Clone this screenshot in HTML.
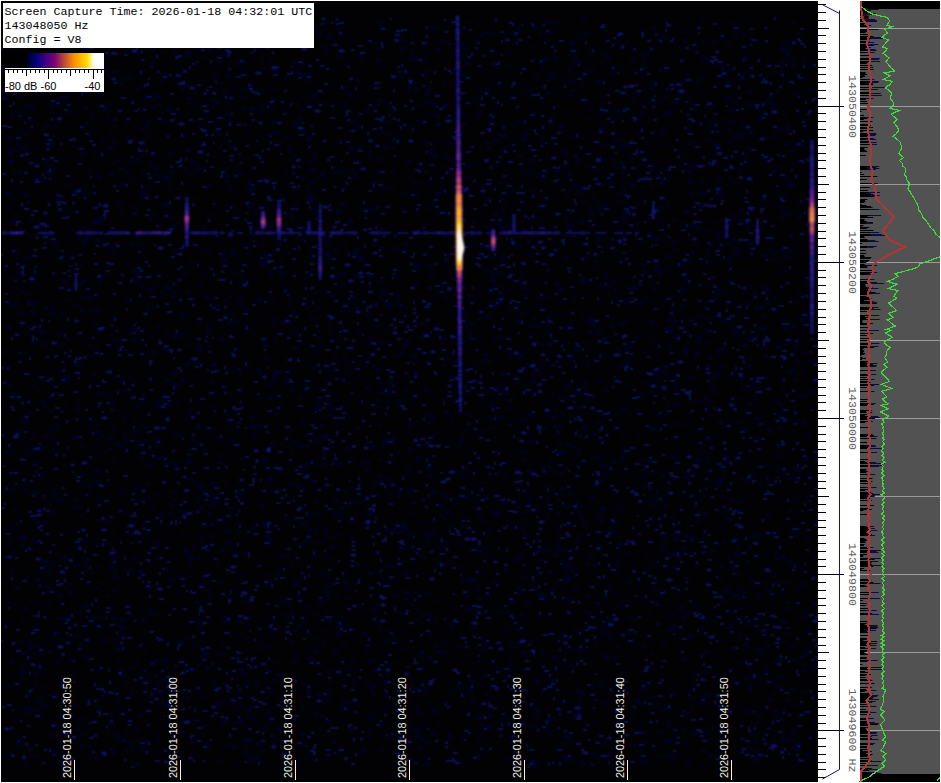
<!DOCTYPE html><html><head><meta charset="utf-8"><style>html,body{margin:0;padding:0;background:#fff;width:941px;height:783px;overflow:hidden}svg{position:absolute;left:0;top:0}</style></head><body><svg width="941" height="783" viewBox="0 0 941 783"><defs>

<filter id="bn" filterUnits="userSpaceOnUse" x="1" y="1" width="817" height="781"><feGaussianBlur stdDeviation="0.85"/></filter>
<filter id="bs" filterUnits="userSpaceOnUse" x="1" y="1" width="817" height="781"><feGaussianBlur stdDeviation="1.0"/></filter>



<linearGradient id="cbar" x1="0" x2="1" y1="0" y2="0">
<stop offset="0" stop-color="#000"/><stop offset="0.198" stop-color="#000"/>
<stop offset="0.318" stop-color="#000080"/><stop offset="0.414" stop-color="#400080"/>
<stop offset="0.505" stop-color="#800070"/><stop offset="0.582" stop-color="#b04040"/>
<stop offset="0.702" stop-color="#ff9000"/><stop offset="0.833" stop-color="#ffe000"/>
<stop offset="0.899" stop-color="#fff"/><stop offset="1" stop-color="#fff"/>
</linearGradient>
</defs><rect x="1" y="1" width="817" height="781" fill="#020204"/><g filter="url(#bn)"><path fill="#06063a" d="M582 17h4v2h-4zM273 19h3v2h-3zM514 19h3v1h-3zM750 20h4v1h-4zM19 21h3v2h-3zM547 21h5v2h-5zM544 22h3v2h-3zM731 22h2v3h-2zM208 23h4v2h-4zM478 23h3v2h-3zM207 25h4v1h-4zM145 26h3v2h-3zM84 27h5v2h-5zM273 27h3v2h-3zM314 27h2v3h-2zM338 27h2v3h-2zM430 27h4v2h-4zM535 27h2v3h-2zM697 27h3v2h-3zM740 27h4v1h-4zM234 28h2v2h-2zM406 28h2v2h-2zM519 28h2v2h-2zM697 28h3v2h-3zM34 29h3v2h-3zM57 29h2v3h-2zM455 29h5v2h-5zM9 30h5v2h-5zM32 30h4v2h-4zM90 30h3v2h-3zM121 30h2v3h-2zM139 30h2v3h-2zM275 30h2v2h-2zM492 30h3v1h-3zM638 30h4v1h-4zM37 31h4v2h-4zM433 31h2v2h-2zM454 31h3v1h-3zM548 31h4v2h-4zM682 31h3v2h-3zM37 32h2v2h-2zM97 32h3v2h-3zM318 32h4v2h-4zM319 32h3v2h-3zM484 32h4v2h-4zM511 32h2v2h-2zM584 32h4v2h-4zM90 33h2v2h-2zM140 33h2v2h-2zM146 33h2v3h-2zM260 33h3v2h-3zM339 33h2v3h-2zM491 33h3v2h-3zM664 33h3v1h-3zM798 33h3v1h-3zM294 34h3v1h-3zM329 34h4v1h-4zM500 34h4v1h-4zM742 34h3v2h-3zM327 35h4v1h-4zM577 36h3v2h-3zM750 36h3v1h-3zM48 37h3v1h-3zM295 37h5v2h-5zM328 37h3v2h-3zM721 37h3v2h-3zM658 38h3v2h-3zM56 39h3v2h-3zM351 39h2v3h-2zM395 39h3v1h-3zM474 39h3v2h-3zM183 40h5v2h-5zM253 40h2v2h-2zM394 40h3v2h-3zM403 40h2v2h-2zM546 40h3v2h-3zM615 40h4v1h-4zM626 40h4v1h-4zM264 41h5v2h-5zM301 41h3v1h-3zM371 41h2v3h-2zM572 42h2v3h-2zM726 42h5v2h-5zM785 42h3v1h-3zM2 43h5v2h-5zM617 43h2v3h-2zM694 43h3v2h-3zM742 43h2v2h-2zM815 43h4v2h-4zM12 44h3v2h-3zM422 44h4v2h-4zM460 44h5v2h-5zM130 45h5v2h-5zM206 45h4v2h-4zM216 45h4v1h-4zM224 45h3v1h-3zM324 46h2v3h-2zM531 46h2v3h-2zM788 46h5v2h-5zM403 47h4v1h-4zM684 47h5v2h-5zM783 47h2v2h-2zM87 48h2v3h-2zM400 48h3v2h-3zM436 48h4v2h-4zM463 48h5v2h-5zM67 49h3v2h-3zM83 49h2v2h-2zM148 49h2v3h-2zM656 49h3v1h-3zM126 50h3v2h-3zM153 50h3v2h-3zM173 50h4v2h-4zM410 50h3v2h-3zM185 51h4v2h-4zM196 51h4v1h-4zM553 51h3v1h-3zM785 51h5v2h-5zM29 52h2v3h-2zM185 52h5v2h-5zM235 52h3v2h-3zM327 52h2v2h-2zM400 52h3v1h-3zM422 52h2v3h-2zM508 52h3v2h-3zM601 53h5v2h-5zM787 53h2v3h-2zM225 54h2v2h-2zM359 54h3v2h-3zM646 54h3v2h-3zM222 55h3v1h-3zM260 55h3v1h-3zM453 55h3v2h-3zM461 55h3v2h-3zM337 56h4v2h-4zM608 56h2v3h-2zM68 57h3v1h-3zM201 57h3v2h-3zM409 57h3v2h-3zM566 57h4v1h-4zM744 57h4v2h-4zM791 57h2v3h-2zM80 58h3v2h-3zM218 58h3v2h-3zM410 58h2v3h-2zM414 58h5v2h-5zM544 58h5v2h-5zM574 58h3v2h-3zM803 58h3v2h-3zM244 59h2v3h-2zM269 59h3v2h-3zM376 59h5v2h-5zM540 59h5v2h-5zM633 59h3v2h-3zM783 59h3v2h-3zM344 60h3v1h-3zM361 60h3v2h-3zM576 60h4v1h-4zM643 60h2v3h-2zM708 60h2v3h-2zM239 61h3v2h-3zM424 61h2v3h-2zM631 61h2v3h-2zM151 62h4v2h-4zM228 62h3v1h-3zM260 62h3v2h-3zM466 62h5v2h-5zM586 62h4v1h-4zM780 62h3v2h-3zM115 63h4v1h-4zM220 63h3v1h-3zM235 63h3v2h-3zM299 63h5v2h-5zM489 63h2v2h-2zM572 63h3v1h-3zM1 64h2v3h-2zM167 64h3v1h-3zM210 64h3v1h-3zM237 64h2v2h-2zM769 64h4v2h-4zM26 65h5v2h-5zM343 65h2v2h-2zM507 65h3v2h-3zM790 65h5v2h-5zM717 66h2v2h-2zM263 67h2v2h-2zM297 67h2v3h-2zM620 67h3v2h-3zM721 67h5v2h-5zM542 68h3v2h-3zM570 68h3v1h-3zM243 69h2v2h-2zM333 69h3v2h-3zM380 69h3v1h-3zM664 69h2v3h-2zM697 69h2v2h-2zM12 70h4v2h-4zM274 70h5v2h-5zM416 70h2v2h-2zM615 70h3v1h-3zM728 70h3v2h-3zM781 70h2v3h-2zM54 71h5v2h-5zM71 71h3v1h-3zM114 71h3v2h-3zM586 71h3v2h-3zM723 71h2v2h-2zM746 71h4v1h-4zM22 72h2v3h-2zM93 72h4v1h-4zM295 72h5v2h-5zM402 72h3v1h-3zM427 72h3v1h-3zM609 72h3v2h-3zM291 73h2v2h-2zM305 73h2v3h-2zM460 73h3v2h-3zM554 73h2v3h-2zM686 73h3v1h-3zM42 74h3v2h-3zM86 74h3v2h-3zM162 74h4v2h-4zM179 74h3v2h-3zM300 74h4v2h-4zM549 74h3v2h-3zM725 74h4v2h-4zM760 74h2v2h-2zM226 75h5v2h-5zM394 75h2v3h-2zM401 75h2v3h-2zM423 75h3v2h-3zM568 75h2v2h-2zM583 75h4v2h-4zM741 75h3v2h-3zM457 76h3v2h-3zM464 76h3v1h-3zM518 76h2v2h-2zM640 76h3v2h-3zM744 76h3v1h-3zM241 77h2v2h-2zM489 77h4v1h-4zM505 77h4v1h-4zM549 77h4v1h-4zM699 77h4v2h-4zM763 77h4v1h-4zM801 77h5v2h-5zM398 78h3v1h-3zM561 79h3v2h-3zM161 80h2v3h-2zM200 80h4v1h-4zM305 80h4v2h-4zM569 80h5v2h-5zM681 80h3v2h-3zM113 81h5v2h-5zM414 81h2v3h-2zM596 81h5v2h-5zM652 81h3v2h-3zM689 81h4v1h-4zM727 81h4v2h-4zM790 81h4v1h-4zM185 82h4v1h-4zM443 82h3v2h-3zM524 82h2v2h-2zM63 83h4v1h-4zM119 83h4v2h-4zM252 83h3v2h-3zM334 83h2v2h-2zM696 83h3v1h-3zM716 83h4v1h-4zM582 84h2v3h-2zM600 84h4v1h-4zM769 84h4v1h-4zM370 85h2v3h-2zM457 85h3v2h-3zM344 86h4v2h-4zM407 86h4v2h-4zM91 87h3v2h-3zM231 87h4v2h-4zM248 87h5v2h-5zM408 87h3v1h-3zM475 87h3v2h-3zM486 87h5v2h-5zM538 87h2v2h-2zM553 87h2v3h-2zM650 87h4v2h-4zM798 87h3v2h-3zM135 88h4v2h-4zM181 88h4v2h-4zM273 88h3v2h-3zM428 88h3v2h-3zM34 89h4v2h-4zM35 89h3v1h-3zM66 89h5v2h-5zM643 89h3v1h-3zM807 89h4v1h-4zM812 89h4v2h-4zM67 90h4v2h-4zM98 90h3v2h-3zM407 90h3v2h-3zM570 90h5v2h-5zM776 90h2v3h-2zM65 91h4v2h-4zM748 91h3v1h-3zM205 92h3v2h-3zM351 92h3v1h-3zM546 92h4v2h-4zM636 92h2v2h-2zM678 92h5v2h-5zM748 92h3v2h-3zM24 93h2v3h-2zM36 93h3v2h-3zM425 93h5v2h-5zM495 93h3v1h-3zM794 93h4v2h-4zM45 94h2v2h-2zM101 94h2v3h-2zM312 94h4v1h-4zM504 94h2v3h-2zM529 94h3v2h-3zM145 95h2v3h-2zM156 95h4v2h-4zM310 95h2v2h-2zM603 95h3v2h-3zM770 95h2v3h-2zM17 96h4v2h-4zM38 96h3v1h-3zM62 96h5v2h-5zM242 96h5v2h-5zM311 96h4v2h-4zM2 97h2v3h-2zM145 97h2v3h-2zM242 97h2v2h-2zM726 97h5v2h-5zM58 98h2v2h-2zM351 98h4v1h-4zM633 98h3v1h-3zM271 99h5v2h-5zM52 100h3v2h-3zM130 100h5v2h-5zM378 100h5v2h-5zM426 100h5v2h-5zM474 100h4v1h-4zM580 100h5v2h-5zM648 100h2v3h-2zM202 101h2v2h-2zM215 101h2v2h-2zM731 101h5v2h-5zM765 101h4v2h-4zM215 102h5v2h-5zM266 102h4v1h-4zM387 102h3v2h-3zM672 102h5v2h-5zM107 103h3v2h-3zM167 103h3v1h-3zM326 103h2v3h-2zM344 103h3v2h-3zM423 103h2v2h-2zM601 103h2v2h-2zM639 103h3v2h-3zM660 103h3v2h-3zM690 103h3v1h-3zM747 103h5v2h-5zM772 103h4v2h-4zM108 104h3v1h-3zM226 104h3v2h-3zM296 104h4v1h-4zM308 104h3v2h-3zM342 104h2v2h-2zM431 104h5v2h-5zM542 104h3v2h-3zM707 104h2v3h-2zM711 104h4v2h-4zM26 105h3v2h-3zM57 105h4v2h-4zM258 105h3v1h-3zM259 105h3v2h-3zM30 106h4v2h-4zM151 106h5v2h-5zM442 106h5v2h-5zM771 106h2v3h-2zM243 107h2v3h-2zM251 107h3v2h-3zM103 108h4v1h-4zM103 108h5v2h-5zM270 108h3v2h-3zM120 109h4v2h-4zM167 109h5v2h-5zM249 109h4v2h-4zM735 109h3v1h-3zM21 110h2v3h-2zM78 110h4v1h-4zM194 110h4v1h-4zM365 110h4v2h-4zM479 110h3v2h-3zM614 110h3v2h-3zM730 110h2v2h-2zM814 110h3v2h-3zM264 111h3v2h-3zM389 111h4v1h-4zM668 111h4v2h-4zM160 112h2v2h-2zM205 112h4v1h-4zM532 112h3v2h-3zM575 112h3v2h-3zM90 113h3v2h-3zM187 113h2v2h-2zM224 113h5v2h-5zM460 113h2v3h-2zM639 113h4v2h-4zM11 114h3v2h-3zM229 114h2v3h-2zM291 114h3v1h-3zM476 114h4v2h-4zM665 114h4v1h-4zM184 115h2v2h-2zM51 116h3v1h-3zM616 116h2v2h-2zM755 116h2v2h-2zM92 117h3v2h-3zM300 117h2v2h-2zM551 117h3v2h-3zM610 117h3v2h-3zM162 118h2v3h-2zM299 118h3v2h-3zM671 118h3v1h-3zM29 119h5v2h-5zM488 119h2v2h-2zM615 119h3v1h-3zM636 119h3v2h-3zM57 120h3v2h-3zM193 120h3v1h-3zM217 120h4v1h-4zM352 120h4v2h-4zM518 120h3v1h-3zM759 120h3v2h-3zM803 120h4v1h-4zM125 121h4v1h-4zM229 121h4v2h-4zM272 121h5v2h-5zM499 121h4v1h-4zM519 121h4v1h-4zM730 121h5v2h-5zM86 122h3v2h-3zM295 122h4v2h-4zM384 122h4v1h-4zM387 122h3v2h-3zM422 122h4v2h-4zM523 122h2v2h-2zM599 122h4v1h-4zM699 122h3v2h-3zM145 124h3v2h-3zM228 124h3v2h-3zM359 124h2v3h-2zM511 124h3v2h-3zM708 124h3v2h-3zM741 124h3v2h-3zM45 125h4v1h-4zM49 125h4v2h-4zM134 125h4v1h-4zM409 125h2v2h-2zM501 125h2v2h-2zM43 126h4v1h-4zM81 126h3v2h-3zM559 126h4v2h-4zM713 126h3v2h-3zM601 127h5v2h-5zM688 127h3v2h-3zM745 127h3v2h-3zM787 127h3v2h-3zM141 128h4v2h-4zM779 128h3v2h-3zM801 128h3v1h-3zM352 129h4v2h-4zM18 130h2v2h-2zM208 130h3v1h-3zM303 130h3v2h-3zM487 130h2v3h-2zM639 130h5v2h-5zM147 131h3v2h-3zM214 131h2v3h-2zM561 131h4v1h-4zM715 131h4v1h-4zM85 132h3v2h-3zM247 132h3v1h-3zM273 132h5v2h-5zM367 132h4v2h-4zM458 132h5v2h-5zM598 132h2v3h-2zM661 132h4v1h-4zM22 133h3v2h-3zM110 133h3v2h-3zM262 133h2v2h-2zM267 133h2v2h-2zM386 133h4v2h-4zM497 133h3v2h-3zM504 133h2v2h-2zM524 133h3v2h-3zM738 133h5v2h-5zM218 134h5v2h-5zM377 134h4v1h-4zM743 134h2v3h-2zM180 135h5v2h-5zM190 135h4v1h-4zM499 135h5v2h-5zM148 136h3v1h-3zM244 136h4v1h-4zM505 136h3v2h-3zM734 136h3v2h-3zM262 137h2v3h-2zM307 137h5v2h-5zM574 137h3v1h-3zM810 137h2v3h-2zM7 138h5v2h-5zM102 138h3v2h-3zM520 138h5v2h-5zM541 138h3v2h-3zM568 138h2v2h-2zM739 138h4v1h-4zM238 139h2v2h-2zM373 139h3v1h-3zM522 139h4v2h-4zM800 139h4v2h-4zM493 140h5v2h-5zM527 140h4v1h-4zM653 140h4v1h-4zM694 140h4v1h-4zM728 140h3v2h-3zM43 141h2v2h-2zM112 141h3v1h-3zM114 141h2v3h-2zM223 141h3v2h-3zM335 141h4v1h-4zM426 141h2v3h-2zM438 141h4v1h-4zM621 141h3v1h-3zM645 141h3v2h-3zM50 142h4v2h-4zM485 142h5v2h-5zM539 142h3v1h-3zM689 142h3v2h-3zM713 143h2v3h-2zM784 143h5v2h-5zM16 144h4v2h-4zM231 144h2v3h-2zM602 144h4v2h-4zM625 144h5v2h-5zM660 144h2v2h-2zM685 144h3v1h-3zM715 144h4v2h-4zM383 145h2v3h-2zM796 145h3v2h-3zM801 145h3v2h-3zM47 146h5v2h-5zM288 146h2v3h-2zM385 146h2v3h-2zM508 146h3v1h-3zM620 146h5v2h-5zM715 146h4v1h-4zM810 146h3v1h-3zM22 147h5v2h-5zM81 147h4v2h-4zM108 147h5v2h-5zM233 147h3v1h-3zM349 147h5v2h-5zM359 147h3v2h-3zM369 147h3v1h-3zM542 147h2v2h-2zM613 147h4v1h-4zM746 147h4v2h-4zM504 148h3v2h-3zM527 148h5v2h-5zM14 149h4v2h-4zM29 149h3v1h-3zM636 149h2v2h-2zM678 149h4v1h-4zM777 149h3v1h-3zM172 150h2v2h-2zM790 150h5v2h-5zM102 152h2v2h-2zM430 152h2v3h-2zM562 152h4v1h-4zM565 152h2v3h-2zM717 152h2v3h-2zM80 153h5v2h-5zM314 153h2v3h-2zM433 153h3v2h-3zM9 154h3v1h-3zM94 154h3v2h-3zM162 154h2v2h-2zM683 154h3v1h-3zM214 155h2v3h-2zM294 155h3v2h-3zM368 156h4v2h-4zM444 156h4v2h-4zM736 156h4v1h-4zM72 158h2v2h-2zM137 158h2v2h-2zM240 158h2v2h-2zM551 158h4v1h-4zM609 158h2v2h-2zM118 159h3v2h-3zM313 159h3v2h-3zM456 159h2v2h-2zM529 159h5v2h-5zM602 159h3v2h-3zM10 160h4v2h-4zM191 160h3v2h-3zM309 160h2v3h-2zM378 160h2v2h-2zM406 160h5v2h-5zM681 160h4v1h-4zM129 161h3v2h-3zM138 161h2v2h-2zM613 162h3v2h-3zM620 162h5v2h-5zM749 162h2v3h-2zM148 164h3v2h-3zM420 164h4v2h-4zM467 164h5v2h-5zM529 164h4v1h-4zM575 164h3v1h-3zM178 165h3v2h-3zM180 165h4v2h-4zM196 165h3v1h-3zM688 165h3v2h-3zM728 165h5v2h-5zM443 166h3v2h-3zM587 166h3v2h-3zM591 166h4v2h-4zM641 166h2v2h-2zM779 166h3v2h-3zM196 167h4v1h-4zM331 167h4v1h-4zM616 167h4v2h-4zM661 167h3v1h-3zM52 168h2v3h-2zM88 168h3v2h-3zM119 168h2v2h-2zM197 168h5v2h-5zM312 168h3v2h-3zM665 168h5v2h-5zM154 169h3v1h-3zM184 169h3v2h-3zM226 169h3v2h-3zM310 169h4v2h-4zM338 169h3v1h-3zM521 169h3v2h-3zM650 169h4v1h-4zM126 170h2v2h-2zM527 170h3v1h-3zM633 170h4v1h-4zM171 171h3v2h-3zM236 171h3v1h-3zM331 171h3v2h-3zM336 171h5v2h-5zM392 171h3v2h-3zM548 171h3v1h-3zM555 171h5v2h-5zM12 172h3v2h-3zM45 172h5v2h-5zM343 172h3v2h-3zM599 172h2v2h-2zM622 172h4v2h-4zM154 173h2v3h-2zM190 173h3v2h-3zM239 173h4v2h-4zM567 173h4v2h-4zM772 173h3v1h-3zM109 174h5v2h-5zM529 174h2v2h-2zM658 174h2v2h-2zM2 175h3v1h-3zM156 175h3v1h-3zM165 175h4v1h-4zM506 175h3v1h-3zM532 175h3v1h-3zM541 175h2v3h-2zM70 176h3v2h-3zM99 176h2v3h-2zM302 176h2v3h-2zM522 176h4v1h-4zM667 176h3v1h-3zM749 176h2v2h-2zM33 177h4v2h-4zM39 177h2v2h-2zM264 177h4v1h-4zM317 177h4v1h-4zM355 177h2v2h-2zM567 177h2v2h-2zM746 177h4v2h-4zM784 177h4v2h-4zM135 178h2v2h-2zM164 178h2v3h-2zM166 178h4v2h-4zM717 178h5v2h-5zM729 178h3v2h-3zM129 179h4v1h-4zM377 179h2v2h-2zM591 179h2v2h-2zM688 179h2v3h-2zM701 180h2v3h-2zM20 181h3v2h-3zM311 181h5v2h-5zM732 181h3v2h-3zM112 182h3v1h-3zM343 182h4v1h-4zM499 182h3v2h-3zM610 182h5v2h-5zM658 182h5v2h-5zM660 182h4v1h-4zM787 182h3v2h-3zM788 182h3v2h-3zM121 183h2v3h-2zM270 183h4v2h-4zM334 183h3v1h-3zM421 183h3v2h-3zM471 183h3v2h-3zM543 183h4v1h-4zM603 183h3v2h-3zM630 183h2v3h-2zM67 184h3v2h-3zM208 184h2v3h-2zM247 184h4v2h-4zM441 184h3v2h-3zM483 184h3v2h-3zM662 184h4v1h-4zM344 185h2v2h-2zM574 185h4v2h-4zM632 185h3v2h-3zM742 185h3v2h-3zM787 185h5v2h-5zM169 186h3v2h-3zM254 186h3v2h-3zM412 186h2v2h-2zM12 187h3v1h-3zM146 187h4v1h-4zM228 187h3v2h-3zM296 187h3v2h-3zM178 188h4v1h-4zM275 188h2v3h-2zM342 188h4v2h-4zM371 188h3v2h-3zM458 188h3v2h-3zM461 188h5v2h-5zM580 188h5v2h-5zM248 189h5v2h-5zM491 189h4v1h-4zM570 189h3v2h-3zM578 189h4v2h-4zM622 189h3v2h-3zM687 189h3v1h-3zM4 190h4v1h-4zM512 190h2v3h-2zM72 191h4v2h-4zM142 191h4v1h-4zM717 191h4v2h-4zM20 192h2v2h-2zM83 192h2v3h-2zM89 192h4v1h-4zM308 192h4v2h-4zM578 192h3v2h-3zM618 192h2v3h-2zM436 193h4v2h-4zM521 193h3v2h-3zM689 193h5v2h-5zM698 193h5v2h-5zM704 193h2v3h-2zM4 194h2v2h-2zM4 194h4v1h-4zM24 194h5v2h-5zM43 194h4v1h-4zM141 194h4v2h-4zM228 194h4v1h-4zM533 194h4v2h-4zM784 194h2v2h-2zM147 195h2v3h-2zM336 195h2v2h-2zM414 195h4v2h-4zM460 195h3v2h-3zM566 195h2v3h-2zM624 195h3v2h-3zM640 195h3v1h-3zM79 196h4v1h-4zM326 196h3v1h-3zM529 196h3v1h-3zM592 196h3v2h-3zM780 196h4v2h-4zM283 197h2v3h-2zM307 197h4v2h-4zM11 198h3v2h-3zM57 198h3v2h-3zM148 198h3v2h-3zM254 198h2v2h-2zM311 198h4v2h-4zM485 198h2v3h-2zM501 198h2v3h-2zM547 198h4v2h-4zM281 199h2v2h-2zM486 200h2v2h-2zM598 200h2v3h-2zM807 200h4v2h-4zM308 201h5v2h-5zM311 201h3v2h-3zM583 201h3v2h-3zM617 201h3v2h-3zM117 202h5v2h-5zM618 202h4v1h-4zM797 202h3v1h-3zM295 203h4v1h-4zM502 203h4v1h-4zM603 203h3v2h-3zM633 203h4v1h-4zM666 203h3v1h-3zM162 204h5v2h-5zM346 204h2v2h-2zM524 204h2v2h-2zM606 204h3v2h-3zM700 205h5v2h-5zM9 206h2v3h-2zM132 206h3v2h-3zM170 206h3v2h-3zM247 206h4v2h-4zM264 206h4v1h-4zM166 207h3v1h-3zM277 207h3v2h-3zM375 207h2v2h-2zM427 207h4v2h-4zM503 207h2v2h-2zM551 207h2v2h-2zM589 207h5v2h-5zM597 207h4v2h-4zM135 208h4v1h-4zM314 208h3v2h-3zM62 209h4v1h-4zM541 209h3v1h-3zM741 209h2v3h-2zM783 209h3v2h-3zM279 210h4v1h-4zM335 210h4v2h-4zM501 210h4v1h-4zM597 210h4v1h-4zM439 211h2v3h-2zM519 211h2v2h-2zM685 211h5v2h-5zM121 212h2v3h-2zM164 212h2v3h-2zM254 212h4v2h-4zM279 212h3v2h-3zM315 212h2v2h-2zM337 212h5v2h-5zM622 212h3v1h-3zM151 213h4v2h-4zM600 213h2v3h-2zM787 213h4v2h-4zM212 214h3v2h-3zM290 214h3v2h-3zM446 214h2v3h-2zM493 214h5v2h-5zM729 214h3v1h-3zM136 215h2v2h-2zM555 215h2v2h-2zM586 215h4v1h-4zM784 215h2v2h-2zM798 215h5v2h-5zM237 216h4v2h-4zM292 216h2v3h-2zM503 216h3v2h-3zM622 216h5v2h-5zM799 216h4v2h-4zM67 217h3v2h-3zM374 217h3v2h-3zM456 217h2v2h-2zM534 218h2v2h-2zM565 218h3v2h-3zM659 218h3v2h-3zM30 219h2v3h-2zM95 219h3v2h-3zM156 219h4v1h-4zM182 219h3v1h-3zM257 219h2v3h-2zM524 219h3v1h-3zM537 219h4v1h-4zM11 220h5v2h-5zM519 220h2v2h-2zM681 220h2v2h-2zM93 221h4v2h-4zM579 221h5v2h-5zM602 221h3v1h-3zM624 221h3v2h-3zM813 221h4v1h-4zM93 222h5v2h-5zM348 222h3v2h-3zM744 222h3v1h-3zM264 223h3v2h-3zM312 223h2v2h-2zM426 223h2v3h-2zM727 223h3v2h-3zM174 224h3v2h-3zM186 224h2v3h-2zM263 224h3v1h-3zM268 224h3v2h-3zM281 224h3v2h-3zM297 224h4v1h-4zM497 224h5v2h-5zM567 224h2v3h-2zM609 224h3v1h-3zM620 224h3v2h-3zM132 225h2v2h-2zM507 225h4v1h-4zM80 226h2v2h-2zM306 226h3v2h-3zM695 226h4v2h-4zM86 227h2v3h-2zM252 227h3v2h-3zM376 227h4v1h-4zM486 227h3v2h-3zM746 227h5v2h-5zM39 228h2v3h-2zM259 228h2v3h-2zM380 228h3v2h-3zM499 228h5v2h-5zM500 228h5v2h-5zM698 228h4v1h-4zM83 229h4v1h-4zM522 229h5v2h-5zM212 230h2v3h-2zM569 230h3v2h-3zM16 231h3v2h-3zM212 231h3v2h-3zM250 231h2v2h-2zM410 231h5v2h-5zM506 231h5v2h-5zM538 232h3v2h-3zM86 233h4v1h-4zM158 233h3v2h-3zM201 233h5v2h-5zM724 233h3v2h-3zM28 234h3v2h-3zM49 234h3v1h-3zM187 234h2v3h-2zM193 234h3v1h-3zM271 234h4v1h-4zM328 234h3v1h-3zM471 234h3v2h-3zM473 234h4v2h-4zM562 234h5v2h-5zM650 234h2v3h-2zM663 234h3v2h-3zM715 234h5v2h-5zM808 234h4v2h-4zM89 235h4v1h-4zM135 235h2v2h-2zM136 235h4v2h-4zM85 236h2v2h-2zM380 236h2v2h-2zM443 236h4v2h-4zM491 236h4v1h-4zM519 236h3v2h-3zM395 237h3v1h-3zM499 237h3v2h-3zM596 237h5v2h-5zM84 238h4v2h-4zM283 238h4v2h-4zM297 238h4v1h-4zM311 238h3v2h-3zM653 238h5v2h-5zM771 238h2v3h-2zM94 239h5v2h-5zM303 239h3v1h-3zM634 239h3v1h-3zM657 239h3v2h-3zM664 239h4v1h-4zM717 239h3v2h-3zM731 239h5v2h-5zM746 239h5v2h-5zM52 240h3v2h-3zM220 241h2v2h-2zM283 241h3v1h-3zM328 241h3v2h-3zM643 241h4v1h-4zM672 241h5v2h-5zM82 242h5v2h-5zM517 242h2v2h-2zM534 242h4v1h-4zM537 242h3v2h-3zM597 242h2v3h-2zM137 243h4v2h-4zM244 243h2v3h-2zM262 243h3v2h-3zM373 243h3v2h-3zM405 243h2v3h-2zM709 243h3v2h-3zM736 243h2v2h-2zM750 243h2v3h-2zM56 244h2v3h-2zM103 244h3v2h-3zM188 244h2v2h-2zM278 244h4v2h-4zM407 244h3v1h-3zM445 244h4v1h-4zM492 244h3v1h-3zM537 244h3v1h-3zM694 244h4v1h-4zM10 245h4v1h-4zM344 245h3v2h-3zM472 245h3v2h-3zM481 245h3v1h-3zM665 245h3v1h-3zM722 245h2v2h-2zM28 246h3v1h-3zM99 246h3v1h-3zM111 246h3v2h-3zM306 246h3v1h-3zM379 246h5v2h-5zM392 246h2v3h-2zM485 246h3v2h-3zM495 246h2v3h-2zM517 246h4v2h-4zM601 246h3v2h-3zM143 247h3v2h-3zM638 247h2v2h-2zM794 247h2v2h-2zM397 248h2v2h-2zM56 249h2v3h-2zM385 249h3v1h-3zM394 249h3v1h-3zM461 249h5v2h-5zM674 249h3v2h-3zM736 249h3v1h-3zM770 249h3v2h-3zM781 249h2v3h-2zM6 250h3v1h-3zM15 250h3v2h-3zM203 250h3v2h-3zM208 250h2v3h-2zM230 250h5v2h-5zM320 250h3v2h-3zM495 250h4v1h-4zM776 250h3v1h-3zM174 251h3v2h-3zM232 251h3v1h-3zM354 251h5v2h-5zM525 251h2v2h-2zM735 251h4v2h-4zM814 251h5v2h-5zM110 252h5v2h-5zM286 252h3v2h-3zM327 252h2v3h-2zM452 252h3v2h-3zM529 252h3v1h-3zM691 252h4v2h-4zM122 253h2v2h-2zM223 253h3v2h-3zM247 253h2v3h-2zM426 253h2v2h-2zM477 253h4v1h-4zM550 253h5v2h-5zM593 253h5v2h-5zM49 254h3v1h-3zM231 254h5v2h-5zM325 254h5v2h-5zM705 254h4v2h-4zM761 254h5v2h-5zM264 255h5v2h-5zM308 255h4v1h-4zM528 255h4v1h-4zM665 255h5v2h-5zM765 255h2v3h-2zM24 256h5v2h-5zM72 256h2v3h-2zM359 256h5v2h-5zM494 256h2v2h-2zM501 256h4v2h-4zM730 256h2v2h-2zM780 256h4v1h-4zM563 257h5v2h-5zM585 257h3v2h-3zM786 257h4v2h-4zM269 258h3v1h-3zM621 258h2v3h-2zM740 258h4v1h-4zM263 259h2v2h-2zM338 259h3v1h-3zM383 259h3v1h-3zM728 259h4v2h-4zM279 260h3v2h-3zM501 260h2v2h-2zM710 260h3v2h-3zM99 261h3v1h-3zM166 261h2v3h-2zM326 261h2v2h-2zM360 261h3v1h-3zM594 261h5v2h-5zM619 261h2v3h-2zM662 261h2v2h-2zM125 262h2v3h-2zM173 262h3v2h-3zM259 262h4v2h-4zM703 262h2v3h-2zM545 263h4v2h-4zM261 264h5v2h-5zM346 264h4v1h-4zM416 264h4v1h-4zM420 264h3v2h-3zM444 264h4v1h-4zM500 264h4v2h-4zM642 264h3v2h-3zM686 264h3v1h-3zM415 265h4v1h-4zM474 265h4v1h-4zM679 265h4v2h-4zM22 266h3v1h-3zM504 266h4v1h-4zM429 267h2v2h-2zM567 267h5v2h-5zM783 267h3v1h-3zM593 268h3v2h-3zM654 268h4v2h-4zM668 268h3v2h-3zM690 268h3v1h-3zM230 269h3v2h-3zM312 269h3v1h-3zM417 269h2v3h-2zM132 270h5v2h-5zM271 270h4v1h-4zM449 270h2v2h-2zM485 270h5v2h-5zM510 270h3v1h-3zM658 270h5v2h-5zM202 271h4v1h-4zM343 271h2v3h-2zM491 271h3v2h-3zM783 271h3v1h-3zM797 271h2v2h-2zM136 272h3v1h-3zM184 272h3v2h-3zM234 272h2v3h-2zM280 272h3v2h-3zM308 272h3v1h-3zM497 272h5v2h-5zM19 273h3v2h-3zM337 273h5v2h-5zM660 273h2v3h-2zM31 274h3v2h-3zM99 274h5v2h-5zM356 274h3v2h-3zM430 274h4v2h-4zM521 274h4v2h-4zM135 275h5v2h-5zM205 275h3v1h-3zM334 275h3v1h-3zM355 275h3v2h-3zM367 275h3v1h-3zM202 276h2v3h-2zM202 276h2v2h-2zM239 276h4v2h-4zM269 276h4v1h-4zM395 276h4v2h-4zM492 276h3v2h-3zM547 276h4v1h-4zM605 276h4v2h-4zM13 278h2v2h-2zM32 278h3v1h-3zM254 278h3v1h-3zM280 279h4v1h-4zM490 279h3v2h-3zM518 279h2v2h-2zM685 279h3v1h-3zM63 280h4v2h-4zM83 280h3v2h-3zM380 280h2v3h-2zM493 280h3v2h-3zM582 280h4v1h-4zM612 280h3v2h-3zM729 280h4v2h-4zM33 281h3v2h-3zM55 281h2v2h-2zM536 281h3v2h-3zM581 281h5v2h-5zM238 282h2v2h-2zM555 282h2v2h-2zM584 282h3v1h-3zM415 283h3v2h-3zM516 283h3v2h-3zM556 283h3v2h-3zM651 283h3v2h-3zM815 283h3v1h-3zM138 284h4v2h-4zM140 284h4v2h-4zM155 284h3v2h-3zM441 284h3v2h-3zM607 284h3v2h-3zM199 285h3v2h-3zM245 285h3v2h-3zM369 285h3v1h-3zM598 285h5v2h-5zM705 285h2v2h-2zM748 285h3v2h-3zM631 286h2v3h-2zM677 286h3v1h-3zM698 286h3v2h-3zM743 286h2v2h-2zM15 287h3v2h-3zM447 287h4v2h-4zM501 287h4v2h-4zM811 287h3v2h-3zM86 288h4v2h-4zM148 288h5v2h-5zM168 288h3v2h-3zM381 288h2v2h-2zM561 288h3v2h-3zM602 288h2v2h-2zM627 288h5v2h-5zM717 288h2v3h-2zM745 288h2v3h-2zM134 289h3v1h-3zM284 289h4v2h-4zM558 289h3v2h-3zM681 289h5v2h-5zM765 289h5v2h-5zM187 290h2v3h-2zM238 290h3v1h-3zM382 290h3v2h-3zM491 290h2v3h-2zM527 290h4v1h-4zM614 290h3v2h-3zM22 291h3v2h-3zM173 291h2v3h-2zM437 291h5v2h-5zM725 291h3v2h-3zM347 292h3v1h-3zM679 292h3v2h-3zM753 292h3v2h-3zM385 293h3v2h-3zM503 293h2v2h-2zM715 293h5v2h-5zM798 293h3v2h-3zM733 294h2v3h-2zM172 295h2v3h-2zM330 295h5v2h-5zM395 295h5v2h-5zM468 295h3v2h-3zM497 295h4v1h-4zM525 295h2v3h-2zM229 296h3v2h-3zM240 296h3v2h-3zM573 296h2v2h-2zM670 296h3v1h-3zM87 297h5v2h-5zM258 297h3v2h-3zM288 297h4v2h-4zM353 297h3v1h-3zM445 297h4v2h-4zM460 297h4v2h-4zM548 297h3v2h-3zM208 298h2v2h-2zM474 298h3v1h-3zM644 298h3v2h-3zM66 299h2v2h-2zM70 299h3v1h-3zM239 299h4v1h-4zM270 299h4v2h-4zM364 299h2v2h-2zM618 299h2v2h-2zM28 300h3v2h-3zM335 300h2v2h-2zM662 300h4v2h-4zM84 301h3v1h-3zM238 301h2v2h-2zM397 301h3v1h-3zM490 301h2v2h-2zM500 301h3v2h-3zM572 301h4v1h-4zM640 301h4v2h-4zM707 301h5v2h-5zM34 302h3v2h-3zM508 302h3v1h-3zM558 302h2v2h-2zM624 302h5v2h-5zM766 302h3v2h-3zM75 303h2v2h-2zM147 303h3v1h-3zM289 303h2v2h-2zM347 303h4v1h-4zM605 303h2v2h-2zM810 303h5v2h-5zM1 304h4v1h-4zM386 304h5v2h-5zM388 304h5v2h-5zM494 304h3v2h-3zM533 304h2v2h-2zM739 304h4v1h-4zM10 305h5v2h-5zM32 305h3v2h-3zM73 305h4v1h-4zM214 305h4v2h-4zM240 305h5v2h-5zM375 305h2v3h-2zM493 305h2v2h-2zM288 306h3v1h-3zM307 306h3v2h-3zM706 306h2v3h-2zM146 307h3v2h-3zM317 307h3v2h-3zM355 307h4v2h-4zM703 307h4v2h-4zM431 308h2v2h-2zM96 309h5v2h-5zM246 309h4v2h-4zM773 309h4v2h-4zM91 310h4v2h-4zM347 310h5v2h-5zM459 310h3v2h-3zM20 311h2v3h-2zM30 311h5v2h-5zM80 311h3v2h-3zM292 311h2v3h-2zM524 311h4v1h-4zM215 312h3v1h-3zM231 312h3v2h-3zM463 312h4v2h-4zM521 312h2v3h-2zM738 312h3v2h-3zM17 313h3v1h-3zM50 313h5v2h-5zM449 313h4v1h-4zM717 313h2v3h-2zM180 314h5v2h-5zM367 314h4v2h-4zM557 314h3v2h-3zM672 314h2v3h-2zM746 314h3v1h-3zM186 315h2v2h-2zM547 315h4v1h-4zM697 315h3v2h-3zM714 315h2v3h-2zM718 315h5v2h-5zM763 315h3v2h-3zM486 316h3v1h-3zM55 317h4v1h-4zM112 317h5v2h-5zM309 317h3v2h-3zM486 317h3v2h-3zM613 317h4v2h-4zM709 317h3v1h-3zM798 317h4v1h-4zM271 319h5v2h-5zM316 319h2v3h-2zM374 319h4v2h-4zM668 319h2v3h-2zM782 319h3v2h-3zM808 319h2v2h-2zM516 320h5v2h-5zM624 320h3v2h-3zM644 320h3v1h-3zM673 320h5v2h-5zM801 320h2v3h-2zM235 321h4v2h-4zM282 321h4v2h-4zM284 321h3v2h-3zM291 321h3v2h-3zM570 321h3v2h-3zM587 321h4v2h-4zM722 321h4v2h-4zM135 322h2v2h-2zM233 322h3v2h-3zM162 323h4v1h-4zM329 323h2v3h-2zM419 323h5v2h-5zM435 323h3v2h-3zM469 323h5v2h-5zM547 323h2v3h-2zM650 323h3v2h-3zM730 323h4v2h-4zM94 324h3v2h-3zM470 324h3v1h-3zM528 324h4v2h-4zM592 324h4v2h-4zM672 324h2v3h-2zM0 325h3v1h-3zM27 325h2v2h-2zM125 325h2v2h-2zM157 325h2v3h-2zM221 325h2v2h-2zM374 325h2v3h-2zM464 325h2v3h-2zM566 325h3v2h-3zM610 325h4v2h-4zM688 325h3v1h-3zM60 326h2v2h-2zM295 326h2v2h-2zM387 326h3v2h-3zM698 326h3v1h-3zM37 327h4v2h-4zM261 327h3v1h-3zM670 327h2v3h-2zM760 327h5v2h-5zM131 328h4v2h-4zM244 328h4v2h-4zM287 328h4v1h-4zM567 328h3v2h-3zM785 328h3v2h-3zM115 329h3v1h-3zM473 329h2v2h-2zM670 329h3v2h-3zM763 329h3v2h-3zM811 329h5v2h-5zM207 330h3v2h-3zM235 330h3v1h-3zM363 330h3v1h-3zM705 330h3v2h-3zM732 330h5v2h-5zM42 331h3v2h-3zM137 331h2v2h-2zM292 331h3v1h-3zM329 331h3v2h-3zM386 331h2v2h-2zM668 331h2v2h-2zM26 332h3v2h-3zM295 332h3v2h-3zM469 332h2v3h-2zM511 332h4v1h-4zM545 332h5v2h-5zM596 332h4v2h-4zM685 332h5v2h-5zM736 332h3v2h-3zM173 333h2v2h-2zM179 333h4v2h-4zM253 333h3v2h-3zM423 333h5v2h-5zM532 333h3v1h-3zM570 333h3v2h-3zM58 334h5v2h-5zM480 334h2v3h-2zM614 334h3v2h-3zM150 335h3v2h-3zM183 335h3v2h-3zM398 335h3v1h-3zM678 335h2v3h-2zM751 335h2v3h-2zM756 335h2v3h-2zM110 336h4v1h-4zM173 336h4v2h-4zM635 336h3v2h-3zM88 337h4v1h-4zM442 337h4v2h-4zM674 337h5v2h-5zM740 337h2v2h-2zM788 337h3v1h-3zM67 338h3v2h-3zM76 338h3v1h-3zM219 338h5v2h-5zM338 338h2v2h-2zM420 338h2v2h-2zM474 338h4v2h-4zM746 338h4v2h-4zM133 339h5v2h-5zM494 339h3v2h-3zM648 340h4v1h-4zM696 340h5v2h-5zM262 341h3v2h-3zM333 341h2v2h-2zM459 341h5v2h-5zM588 341h2v3h-2zM655 341h3v1h-3zM380 342h3v2h-3zM536 342h3v1h-3zM186 343h2v2h-2zM301 343h4v1h-4zM320 343h2v3h-2zM368 343h2v2h-2zM784 343h3v2h-3zM61 344h3v2h-3zM189 344h4v1h-4zM366 344h3v1h-3zM403 344h5v2h-5zM540 344h4v2h-4zM795 344h4v2h-4zM57 345h4v1h-4zM222 345h2v2h-2zM263 345h5v2h-5zM456 345h2v2h-2zM630 345h2v3h-2zM668 345h3v2h-3zM742 345h2v3h-2zM779 345h3v2h-3zM795 345h3v2h-3zM813 345h4v1h-4zM115 346h2v2h-2zM625 346h4v2h-4zM777 346h2v3h-2zM94 347h3v2h-3zM293 347h5v2h-5zM197 348h5v2h-5zM237 348h2v3h-2zM523 348h4v1h-4zM683 348h5v2h-5zM721 348h5v2h-5zM124 349h5v2h-5zM317 349h2v3h-2zM574 349h4v2h-4zM586 349h3v1h-3zM617 349h4v1h-4zM626 349h3v1h-3zM684 350h2v3h-2zM718 350h3v1h-3zM152 351h5v2h-5zM163 351h3v2h-3zM643 351h3v2h-3zM717 351h3v2h-3zM33 352h4v1h-4zM148 352h4v1h-4zM309 352h2v2h-2zM515 352h4v1h-4zM804 352h3v2h-3zM509 353h2v3h-2zM601 353h3v2h-3zM334 354h3v2h-3zM695 354h3v2h-3zM90 355h2v2h-2zM227 355h2v2h-2zM411 355h5v2h-5zM423 355h3v1h-3zM659 355h2v2h-2zM606 356h3v2h-3zM290 357h4v1h-4zM343 357h3v2h-3zM486 357h2v3h-2zM519 357h3v2h-3zM742 357h4v1h-4zM750 357h3v2h-3zM243 358h3v1h-3zM264 358h4v2h-4zM448 358h2v3h-2zM527 358h2v2h-2zM234 359h2v2h-2zM299 360h4v1h-4zM454 360h5v2h-5zM481 360h2v3h-2zM536 360h3v1h-3zM812 360h3v2h-3zM595 361h3v2h-3zM625 361h5v2h-5zM678 361h5v2h-5zM780 361h4v1h-4zM187 362h2v3h-2zM195 362h3v2h-3zM201 362h3v2h-3zM345 362h4v1h-4zM585 362h4v2h-4zM532 363h4v2h-4zM687 363h3v1h-3zM724 363h2v2h-2zM78 364h3v2h-3zM475 364h3v1h-3zM524 364h3v2h-3zM611 364h2v2h-2zM620 364h2v3h-2zM70 365h4v1h-4zM76 365h3v1h-3zM113 365h3v1h-3zM542 365h3v2h-3zM707 365h2v3h-2zM719 365h4v2h-4zM735 365h3v1h-3zM746 365h4v2h-4zM374 366h3v2h-3zM555 366h4v1h-4zM630 366h4v1h-4zM667 366h2v3h-2zM677 366h2v2h-2zM310 367h5v2h-5zM348 367h3v1h-3zM574 367h3v2h-3zM257 368h4v2h-4zM492 368h3v1h-3zM1 369h3v1h-3zM247 369h4v1h-4zM290 369h3v2h-3zM376 369h5v2h-5zM537 369h3v2h-3zM793 369h3v2h-3zM61 370h4v2h-4zM275 370h2v3h-2zM282 370h3v1h-3zM346 370h2v3h-2zM715 370h3v1h-3zM789 370h3v1h-3zM703 371h4v1h-4zM788 371h3v2h-3zM663 372h5v2h-5zM799 372h3v2h-3zM171 373h2v3h-2zM173 373h4v2h-4zM501 373h5v2h-5zM531 373h5v2h-5zM539 373h2v3h-2zM150 374h3v1h-3zM240 374h2v2h-2zM273 374h4v2h-4zM63 375h3v2h-3zM197 375h2v3h-2zM449 375h3v2h-3zM655 375h3v2h-3zM668 375h3v1h-3zM673 375h3v1h-3zM21 376h4v1h-4zM65 376h3v2h-3zM662 376h3v1h-3zM689 376h2v3h-2zM691 376h4v1h-4zM712 376h5v2h-5zM39 377h2v2h-2zM357 377h3v1h-3zM514 377h3v1h-3zM731 377h4v1h-4zM763 377h4v2h-4zM75 378h4v1h-4zM115 378h2v2h-2zM121 378h3v2h-3zM275 378h3v2h-3zM340 378h5v2h-5zM740 378h3v2h-3zM43 379h4v1h-4zM64 379h3v2h-3zM165 379h4v2h-4zM181 379h4v2h-4zM92 380h2v2h-2zM133 380h3v1h-3zM475 380h4v2h-4zM533 380h3v2h-3zM754 380h2v3h-2zM815 380h2v3h-2zM59 381h3v2h-3zM151 381h3v2h-3zM210 381h4v2h-4zM598 381h2v2h-2zM223 382h2v3h-2zM283 382h2v2h-2zM286 382h2v3h-2zM349 382h3v2h-3zM643 382h3v2h-3zM656 382h4v1h-4zM133 383h2v2h-2zM172 383h4v2h-4zM501 383h3v2h-3zM268 384h3v2h-3zM567 384h3v1h-3zM673 384h4v2h-4zM49 385h2v2h-2zM465 385h2v3h-2zM565 386h5v2h-5zM753 386h5v2h-5zM302 387h3v2h-3zM497 387h4v2h-4zM582 387h3v2h-3zM709 387h4v1h-4zM749 387h2v2h-2zM174 388h4v2h-4zM366 388h4v1h-4zM452 388h4v1h-4zM576 388h4v1h-4zM675 388h4v1h-4zM802 388h3v1h-3zM290 389h3v2h-3zM292 389h2v3h-2zM384 389h5v2h-5zM424 389h4v2h-4zM485 389h4v1h-4zM604 389h4v2h-4zM760 389h4v1h-4zM782 389h3v2h-3zM123 390h3v2h-3zM314 390h2v2h-2zM405 390h3v2h-3zM692 390h4v1h-4zM102 391h4v2h-4zM132 391h3v1h-3zM214 391h3v2h-3zM239 391h3v2h-3zM493 391h2v3h-2zM761 391h3v1h-3zM808 391h5v2h-5zM230 392h3v1h-3zM379 392h4v2h-4zM384 392h4v1h-4zM503 392h4v2h-4zM504 392h5v2h-5zM523 392h4v2h-4zM576 392h2v3h-2zM588 392h2v3h-2zM641 392h3v2h-3zM657 392h3v1h-3zM11 393h4v2h-4zM97 393h4v2h-4zM163 393h3v2h-3zM393 393h2v3h-2zM576 393h5v2h-5zM386 394h4v1h-4zM531 394h3v2h-3zM107 395h3v2h-3zM367 395h3v1h-3zM403 395h4v1h-4zM299 396h2v3h-2zM800 396h3v2h-3zM566 397h3v2h-3zM592 397h4v2h-4zM755 397h2v3h-2zM48 398h2v2h-2zM259 398h3v2h-3zM326 398h3v1h-3zM336 398h2v2h-2zM498 398h4v1h-4zM584 398h5v2h-5zM740 398h3v2h-3zM129 399h2v2h-2zM144 399h2v3h-2zM459 399h4v1h-4zM773 399h3v1h-3zM176 400h2v3h-2zM434 400h4v1h-4zM693 400h3v2h-3zM41 401h4v2h-4zM112 401h3v2h-3zM154 401h4v2h-4zM317 401h2v3h-2zM386 401h3v2h-3zM397 401h4v2h-4zM543 401h3v2h-3zM711 401h3v1h-3zM29 402h2v3h-2zM323 402h2v2h-2zM709 402h4v1h-4zM778 402h2v3h-2zM676 403h4v2h-4zM706 403h2v2h-2zM748 403h5v2h-5zM64 404h3v2h-3zM160 404h2v3h-2zM170 404h2v3h-2zM279 404h3v2h-3zM403 404h2v2h-2zM488 404h5v2h-5zM780 404h2v3h-2zM135 405h4v2h-4zM169 405h3v2h-3zM212 405h3v2h-3zM341 405h4v2h-4zM366 405h4v1h-4zM372 405h5v2h-5zM492 405h2v2h-2zM673 405h4v1h-4zM44 406h3v2h-3zM579 406h3v2h-3zM794 406h3v1h-3zM158 407h3v2h-3zM329 407h3v2h-3zM577 407h2v2h-2zM613 407h2v2h-2zM705 407h4v1h-4zM816 407h2v2h-2zM313 408h4v2h-4zM332 408h5v2h-5zM505 408h4v1h-4zM635 408h3v1h-3zM717 408h4v2h-4zM621 409h5v2h-5zM0 410h3v2h-3zM21 410h4v1h-4zM279 410h4v1h-4zM119 411h4v1h-4zM188 411h4v2h-4zM275 411h3v1h-3zM546 411h4v2h-4zM598 411h4v2h-4zM638 411h2v2h-2zM30 412h3v2h-3zM462 412h4v1h-4zM665 412h2v3h-2zM225 413h2v3h-2zM275 413h2v2h-2zM330 413h2v2h-2zM426 413h3v2h-3zM454 413h3v1h-3zM528 413h5v2h-5zM561 413h4v2h-4zM602 413h3v1h-3zM607 413h2v3h-2zM213 414h2v3h-2zM235 414h3v1h-3zM329 414h3v2h-3zM709 414h3v2h-3zM520 415h4v1h-4zM657 415h3v2h-3zM188 416h3v1h-3zM499 416h2v2h-2zM249 417h5v2h-5zM430 417h3v2h-3zM489 417h4v2h-4zM551 417h5v2h-5zM20 418h3v2h-3zM123 418h3v2h-3zM433 418h3v1h-3zM528 418h2v2h-2zM755 418h5v2h-5zM183 419h3v2h-3zM521 419h5v2h-5zM787 419h2v2h-2zM796 419h2v3h-2zM302 420h2v3h-2zM347 420h2v2h-2zM497 420h3v2h-3zM801 420h4v1h-4zM27 421h2v3h-2zM741 421h4v1h-4zM564 422h3v1h-3zM596 422h3v1h-3zM599 422h2v3h-2zM599 422h2v2h-2zM97 423h3v2h-3zM196 423h3v2h-3zM583 423h3v1h-3zM722 423h3v1h-3zM90 424h2v2h-2zM110 424h2v2h-2zM671 424h2v2h-2zM677 424h3v2h-3zM804 424h2v3h-2zM139 425h4v1h-4zM258 425h3v2h-3zM334 425h3v1h-3zM407 425h5v2h-5zM559 425h3v2h-3zM57 426h3v1h-3zM230 426h3v1h-3zM250 426h5v2h-5zM490 426h2v3h-2zM583 426h4v1h-4zM612 426h5v2h-5zM23 427h3v2h-3zM55 427h3v2h-3zM112 427h3v2h-3zM202 427h4v1h-4zM254 427h4v2h-4zM582 427h3v2h-3zM649 427h4v2h-4zM49 428h2v2h-2zM227 428h2v2h-2zM276 428h2v2h-2zM584 428h2v2h-2zM651 428h5v2h-5zM652 428h5v2h-5zM691 428h4v1h-4zM742 428h2v2h-2zM768 428h2v2h-2zM1 429h3v2h-3zM88 429h3v2h-3zM233 429h3v2h-3zM456 429h4v1h-4zM16 430h4v2h-4zM519 430h3v1h-3zM793 430h2v3h-2zM48 431h2v2h-2zM95 431h5v2h-5zM134 431h5v2h-5zM434 431h4v1h-4zM522 431h2v2h-2zM32 433h3v2h-3zM174 433h3v2h-3zM715 433h3v1h-3zM805 433h2v2h-2zM253 434h3v2h-3zM527 434h4v1h-4zM776 434h2v2h-2zM304 435h2v3h-2zM321 435h2v3h-2zM431 435h4v2h-4zM460 435h3v2h-3zM75 436h5v2h-5zM101 436h3v2h-3zM125 436h4v1h-4zM178 436h3v2h-3zM199 436h4v1h-4zM323 436h5v2h-5zM622 436h3v2h-3zM52 437h2v3h-2zM109 437h5v2h-5zM191 437h2v3h-2zM242 437h4v1h-4zM315 437h3v2h-3zM600 437h4v1h-4zM757 437h2v3h-2zM808 437h4v1h-4zM157 438h3v2h-3zM392 438h4v2h-4zM708 438h3v2h-3zM20 439h2v2h-2zM152 439h3v1h-3zM230 439h5v2h-5zM145 440h3v2h-3zM293 440h2v3h-2zM317 440h4v2h-4zM383 440h5v2h-5zM520 440h4v1h-4zM601 440h4v2h-4zM51 441h4v1h-4zM138 441h2v3h-2zM295 441h3v1h-3zM428 441h2v3h-2zM459 441h5v2h-5zM270 442h3v2h-3zM527 442h3v1h-3zM558 442h4v2h-4zM216 443h4v1h-4zM280 443h3v1h-3zM354 443h4v1h-4zM695 443h2v2h-2zM300 444h3v2h-3zM80 445h4v2h-4zM101 445h4v1h-4zM120 445h3v2h-3zM133 445h3v2h-3zM299 445h4v2h-4zM307 445h3v2h-3zM373 445h3v2h-3zM417 445h5v2h-5zM155 446h4v2h-4zM371 446h2v3h-2zM570 446h5v2h-5zM777 446h3v2h-3zM24 447h3v2h-3zM39 447h5v2h-5zM141 447h3v2h-3zM191 447h3v2h-3zM457 447h4v1h-4zM622 447h3v2h-3zM735 447h3v2h-3zM347 448h2v3h-2zM498 448h2v3h-2zM643 448h2v2h-2zM53 449h3v2h-3zM202 449h3v2h-3zM408 449h3v2h-3zM519 449h2v2h-2zM13 450h2v2h-2zM264 450h4v1h-4zM383 450h2v2h-2zM5 451h5v2h-5zM31 451h4v2h-4zM95 451h2v2h-2zM278 451h3v2h-3zM522 451h5v2h-5zM562 451h5v2h-5zM702 451h3v2h-3zM398 452h2v3h-2zM558 452h4v2h-4zM562 452h2v3h-2zM738 452h2v3h-2zM333 453h4v1h-4zM600 453h4v1h-4zM772 453h3v1h-3zM150 454h4v1h-4zM220 454h2v3h-2zM458 455h2v2h-2zM510 455h4v1h-4zM590 455h4v1h-4zM670 455h3v2h-3zM696 455h4v1h-4zM723 455h5v2h-5zM597 456h2v3h-2zM622 456h2v3h-2zM778 456h3v1h-3zM15 457h4v1h-4zM158 457h2v3h-2zM158 457h4v2h-4zM239 457h4v1h-4zM599 457h4v1h-4zM672 457h4v1h-4zM686 457h3v1h-3zM816 457h2v3h-2zM621 458h2v3h-2zM696 458h2v2h-2zM705 458h4v2h-4zM806 458h2v2h-2zM262 459h5v2h-5zM415 459h3v2h-3zM523 459h3v2h-3zM533 459h3v1h-3zM549 459h2v2h-2zM814 459h3v2h-3zM113 460h3v2h-3zM189 460h3v2h-3zM313 460h4v1h-4zM332 460h3v2h-3zM507 460h2v2h-2zM583 460h3v2h-3zM648 460h4v2h-4zM696 460h3v1h-3zM698 460h4v2h-4zM262 461h2v3h-2zM726 461h5v2h-5zM86 462h2v2h-2zM165 462h5v2h-5zM290 462h4v1h-4zM550 462h4v1h-4zM578 462h2v2h-2zM174 463h2v2h-2zM338 463h5v2h-5zM361 463h4v2h-4zM219 464h4v1h-4zM275 464h2v2h-2zM303 464h5v2h-5zM431 464h3v1h-3zM501 464h4v1h-4zM602 464h5v2h-5zM174 465h5v2h-5zM317 465h2v2h-2zM600 465h3v1h-3zM764 465h3v2h-3zM64 466h3v1h-3zM149 466h3v2h-3zM426 466h4v2h-4zM430 466h3v1h-3zM547 466h5v2h-5zM718 466h3v1h-3zM542 467h3v2h-3zM674 467h4v1h-4zM781 467h5v2h-5zM213 468h2v3h-2zM426 468h2v2h-2zM794 468h5v2h-5zM303 469h3v2h-3zM406 469h4v2h-4zM643 469h4v2h-4zM94 470h5v2h-5zM682 470h3v2h-3zM773 470h4v1h-4zM124 471h3v1h-3zM175 471h2v2h-2zM458 471h2v3h-2zM498 471h3v2h-3zM527 471h2v2h-2zM545 471h3v1h-3zM554 471h3v2h-3zM655 471h2v2h-2zM706 471h4v1h-4zM42 472h3v2h-3zM529 472h2v2h-2zM688 472h4v1h-4zM81 473h3v2h-3zM561 473h3v1h-3zM597 473h3v2h-3zM601 473h3v1h-3zM632 473h2v2h-2zM748 473h5v2h-5zM604 474h4v1h-4zM694 474h3v1h-3zM34 475h2v2h-2zM146 475h3v1h-3zM406 475h3v1h-3zM427 475h4v1h-4zM428 475h4v2h-4zM576 475h5v2h-5zM661 475h4v2h-4zM39 476h2v3h-2zM41 476h2v2h-2zM76 476h4v2h-4zM185 476h2v3h-2zM463 476h3v2h-3zM604 476h2v3h-2zM684 476h5v2h-5zM793 476h3v2h-3zM807 476h3v1h-3zM640 477h3v2h-3zM787 477h4v2h-4zM267 478h5v2h-5zM271 478h2v3h-2zM387 478h2v2h-2zM740 478h4v2h-4zM91 479h4v1h-4zM190 479h3v1h-3zM96 480h4v2h-4zM711 480h2v3h-2zM719 480h3v2h-3zM380 481h5v2h-5zM519 481h2v3h-2zM767 481h2v3h-2zM359 482h3v2h-3zM716 482h4v1h-4zM107 483h4v1h-4zM146 483h3v2h-3zM209 483h5v2h-5zM225 483h3v2h-3zM289 483h3v2h-3zM295 483h3v1h-3zM718 483h5v2h-5zM83 484h2v2h-2zM87 484h5v2h-5zM593 484h4v2h-4zM759 484h3v1h-3zM135 486h2v3h-2zM265 486h4v1h-4zM296 486h5v2h-5zM298 486h4v1h-4zM665 486h3v2h-3zM198 487h5v2h-5zM349 487h4v1h-4zM372 487h3v2h-3zM633 487h4v1h-4zM642 487h3v2h-3zM522 488h2v2h-2zM23 489h4v2h-4zM52 489h4v1h-4zM277 489h3v2h-3zM319 489h2v3h-2zM406 489h3v2h-3zM3 490h2v2h-2zM11 490h3v2h-3zM89 490h3v1h-3zM122 490h3v2h-3zM237 490h4v2h-4zM271 490h2v2h-2zM408 490h4v2h-4zM552 490h3v2h-3zM115 491h3v1h-3zM168 491h2v3h-2zM432 491h5v2h-5zM32 492h5v2h-5zM202 492h3v1h-3zM398 492h2v3h-2zM398 492h2v2h-2zM202 493h5v2h-5zM212 493h2v3h-2zM239 493h3v2h-3zM444 493h2v2h-2zM569 493h4v2h-4zM763 493h5v2h-5zM776 493h2v2h-2zM156 494h3v2h-3zM376 494h3v2h-3zM389 494h3v2h-3zM119 495h3v1h-3zM245 495h2v2h-2zM397 495h2v2h-2zM408 495h2v2h-2zM443 495h4v1h-4zM458 495h3v2h-3zM467 495h2v3h-2zM528 495h2v2h-2zM559 495h4v1h-4zM590 496h2v3h-2zM594 496h2v3h-2zM721 496h3v2h-3zM97 497h2v2h-2zM148 497h2v3h-2zM454 497h2v3h-2zM462 497h4v2h-4zM547 497h3v2h-3zM798 497h2v2h-2zM42 498h2v2h-2zM55 498h3v2h-3zM75 498h2v3h-2zM136 498h2v2h-2zM197 498h5v2h-5zM367 498h2v2h-2zM444 498h3v2h-3zM700 498h3v1h-3zM745 498h2v2h-2zM794 498h2v3h-2zM59 499h5v2h-5zM473 499h2v3h-2zM473 500h4v2h-4zM483 500h3v1h-3zM642 500h2v3h-2zM649 500h3v2h-3zM656 500h3v2h-3zM659 500h3v1h-3zM212 501h3v2h-3zM353 501h4v2h-4zM361 501h3v1h-3zM596 501h3v1h-3zM737 501h4v2h-4zM270 502h3v1h-3zM341 502h3v2h-3zM775 502h3v1h-3zM455 503h3v1h-3zM490 503h4v1h-4zM526 503h5v2h-5zM615 503h3v2h-3zM211 504h4v2h-4zM260 504h2v2h-2zM529 504h3v2h-3zM259 505h4v2h-4zM654 505h4v1h-4zM664 505h4v2h-4zM73 506h5v2h-5zM80 506h3v1h-3zM151 506h3v2h-3zM439 506h5v2h-5zM516 506h5v2h-5zM602 506h2v3h-2zM809 506h3v1h-3zM55 507h3v1h-3zM695 507h2v2h-2zM196 508h4v1h-4zM229 508h3v2h-3zM537 508h3v2h-3zM622 508h3v2h-3zM38 509h5v2h-5zM600 509h5v2h-5zM617 509h3v2h-3zM722 509h3v2h-3zM12 510h4v1h-4zM379 510h3v1h-3zM499 510h4v1h-4zM525 510h5v2h-5zM737 510h5v2h-5zM15 511h3v1h-3zM123 511h4v2h-4zM136 511h4v1h-4zM262 511h2v2h-2zM333 511h4v1h-4zM446 511h5v2h-5zM490 511h4v1h-4zM182 512h4v1h-4zM317 512h3v2h-3zM368 512h5v2h-5zM410 512h3v2h-3zM495 512h5v2h-5zM519 512h3v2h-3zM556 512h4v2h-4zM697 512h2v2h-2zM51 513h3v2h-3zM159 513h5v2h-5zM169 513h2v2h-2zM184 513h3v2h-3zM310 513h2v3h-2zM334 513h3v2h-3zM703 513h3v1h-3zM51 514h3v1h-3zM459 514h3v2h-3zM495 514h3v2h-3zM615 514h3v1h-3zM703 514h5v2h-5zM768 514h2v3h-2zM80 515h3v2h-3zM339 515h3v2h-3zM369 515h3v2h-3zM447 515h3v1h-3zM478 515h3v2h-3zM546 515h3v2h-3zM580 515h2v3h-2zM135 517h3v2h-3zM444 517h2v3h-2zM739 517h2v3h-2zM284 518h4v2h-4zM308 518h2v2h-2zM601 518h3v2h-3zM726 518h5v2h-5zM291 519h4v1h-4zM523 519h3v2h-3zM815 519h5v2h-5zM106 520h4v2h-4zM146 520h3v2h-3zM350 520h4v2h-4zM696 520h3v2h-3zM481 521h3v2h-3zM685 521h3v1h-3zM45 522h4v2h-4zM236 522h2v3h-2zM301 522h4v2h-4zM422 522h2v3h-2zM429 522h4v1h-4zM262 523h4v2h-4zM401 523h5v2h-5zM555 523h2v2h-2zM131 524h5v2h-5zM395 524h5v2h-5zM451 524h3v2h-3zM569 524h2v3h-2zM203 525h3v2h-3zM512 525h4v1h-4zM688 525h4v1h-4zM755 525h3v1h-3zM367 526h3v2h-3zM402 526h5v2h-5zM610 526h3v1h-3zM13 527h3v2h-3zM252 527h3v2h-3zM520 527h3v2h-3zM6 528h4v1h-4zM279 528h2v2h-2zM309 528h3v2h-3zM315 528h2v2h-2zM378 528h2v2h-2zM394 528h2v3h-2zM404 528h2v3h-2zM488 528h2v3h-2zM625 528h3v1h-3zM385 529h5v2h-5zM471 529h3v2h-3zM612 529h2v3h-2zM131 530h2v3h-2zM225 530h2v3h-2zM269 530h2v3h-2zM323 530h4v2h-4zM556 530h3v1h-3zM558 530h2v2h-2zM792 531h3v2h-3zM70 532h3v1h-3zM430 532h3v2h-3zM433 532h2v3h-2zM463 532h3v2h-3zM524 532h2v3h-2zM132 533h3v2h-3zM337 533h3v2h-3zM384 533h4v1h-4zM458 533h3v2h-3zM612 533h2v3h-2zM754 533h2v3h-2zM212 534h2v2h-2zM578 534h3v2h-3zM661 534h3v2h-3zM672 534h3v1h-3zM265 535h5v2h-5zM326 535h3v2h-3zM483 535h2v2h-2zM685 535h5v2h-5zM734 535h3v2h-3zM758 535h4v2h-4zM795 535h2v3h-2zM20 536h5v2h-5zM426 536h3v2h-3zM690 536h4v2h-4zM744 536h2v2h-2zM751 536h3v2h-3zM201 537h2v3h-2zM212 537h2v2h-2zM421 537h2v2h-2zM20 538h5v2h-5zM268 538h5v2h-5zM330 538h3v2h-3zM703 538h2v3h-2zM8 539h3v1h-3zM22 539h4v1h-4zM472 539h5v2h-5zM673 539h4v1h-4zM806 539h4v2h-4zM32 540h5v2h-5zM305 540h5v2h-5zM446 540h2v3h-2zM576 540h3v2h-3zM318 541h4v1h-4zM427 541h3v2h-3zM630 541h3v2h-3zM9 542h3v1h-3zM109 542h2v2h-2zM157 542h2v2h-2zM226 542h5v2h-5zM457 542h3v1h-3zM662 542h3v1h-3zM229 543h2v2h-2zM313 543h4v1h-4zM557 543h3v2h-3zM618 543h4v2h-4zM460 544h4v1h-4zM7 545h3v2h-3zM75 545h2v2h-2zM78 545h2v2h-2zM157 545h2v3h-2zM193 545h2v3h-2zM303 545h2v3h-2zM471 545h3v1h-3zM661 545h2v3h-2zM736 545h3v2h-3zM332 546h2v3h-2zM425 546h2v2h-2zM443 546h2v3h-2zM485 546h4v1h-4zM598 546h3v2h-3zM748 546h4v2h-4zM777 546h3v1h-3zM331 547h3v1h-3zM409 547h2v3h-2zM419 547h3v2h-3zM482 547h3v1h-3zM600 547h2v3h-2zM618 547h4v1h-4zM682 547h5v2h-5zM779 547h4v1h-4zM184 548h5v2h-5zM547 548h3v1h-3zM555 548h3v2h-3zM574 548h3v2h-3zM617 548h3v1h-3zM31 549h2v2h-2zM39 549h2v3h-2zM229 549h3v1h-3zM350 549h3v2h-3zM447 549h3v2h-3zM539 549h3v2h-3zM559 549h4v2h-4zM477 550h4v2h-4zM500 550h3v2h-3zM659 550h3v2h-3zM736 550h2v2h-2zM245 551h2v3h-2zM480 551h3v2h-3zM617 551h2v2h-2zM628 551h2v3h-2zM775 551h2v3h-2zM12 552h3v2h-3zM114 552h4v1h-4zM56 553h3v2h-3zM188 553h2v3h-2zM234 553h5v2h-5zM375 553h4v2h-4zM280 554h2v3h-2zM314 554h2v3h-2zM417 554h4v2h-4zM554 554h5v2h-5zM734 554h5v2h-5zM782 554h2v3h-2zM3 555h2v2h-2zM324 555h3v2h-3zM486 555h2v2h-2zM519 555h4v2h-4zM567 555h2v2h-2zM577 555h4v1h-4zM588 555h2v2h-2zM655 555h4v1h-4zM675 555h5v2h-5zM190 556h3v2h-3zM287 556h3v2h-3zM5 557h3v1h-3zM82 557h3v2h-3zM109 557h3v1h-3zM112 557h5v2h-5zM133 557h4v2h-4zM210 557h3v2h-3zM776 557h4v2h-4zM783 557h3v2h-3zM318 558h3v1h-3zM775 558h2v2h-2zM189 559h4v2h-4zM434 559h3v1h-3zM477 559h3v1h-3zM515 559h4v2h-4zM540 560h3v2h-3zM562 560h2v3h-2zM44 561h4v2h-4zM52 561h2v2h-2zM380 561h4v1h-4zM401 561h3v2h-3zM49 562h3v1h-3zM84 563h2v3h-2zM112 563h4v2h-4zM649 563h4v1h-4zM654 563h3v1h-3zM77 564h3v2h-3zM259 564h4v1h-4zM355 564h5v2h-5zM390 564h3v2h-3zM563 564h5v2h-5zM594 564h3v2h-3zM615 564h5v2h-5zM794 564h5v2h-5zM74 565h3v2h-3zM97 565h3v2h-3zM188 565h4v2h-4zM393 565h3v2h-3zM566 565h3v2h-3zM631 565h4v1h-4zM46 566h3v2h-3zM188 566h3v1h-3zM386 566h4v2h-4zM695 566h2v3h-2zM801 566h4v1h-4zM109 567h4v2h-4zM311 567h4v1h-4zM459 567h4v1h-4zM648 567h3v2h-3zM673 567h4v2h-4zM735 567h4v1h-4zM124 568h2v3h-2zM281 568h3v2h-3zM732 568h3v2h-3zM567 569h4v2h-4zM11 570h3v2h-3zM129 570h5v2h-5zM138 570h5v2h-5zM504 570h4v1h-4zM574 570h4v1h-4zM768 570h3v2h-3zM85 571h4v1h-4zM344 571h3v1h-3zM536 571h3v1h-3zM548 571h5v2h-5zM635 571h4v1h-4zM47 572h4v2h-4zM319 572h4v2h-4zM377 572h3v2h-3zM751 572h2v2h-2zM140 573h3v2h-3zM525 573h4v1h-4zM586 573h2v2h-2zM737 573h4v2h-4zM243 574h2v2h-2zM403 574h5v2h-5zM567 575h2v2h-2zM617 575h4v1h-4zM650 575h2v2h-2zM667 575h3v1h-3zM773 575h4v2h-4zM27 576h2v3h-2zM113 576h5v2h-5zM178 576h2v2h-2zM327 576h4v1h-4zM601 576h3v2h-3zM168 577h3v2h-3zM566 577h5v2h-5zM390 578h2v3h-2zM471 578h5v2h-5zM36 579h5v2h-5zM171 579h3v2h-3zM238 579h3v1h-3zM567 579h4v2h-4zM268 580h3v1h-3zM294 580h3v1h-3zM298 580h2v2h-2zM471 580h3v2h-3zM565 580h2v3h-2zM750 580h3v2h-3zM205 581h2v2h-2zM764 581h3v1h-3zM108 582h2v2h-2zM220 582h3v2h-3zM264 582h5v2h-5zM295 582h2v3h-2zM343 582h5v2h-5zM469 582h4v1h-4zM706 582h3v2h-3zM191 583h3v1h-3zM240 583h2v2h-2zM322 583h3v1h-3zM529 583h4v1h-4zM801 583h4v2h-4zM44 584h3v2h-3zM68 584h3v2h-3zM119 584h3v2h-3zM198 585h3v2h-3zM294 585h3v2h-3zM327 585h3v2h-3zM610 585h2v2h-2zM264 586h2v2h-2zM649 586h4v1h-4zM796 586h2v3h-2zM14 587h5v2h-5zM95 587h2v3h-2zM145 587h5v2h-5zM517 587h5v2h-5zM575 587h2v3h-2zM727 587h3v2h-3zM737 587h3v2h-3zM65 588h3v1h-3zM348 588h2v3h-2zM476 588h4v2h-4zM534 588h4v2h-4zM638 588h2v2h-2zM653 588h3v1h-3zM399 589h3v1h-3zM765 589h4v1h-4zM232 590h3v1h-3zM324 590h3v2h-3zM768 590h2v3h-2zM561 591h2v2h-2zM654 591h3v2h-3zM743 591h4v2h-4zM405 592h2v3h-2zM414 592h3v2h-3zM425 592h5v2h-5zM772 592h3v2h-3zM780 592h4v1h-4zM177 593h4v1h-4zM614 593h3v2h-3zM725 593h2v2h-2zM57 594h3v2h-3zM208 594h2v3h-2zM209 594h2v3h-2zM396 594h2v3h-2zM463 594h4v1h-4zM486 594h5v2h-5zM538 594h5v2h-5zM673 594h3v2h-3zM733 594h5v2h-5zM756 594h5v2h-5zM244 595h3v2h-3zM297 595h4v2h-4zM326 595h4v2h-4zM408 595h4v1h-4zM542 595h3v2h-3zM643 595h3v1h-3zM734 595h3v2h-3zM60 596h2v2h-2zM466 596h3v2h-3zM543 596h3v2h-3zM552 596h4v2h-4zM228 597h3v1h-3zM278 597h4v1h-4zM346 597h3v2h-3zM478 597h4v2h-4zM600 597h4v1h-4zM183 598h2v2h-2zM287 598h2v3h-2zM566 598h4v2h-4zM741 598h3v1h-3zM327 599h3v1h-3zM479 599h3v1h-3zM605 599h3v2h-3zM76 600h3v1h-3zM435 600h3v2h-3zM509 600h5v2h-5zM621 600h2v3h-2zM31 601h4v1h-4zM195 601h5v2h-5zM243 601h4v2h-4zM282 601h2v3h-2zM320 601h5v2h-5zM648 601h3v1h-3zM7 602h2v2h-2zM48 602h3v2h-3zM72 602h2v2h-2zM525 602h5v2h-5zM813 602h2v3h-2zM13 603h3v1h-3zM290 603h2v3h-2zM376 603h2v3h-2zM813 603h3v2h-3zM317 604h3v1h-3zM558 604h4v1h-4zM83 605h5v2h-5zM358 605h3v2h-3zM616 605h3v1h-3zM446 606h2v2h-2zM680 606h4v2h-4zM692 606h4v2h-4zM616 607h4v1h-4zM697 607h2v3h-2zM807 607h3v2h-3zM370 608h2v2h-2zM373 608h2v3h-2zM416 608h2v2h-2zM466 608h5v2h-5zM779 608h3v1h-3zM71 609h3v1h-3zM149 609h3v2h-3zM326 609h2v2h-2zM679 609h2v2h-2zM217 610h2v2h-2zM584 610h2v3h-2zM476 611h4v2h-4zM499 611h4v2h-4zM506 611h3v2h-3zM731 611h3v2h-3zM76 612h4v1h-4zM356 612h3v1h-3zM376 612h2v2h-2zM399 612h4v2h-4zM687 612h3v2h-3zM159 613h2v2h-2zM271 613h2v2h-2zM315 613h3v2h-3zM402 613h3v1h-3zM420 613h3v2h-3zM537 613h4v1h-4zM648 613h3v2h-3zM129 614h3v2h-3zM153 614h3v2h-3zM284 614h3v2h-3zM423 614h3v1h-3zM222 615h3v2h-3zM428 615h5v2h-5zM802 615h4v2h-4zM93 616h3v2h-3zM101 616h2v3h-2zM223 616h3v2h-3zM249 616h3v2h-3zM335 616h2v2h-2zM590 616h2v2h-2zM739 616h2v3h-2zM67 617h5v2h-5zM112 617h5v2h-5zM286 617h3v2h-3zM539 617h4v1h-4zM629 617h4v2h-4zM682 617h5v2h-5zM64 618h5v2h-5zM341 618h3v2h-3zM416 618h2v3h-2zM756 618h4v2h-4zM1 619h3v2h-3zM121 619h4v2h-4zM263 619h2v2h-2zM322 619h3v1h-3zM328 619h3v2h-3zM21 620h3v2h-3zM196 620h5v2h-5zM224 620h5v2h-5zM305 620h3v1h-3zM339 620h3v1h-3zM382 620h4v2h-4zM612 620h2v3h-2zM705 620h3v2h-3zM780 620h2v3h-2zM254 621h3v1h-3zM375 621h2v2h-2zM713 621h4v1h-4zM743 621h3v1h-3zM5 622h2v2h-2zM328 622h4v1h-4zM421 622h2v2h-2zM472 622h4v2h-4zM586 622h2v3h-2zM613 622h2v2h-2zM782 622h5v2h-5zM179 623h3v2h-3zM213 623h2v2h-2zM248 623h2v2h-2zM506 623h4v1h-4zM554 623h2v2h-2zM748 623h4v2h-4zM607 624h4v1h-4zM730 624h4v2h-4zM337 625h3v2h-3zM394 625h3v1h-3zM672 625h4v2h-4zM97 626h5v2h-5zM198 626h4v2h-4zM379 626h3v2h-3zM471 626h5v2h-5zM700 626h3v2h-3zM120 627h5v2h-5zM602 627h2v2h-2zM680 627h3v2h-3zM727 627h5v2h-5zM808 627h2v3h-2zM520 628h3v2h-3zM670 628h5v2h-5zM295 629h2v3h-2zM334 629h4v1h-4zM505 629h3v2h-3zM516 629h5v2h-5zM574 629h3v2h-3zM666 629h5v2h-5zM323 630h3v2h-3zM385 630h4v1h-4zM56 631h3v2h-3zM79 631h4v1h-4zM272 631h3v2h-3zM600 631h4v1h-4zM679 631h4v1h-4zM761 631h4v2h-4zM170 632h4v1h-4zM201 632h4v2h-4zM228 632h4v1h-4zM336 632h5v2h-5zM402 632h4v1h-4zM450 632h4v1h-4zM577 632h3v1h-3zM615 632h2v2h-2zM26 633h3v1h-3zM53 633h3v2h-3zM125 633h2v2h-2zM238 633h4v1h-4zM306 633h3v2h-3zM606 633h4v2h-4zM428 634h5v2h-5zM459 634h3v2h-3zM620 634h3v2h-3zM738 634h3v2h-3zM119 635h4v1h-4zM688 635h5v2h-5zM392 636h3v2h-3zM680 636h2v3h-2zM265 637h3v1h-3zM335 637h4v1h-4zM610 637h2v3h-2zM61 638h2v2h-2zM185 638h3v2h-3zM316 638h3v2h-3zM460 638h3v1h-3zM101 639h4v2h-4zM114 639h3v2h-3zM178 639h2v3h-2zM56 640h4v1h-4zM202 640h2v2h-2zM383 640h5v2h-5zM498 640h2v3h-2zM531 640h3v2h-3zM723 640h4v1h-4zM746 640h4v1h-4zM812 640h4v1h-4zM21 641h2v3h-2zM67 641h5v2h-5zM291 641h2v3h-2zM521 641h4v2h-4zM781 641h3v1h-3zM444 642h3v1h-3zM483 642h3v2h-3zM509 642h5v2h-5zM594 642h3v2h-3zM663 642h2v3h-2zM222 643h2v3h-2zM222 643h3v1h-3zM441 643h3v2h-3zM31 644h3v2h-3zM79 644h4v2h-4zM193 644h3v2h-3zM767 644h2v3h-2zM34 645h4v1h-4zM342 645h4v2h-4zM453 645h2v2h-2zM746 645h3v2h-3zM790 645h4v2h-4zM264 646h4v1h-4zM458 646h3v2h-3zM515 646h3v2h-3zM687 646h2v2h-2zM40 647h3v2h-3zM307 647h4v2h-4zM459 647h3v1h-3zM568 647h5v2h-5zM732 647h2v2h-2zM27 648h5v2h-5zM249 648h2v2h-2zM260 648h3v2h-3zM269 648h4v1h-4zM316 648h4v1h-4zM750 648h4v1h-4zM807 648h3v2h-3zM18 649h2v3h-2zM445 649h4v1h-4zM482 649h3v2h-3zM578 649h5v2h-5zM333 650h5v2h-5zM382 650h2v2h-2zM431 650h3v1h-3zM757 650h4v2h-4zM758 650h5v2h-5zM313 651h5v2h-5zM442 651h3v2h-3zM565 651h3v1h-3zM705 651h4v2h-4zM22 652h4v2h-4zM34 652h2v3h-2zM202 652h5v2h-5zM522 652h5v2h-5zM540 652h5v2h-5zM597 652h2v2h-2zM805 652h3v2h-3zM216 653h3v1h-3zM222 653h4v2h-4zM626 653h4v1h-4zM205 654h3v2h-3zM295 654h4v1h-4zM9 655h3v1h-3zM420 655h2v3h-2zM526 655h4v1h-4zM604 655h5v2h-5zM28 656h3v2h-3zM85 656h3v2h-3zM199 656h5v2h-5zM428 656h5v2h-5zM551 656h5v2h-5zM613 656h5v2h-5zM626 656h3v1h-3zM297 657h2v2h-2zM307 657h5v2h-5zM450 657h3v1h-3zM607 657h2v3h-2zM164 658h4v2h-4zM510 658h2v2h-2zM681 658h5v2h-5zM58 659h3v1h-3zM165 659h4v1h-4zM272 659h3v1h-3zM118 660h2v3h-2zM154 660h4v2h-4zM312 660h2v2h-2zM369 660h2v3h-2zM778 660h3v2h-3zM10 661h4v2h-4zM136 661h2v3h-2zM163 661h3v2h-3zM293 661h2v3h-2zM351 661h3v2h-3zM478 661h4v2h-4zM341 662h2v2h-2zM510 662h2v3h-2zM740 662h3v2h-3zM773 662h3v2h-3zM22 663h4v1h-4zM199 663h2v3h-2zM472 663h2v3h-2zM632 663h3v2h-3zM813 663h3v1h-3zM813 663h4v1h-4zM319 665h3v1h-3zM556 665h3v2h-3zM570 665h5v2h-5zM816 665h5v2h-5zM35 666h4v1h-4zM483 666h4v1h-4zM764 666h3v2h-3zM130 667h2v3h-2zM165 667h4v2h-4zM811 667h3v2h-3zM41 668h2v3h-2zM98 668h4v2h-4zM206 668h3v1h-3zM347 668h4v2h-4zM184 669h3v2h-3zM240 669h3v2h-3zM421 669h4v1h-4zM519 669h3v2h-3zM119 670h4v2h-4zM373 670h2v3h-2zM119 671h3v2h-3zM266 671h5v2h-5zM327 671h4v2h-4zM692 671h2v3h-2zM703 671h4v2h-4zM749 671h3v1h-3zM20 672h5v2h-5zM35 672h2v3h-2zM620 672h2v2h-2zM136 673h4v1h-4zM241 673h5v2h-5zM385 673h4v2h-4zM763 673h4v2h-4zM55 674h3v1h-3zM122 674h2v2h-2zM563 674h2v2h-2zM66 675h4v1h-4zM123 675h4v2h-4zM146 675h3v2h-3zM483 675h2v3h-2zM501 675h3v2h-3zM237 676h2v3h-2zM777 676h4v2h-4zM783 676h2v2h-2zM69 677h3v1h-3zM176 677h2v3h-2zM230 677h3v2h-3zM508 677h4v1h-4zM731 677h3v2h-3zM19 678h3v2h-3zM342 678h3v1h-3zM443 678h3v1h-3zM723 678h4v1h-4zM744 678h5v2h-5zM758 678h4v1h-4zM60 679h2v3h-2zM162 679h5v2h-5zM480 679h3v1h-3zM214 680h2v3h-2zM254 680h3v2h-3zM259 680h3v1h-3zM421 680h3v1h-3zM470 680h4v2h-4zM513 680h2v2h-2zM537 680h2v3h-2zM550 680h5v2h-5zM649 680h4v2h-4zM700 680h4v1h-4zM1 681h2v2h-2zM156 681h3v2h-3zM471 681h3v2h-3zM536 681h2v3h-2zM760 681h4v1h-4zM35 682h2v3h-2zM125 682h2v3h-2zM246 682h3v2h-3zM352 682h3v2h-3zM384 682h4v2h-4zM460 682h2v2h-2zM598 682h4v1h-4zM602 682h3v2h-3zM223 683h4v1h-4zM303 683h3v2h-3zM672 683h2v2h-2zM751 683h3v1h-3zM257 684h2v3h-2zM549 684h5v2h-5zM590 684h4v2h-4zM712 684h2v3h-2zM1 685h2v2h-2zM157 685h3v2h-3zM313 685h2v2h-2zM373 685h3v2h-3zM490 685h4v2h-4zM776 685h2v3h-2zM6 686h5v2h-5zM42 686h2v3h-2zM372 686h3v2h-3zM478 686h3v1h-3zM750 686h2v2h-2zM36 687h3v1h-3zM456 687h4v2h-4zM461 687h3v2h-3zM601 687h2v2h-2zM641 687h3v2h-3zM781 687h4v1h-4zM807 687h3v1h-3zM370 688h3v2h-3zM415 688h5v2h-5zM516 688h3v2h-3zM791 688h4v2h-4zM294 689h4v1h-4zM326 689h3v2h-3zM342 689h2v2h-2zM423 689h3v2h-3zM468 689h5v2h-5zM578 689h2v3h-2zM168 690h3v2h-3zM270 690h3v2h-3zM307 690h2v3h-2zM450 690h3v2h-3zM541 690h3v2h-3zM116 691h2v2h-2zM160 691h4v2h-4zM237 691h5v2h-5zM401 692h3v2h-3zM579 692h5v2h-5zM643 692h3v1h-3zM726 692h2v3h-2zM216 693h2v2h-2zM252 693h4v1h-4zM317 693h3v1h-3zM372 693h3v2h-3zM485 693h2v3h-2zM670 693h5v2h-5zM49 694h5v2h-5zM150 694h2v3h-2zM150 694h4v2h-4zM159 694h2v2h-2zM372 694h3v2h-3zM566 694h4v1h-4zM583 694h3v1h-3zM671 694h2v2h-2zM41 695h2v2h-2zM102 695h5v2h-5zM321 695h4v1h-4zM463 695h3v2h-3zM471 695h2v3h-2zM706 695h4v2h-4zM28 696h3v1h-3zM55 696h2v2h-2zM203 696h3v2h-3zM385 696h3v2h-3zM691 696h2v3h-2zM116 697h3v2h-3zM285 697h3v1h-3zM493 697h3v1h-3zM64 698h4v2h-4zM136 698h3v1h-3zM186 698h4v2h-4zM265 698h3v2h-3zM280 698h2v2h-2zM427 698h3v1h-3zM700 698h3v1h-3zM37 699h4v2h-4zM98 699h3v1h-3zM635 699h5v2h-5zM768 699h5v2h-5zM787 699h3v2h-3zM404 700h3v2h-3zM59 701h3v2h-3zM220 701h3v1h-3zM238 701h2v3h-2zM327 701h4v1h-4zM570 701h3v1h-3zM217 702h4v2h-4zM322 702h3v1h-3zM347 702h4v1h-4zM407 702h2v2h-2zM561 702h2v2h-2zM601 702h3v2h-3zM637 702h5v2h-5zM700 702h4v2h-4zM703 702h3v1h-3zM160 703h3v2h-3zM228 703h3v2h-3zM308 703h3v2h-3zM359 703h3v2h-3zM41 704h5v2h-5zM74 704h4v2h-4zM94 704h3v1h-3zM116 704h4v1h-4zM604 704h3v1h-3zM164 705h5v2h-5zM217 705h3v2h-3zM371 705h2v2h-2zM793 705h3v2h-3zM248 706h4v2h-4zM341 706h5v2h-5zM577 706h3v2h-3zM653 706h2v2h-2zM689 706h4v2h-4zM732 706h2v2h-2zM27 707h4v2h-4zM196 707h3v1h-3zM234 707h2v3h-2zM349 707h2v3h-2zM416 707h3v2h-3zM666 707h5v2h-5zM24 708h3v2h-3zM34 708h2v3h-2zM97 708h5v2h-5zM383 708h3v2h-3zM463 708h4v1h-4zM663 708h2v3h-2zM301 709h3v2h-3zM534 709h5v2h-5zM608 709h3v1h-3zM617 709h4v2h-4zM740 709h4v1h-4zM16 710h2v2h-2zM729 710h3v2h-3zM373 711h2v2h-2zM397 711h4v2h-4zM462 711h4v1h-4zM579 711h2v3h-2zM745 711h4v2h-4zM773 711h4v2h-4zM26 712h5v2h-5zM267 712h3v2h-3zM417 712h5v2h-5zM436 712h3v2h-3zM577 712h3v2h-3zM615 712h3v1h-3zM111 713h2v3h-2zM314 713h4v2h-4zM632 713h2v3h-2zM781 713h4v1h-4zM250 714h2v3h-2zM289 714h3v2h-3zM314 714h4v2h-4zM367 714h3v2h-3zM574 714h2v2h-2zM686 714h3v2h-3zM2 715h3v1h-3zM92 715h2v2h-2zM139 715h4v2h-4zM262 715h3v1h-3zM320 715h3v2h-3zM489 715h4v2h-4zM534 715h5v2h-5zM573 715h2v2h-2zM721 715h3v1h-3zM776 715h4v1h-4zM58 716h3v2h-3zM269 716h3v2h-3zM475 716h3v2h-3zM479 716h2v3h-2zM580 716h2v3h-2zM81 718h3v2h-3zM370 718h4v2h-4zM779 718h4v2h-4zM250 719h4v1h-4zM422 719h2v2h-2zM518 719h3v2h-3zM546 719h5v2h-5zM553 719h4v1h-4zM211 720h4v1h-4zM223 720h5v2h-5zM327 720h5v2h-5zM814 720h2v3h-2zM145 721h3v1h-3zM179 721h3v2h-3zM235 721h5v2h-5zM241 721h2v3h-2zM269 721h2v3h-2zM593 721h4v1h-4zM496 722h2v2h-2zM616 722h2v2h-2zM667 722h4v2h-4zM52 723h4v1h-4zM110 723h3v2h-3zM342 723h3v1h-3zM507 723h2v3h-2zM639 723h3v2h-3zM751 723h4v1h-4zM52 724h5v2h-5zM77 724h3v2h-3zM159 724h3v2h-3zM380 724h3v2h-3zM438 724h3v2h-3zM221 725h3v1h-3zM486 725h2v2h-2zM490 725h3v2h-3zM505 725h4v2h-4zM534 725h3v2h-3zM204 726h3v2h-3zM265 726h4v2h-4zM530 726h4v2h-4zM667 726h3v1h-3zM712 726h2v3h-2zM113 727h3v1h-3zM180 727h2v3h-2zM260 727h3v2h-3zM421 727h3v2h-3zM486 727h5v2h-5zM136 728h3v2h-3zM277 728h5v2h-5zM348 728h5v2h-5zM58 729h3v1h-3zM89 729h4v1h-4zM319 729h3v2h-3zM407 729h4v1h-4zM414 729h5v2h-5zM792 729h2v3h-2zM525 730h2v2h-2zM545 730h4v2h-4zM658 730h2v2h-2zM662 730h2v3h-2zM134 731h3v1h-3zM548 731h2v2h-2zM84 732h3v1h-3zM107 732h2v2h-2zM125 732h3v2h-3zM180 732h4v2h-4zM706 732h3v2h-3zM792 732h3v2h-3zM300 733h5v2h-5zM690 733h5v2h-5zM755 733h4v1h-4zM812 733h2v2h-2zM55 734h2v3h-2zM80 734h4v2h-4zM157 734h4v1h-4zM720 734h2v2h-2zM49 735h3v2h-3zM322 735h2v2h-2zM382 735h2v3h-2zM414 735h5v2h-5zM675 735h3v2h-3zM73 736h5v2h-5zM388 736h2v3h-2zM564 736h5v2h-5zM784 736h4v1h-4zM17 737h4v1h-4zM115 737h5v2h-5zM418 737h4v2h-4zM509 737h5v2h-5zM709 737h2v3h-2zM719 737h3v1h-3zM61 738h2v3h-2zM140 738h3v1h-3zM157 738h3v2h-3zM246 738h2v2h-2zM273 738h4v1h-4zM421 738h3v1h-3zM480 738h2v2h-2zM569 738h3v2h-3zM604 738h2v2h-2zM781 738h4v2h-4zM143 739h2v2h-2zM243 739h5v2h-5zM247 739h2v2h-2zM461 739h4v1h-4zM754 739h3v2h-3zM788 739h5v2h-5zM16 740h3v2h-3zM258 740h5v2h-5zM422 740h4v1h-4zM665 740h5v2h-5zM670 740h3v2h-3zM773 740h3v2h-3zM136 741h2v2h-2zM146 741h3v1h-3zM333 741h5v2h-5zM427 741h2v3h-2zM129 742h4v2h-4zM144 742h5v2h-5zM193 742h3v2h-3zM476 742h4v1h-4zM675 742h4v1h-4zM684 742h2v3h-2zM17 743h5v2h-5zM226 743h3v2h-3zM256 743h5v2h-5zM300 743h4v2h-4zM796 743h5v2h-5zM205 744h5v2h-5zM404 744h5v2h-5zM631 744h4v1h-4zM633 744h3v2h-3zM81 745h2v3h-2zM80 746h2v3h-2zM141 746h2v2h-2zM232 746h5v2h-5zM363 746h4v1h-4zM631 746h2v2h-2zM200 747h4v1h-4zM324 747h3v1h-3zM419 747h4v2h-4zM749 747h4v2h-4zM28 748h5v2h-5zM109 749h5v2h-5zM138 749h3v2h-3zM147 749h4v1h-4zM155 749h3v1h-3zM660 749h3v1h-3zM796 749h4v2h-4zM143 750h3v2h-3zM260 750h4v2h-4zM291 750h2v3h-2zM362 750h5v2h-5zM453 750h2v2h-2zM554 750h4v2h-4zM639 750h3v2h-3zM702 750h3v2h-3zM756 750h2v3h-2zM53 751h3v2h-3zM338 751h4v1h-4zM58 752h3v2h-3zM245 752h4v2h-4zM592 753h4v2h-4zM806 753h4v2h-4zM4 754h3v2h-3zM102 754h2v3h-2zM419 754h3v1h-3zM198 755h2v3h-2zM474 755h5v2h-5zM523 755h2v2h-2zM37 756h2v2h-2zM88 756h3v2h-3zM94 756h2v3h-2zM305 756h2v3h-2zM479 756h4v1h-4zM669 756h4v2h-4zM256 757h4v2h-4zM505 757h3v2h-3zM506 757h2v2h-2zM596 757h3v1h-3zM755 757h4v2h-4zM564 758h2v2h-2zM566 758h4v2h-4zM805 758h3v2h-3zM250 759h5v2h-5zM447 759h4v1h-4zM27 760h4v1h-4zM64 760h4v2h-4zM327 760h4v1h-4zM457 760h4v1h-4zM463 760h3v1h-3zM531 760h3v2h-3zM165 761h2v2h-2zM219 761h3v2h-3zM611 761h3v1h-3zM633 761h4v1h-4zM640 761h5v2h-5zM754 761h3v2h-3zM137 762h2v3h-2zM531 762h4v2h-4zM237 763h2v2h-2zM296 763h2v3h-2zM425 763h5v2h-5zM582 763h3v2h-3zM24 764h3v2h-3zM286 764h3v2h-3zM623 765h2v2h-2zM613 766h3v2h-3zM793 766h3v2h-3z"/><path fill="#08084e" d="M774 17h2v3h-2zM158 19h3v2h-3zM495 19h2v3h-2zM377 21h4v1h-4zM701 21h4v1h-4zM331 22h2v2h-2zM468 22h3v1h-3zM509 22h3v1h-3zM202 23h4v2h-4zM250 23h4v1h-4zM321 23h2v2h-2zM530 23h4v1h-4zM713 23h4v2h-4zM814 23h3v1h-3zM305 24h3v1h-3zM521 24h2v2h-2zM543 24h2v2h-2zM602 24h3v2h-3zM666 24h5v2h-5zM667 24h2v3h-2zM199 25h2v3h-2zM231 25h3v2h-3zM379 25h3v1h-3zM426 26h2v3h-2zM84 27h3v2h-3zM134 27h3v1h-3zM436 27h4v1h-4zM463 27h2v2h-2zM697 27h4v2h-4zM154 28h2v2h-2zM260 28h2v3h-2zM652 28h4v1h-4zM750 28h3v2h-3zM800 28h4v2h-4zM95 29h4v2h-4zM119 29h4v1h-4zM401 29h3v1h-3zM469 29h3v2h-3zM665 29h2v3h-2zM12 30h3v1h-3zM290 30h2v3h-2zM401 30h2v2h-2zM546 30h3v2h-3zM206 31h2v3h-2zM501 31h3v2h-3zM6 32h4v2h-4zM15 32h4v1h-4zM92 32h5v2h-5zM107 32h3v2h-3zM203 32h3v2h-3zM514 32h5v2h-5zM641 32h3v2h-3zM698 32h2v2h-2zM31 33h3v2h-3zM199 33h5v2h-5zM252 33h5v2h-5zM539 33h3v1h-3zM655 33h2v3h-2zM275 34h4v1h-4zM411 34h3v1h-3zM515 34h2v2h-2zM641 34h3v2h-3zM1 35h2v2h-2zM88 35h3v1h-3zM137 35h2v3h-2zM165 35h3v1h-3zM258 35h3v2h-3zM480 35h4v1h-4zM617 35h2v2h-2zM733 35h4v1h-4zM528 36h2v2h-2zM642 36h2v2h-2zM664 37h4v1h-4zM116 38h4v2h-4zM262 38h4v1h-4zM797 38h3v2h-3zM394 39h5v2h-5zM515 39h3v1h-3zM518 39h4v2h-4zM751 39h5v2h-5zM754 39h3v2h-3zM261 40h5v2h-5zM368 40h4v2h-4zM501 40h2v3h-2zM559 40h5v2h-5zM606 40h4v2h-4zM647 40h4v2h-4zM684 40h4v1h-4zM791 40h3v1h-3zM138 41h2v2h-2zM585 41h2v3h-2zM86 42h3v2h-3zM411 42h3v2h-3zM422 42h5v2h-5zM477 42h3v2h-3zM516 42h2v2h-2zM544 42h2v2h-2zM712 42h4v1h-4zM181 43h4v1h-4zM449 43h2v2h-2zM512 43h3v1h-3zM782 43h3v1h-3zM800 43h5v2h-5zM220 44h2v2h-2zM612 44h2v3h-2zM692 44h4v2h-4zM750 44h2v2h-2zM358 45h5v2h-5zM621 45h3v2h-3zM804 45h2v3h-2zM242 46h3v2h-3zM281 46h4v1h-4zM381 46h3v2h-3zM551 46h3v2h-3zM742 46h4v2h-4zM136 47h2v3h-2zM217 47h5v2h-5zM266 47h3v2h-3zM323 47h4v1h-4zM475 47h3v2h-3zM1 48h2v2h-2zM218 48h4v1h-4zM201 49h4v2h-4zM225 49h4v2h-4zM592 49h2v3h-2zM141 50h2v3h-2zM343 50h2v2h-2zM554 50h3v2h-3zM272 51h2v3h-2zM105 52h4v2h-4zM161 52h4v1h-4zM115 53h3v2h-3zM124 54h4v2h-4zM228 54h2v2h-2zM501 54h2v2h-2zM589 54h4v1h-4zM185 55h4v1h-4zM227 55h3v2h-3zM482 55h3v2h-3zM56 56h3v2h-3zM189 56h3v1h-3zM467 56h4v2h-4zM703 56h3v1h-3zM711 56h5v2h-5zM743 56h4v1h-4zM217 57h5v2h-5zM683 58h4v1h-4zM141 59h3v2h-3zM44 60h3v1h-3zM143 60h3v1h-3zM210 60h2v3h-2zM531 60h3v2h-3zM196 61h2v2h-2zM298 61h5v2h-5zM498 61h2v3h-2zM712 61h2v3h-2zM718 61h5v2h-5zM793 61h3v1h-3zM192 63h3v2h-3zM495 63h5v2h-5zM578 63h2v3h-2zM601 63h3v1h-3zM401 64h2v3h-2zM493 64h3v1h-3zM785 64h2v2h-2zM77 65h2v2h-2zM320 65h4v2h-4zM478 65h3v2h-3zM775 65h5v2h-5zM151 66h2v2h-2zM189 66h2v3h-2zM272 66h5v2h-5zM275 66h4v2h-4zM347 66h3v2h-3zM397 66h3v2h-3zM733 67h2v3h-2zM228 68h3v2h-3zM444 68h3v2h-3zM454 68h2v2h-2zM643 68h3v1h-3zM97 69h4v2h-4zM183 70h2v3h-2zM185 70h2v3h-2zM425 70h3v1h-3zM590 70h4v1h-4zM639 70h4v1h-4zM116 71h4v1h-4zM157 71h3v2h-3zM291 71h2v3h-2zM398 71h3v2h-3zM434 71h2v3h-2zM450 72h2v2h-2zM520 72h2v2h-2zM617 72h2v2h-2zM722 72h4v1h-4zM772 72h4v1h-4zM287 73h5v2h-5zM536 73h3v1h-3zM583 73h3v2h-3zM647 73h3v2h-3zM721 73h5v2h-5zM738 73h2v3h-2zM93 74h3v1h-3zM169 74h3v2h-3zM241 74h5v2h-5zM273 74h5v2h-5zM422 74h2v2h-2zM797 74h3v2h-3zM86 75h3v1h-3zM108 75h3v1h-3zM213 75h4v1h-4zM391 75h5v2h-5zM717 75h5v2h-5zM236 76h5v2h-5zM393 76h2v2h-2zM751 76h4v1h-4zM22 77h3v2h-3zM214 77h3v1h-3zM798 77h4v2h-4zM123 78h4v1h-4zM148 78h2v2h-2zM349 78h4v2h-4zM577 78h5v2h-5zM763 78h2v2h-2zM59 79h2v2h-2zM534 79h4v1h-4zM685 79h4v2h-4zM53 80h4v2h-4zM547 80h4v1h-4zM26 81h2v2h-2zM430 81h2v2h-2zM460 81h3v2h-3zM603 81h2v3h-2zM789 81h5v2h-5zM114 82h3v2h-3zM147 82h2v2h-2zM375 82h5v2h-5zM698 82h3v1h-3zM770 82h2v3h-2zM73 83h3v2h-3zM180 83h5v2h-5zM219 83h4v1h-4zM144 84h5v2h-5zM197 84h4v2h-4zM635 84h3v2h-3zM423 85h2v2h-2zM564 85h2v3h-2zM142 86h4v1h-4zM209 86h3v2h-3zM629 86h3v2h-3zM713 86h4v2h-4zM779 86h3v2h-3zM17 87h4v2h-4zM355 87h2v3h-2zM374 87h5v2h-5zM543 87h2v2h-2zM671 88h3v2h-3zM14 89h4v1h-4zM206 89h3v2h-3zM393 89h2v3h-2zM415 89h4v1h-4zM84 90h3v2h-3zM214 90h4v1h-4zM284 90h3v2h-3zM521 90h3v1h-3zM615 90h5v2h-5zM85 91h3v2h-3zM223 91h3v1h-3zM251 91h4v2h-4zM15 92h2v2h-2zM460 92h5v2h-5zM484 92h3v1h-3zM13 93h3v2h-3zM170 93h4v2h-4zM214 93h2v2h-2zM538 93h2v2h-2zM702 93h3v1h-3zM532 94h5v2h-5zM537 94h3v2h-3zM607 94h3v2h-3zM147 96h5v2h-5zM797 96h3v2h-3zM121 97h5v2h-5zM155 97h4v1h-4zM302 97h3v1h-3zM492 97h3v2h-3zM664 97h4v1h-4zM687 97h3v1h-3zM738 97h3v2h-3zM675 98h4v2h-4zM680 98h3v1h-3zM813 98h4v2h-4zM651 99h4v2h-4zM812 99h2v3h-2zM149 100h4v1h-4zM210 100h4v1h-4zM281 101h3v2h-3zM632 101h4v1h-4zM685 101h3v2h-3zM805 101h2v3h-2zM13 102h2v3h-2zM56 102h4v2h-4zM131 102h3v2h-3zM390 102h2v2h-2zM466 102h4v2h-4zM608 102h3v2h-3zM708 102h4v2h-4zM768 102h3v1h-3zM290 103h2v3h-2zM469 103h3v1h-3zM707 103h4v2h-4zM761 103h3v1h-3zM189 104h3v1h-3zM420 104h4v1h-4zM480 104h5v2h-5zM695 104h5v2h-5zM755 104h5v2h-5zM762 104h3v2h-3zM9 105h3v2h-3zM202 105h5v2h-5zM267 105h2v3h-2zM331 105h3v2h-3zM376 105h3v1h-3zM404 105h3v2h-3zM726 105h2v2h-2zM212 106h3v1h-3zM392 106h3v2h-3zM436 106h2v2h-2zM516 106h3v2h-3zM553 106h2v3h-2zM643 106h3v2h-3zM652 106h3v2h-3zM753 106h4v1h-4zM756 107h3v2h-3zM177 108h2v2h-2zM261 108h3v1h-3zM394 108h2v3h-2zM589 108h4v1h-4zM600 108h2v3h-2zM690 108h3v2h-3zM694 108h3v1h-3zM741 108h3v2h-3zM64 109h4v2h-4zM300 109h4v1h-4zM623 109h2v3h-2zM118 110h4v2h-4zM135 110h3v2h-3zM204 110h5v2h-5zM346 110h5v2h-5zM680 110h2v2h-2zM731 110h4v1h-4zM624 111h3v1h-3zM759 111h4v1h-4zM432 112h3v1h-3zM665 112h4v1h-4zM171 113h5v2h-5zM231 113h2v2h-2zM250 113h3v2h-3zM283 113h3v2h-3zM359 113h3v2h-3zM599 113h3v1h-3zM714 113h3v2h-3zM807 113h3v2h-3zM389 114h2v2h-2zM489 114h4v2h-4zM530 114h5v2h-5zM784 114h3v1h-3zM704 115h2v2h-2zM381 116h4v2h-4zM28 117h3v2h-3zM106 117h3v1h-3zM217 117h5v2h-5zM219 117h4v2h-4zM330 117h5v2h-5zM632 117h5v2h-5zM51 118h2v3h-2zM57 118h3v2h-3zM198 118h5v2h-5zM375 118h5v2h-5zM607 118h3v2h-3zM688 118h5v2h-5zM114 119h2v2h-2zM170 119h5v2h-5zM189 119h4v2h-4zM252 119h3v2h-3zM585 119h4v1h-4zM633 119h3v2h-3zM654 119h3v2h-3zM524 120h2v3h-2zM622 120h2v2h-2zM147 121h4v1h-4zM208 121h5v2h-5zM611 121h3v2h-3zM713 121h4v1h-4zM802 121h3v2h-3zM24 122h2v2h-2zM302 122h2v2h-2zM700 123h2v3h-2zM785 123h4v1h-4zM236 124h5v2h-5zM550 124h3v1h-3zM561 124h4v1h-4zM715 124h3v2h-3zM2 125h5v2h-5zM31 125h2v3h-2zM293 125h4v1h-4zM311 125h2v2h-2zM7 126h5v2h-5zM114 126h3v1h-3zM361 126h2v3h-2zM400 126h2v3h-2zM503 126h2v3h-2zM542 126h2v3h-2zM337 127h5v2h-5zM684 127h3v2h-3zM200 128h3v2h-3zM373 128h4v2h-4zM412 128h2v3h-2zM527 128h3v1h-3zM201 129h5v2h-5zM599 129h2v3h-2zM661 129h4v1h-4zM351 130h4v2h-4zM793 130h2v3h-2zM381 131h3v1h-3zM454 131h4v2h-4zM600 131h3v2h-3zM367 132h2v3h-2zM480 132h5v2h-5zM557 132h4v2h-4zM651 132h3v2h-3zM44 133h2v2h-2zM86 133h3v2h-3zM192 133h3v2h-3zM226 133h2v3h-2zM312 133h3v2h-3zM535 133h3v2h-3zM688 133h5v2h-5zM789 133h3v2h-3zM25 134h3v1h-3zM211 134h3v2h-3zM299 134h5v2h-5zM52 135h3v1h-3zM167 135h2v3h-2zM270 135h2v2h-2zM523 135h3v1h-3zM658 135h4v1h-4zM452 136h5v2h-5zM774 136h3v1h-3zM16 137h5v2h-5zM125 137h4v1h-4zM551 137h5v2h-5zM581 137h4v1h-4zM641 137h3v2h-3zM766 137h3v1h-3zM73 138h3v2h-3zM453 138h5v2h-5zM48 139h4v2h-4zM69 139h5v2h-5zM707 139h4v1h-4zM89 140h4v2h-4zM229 140h2v2h-2zM256 140h2v2h-2zM342 140h4v1h-4zM802 140h2v2h-2zM270 141h2v3h-2zM340 141h2v3h-2zM346 141h4v2h-4zM349 141h3v1h-3zM128 142h4v2h-4zM213 142h2v2h-2zM545 142h2v2h-2zM633 142h4v2h-4zM46 143h4v2h-4zM60 143h3v2h-3zM279 143h4v1h-4zM423 143h3v1h-3zM430 143h2v2h-2zM450 143h4v1h-4zM554 143h4v2h-4zM92 144h4v2h-4zM274 144h5v2h-5zM246 145h3v2h-3zM528 145h4v2h-4zM219 146h3v1h-3zM471 146h3v2h-3zM695 146h5v2h-5zM391 147h4v1h-4zM479 147h3v1h-3zM47 148h2v3h-2zM79 148h4v2h-4zM206 148h4v1h-4zM531 149h5v2h-5zM751 149h5v2h-5zM145 150h3v2h-3zM223 150h4v2h-4zM262 150h2v2h-2zM358 150h5v2h-5zM430 150h4v1h-4zM501 150h4v1h-4zM513 150h3v2h-3zM560 150h4v1h-4zM8 151h4v1h-4zM288 151h4v1h-4zM466 151h5v2h-5zM504 151h3v2h-3zM734 151h4v2h-4zM346 152h3v2h-3zM368 152h4v1h-4zM615 152h2v2h-2zM742 152h2v3h-2zM207 153h2v3h-2zM239 153h2v2h-2zM586 153h5v2h-5zM633 153h4v2h-4zM255 154h4v2h-4zM777 154h3v2h-3zM230 155h4v2h-4zM394 155h2v2h-2zM534 155h3v2h-3zM598 155h3v1h-3zM329 156h5v2h-5zM434 156h4v1h-4zM499 156h3v2h-3zM677 156h3v2h-3zM703 156h2v3h-2zM42 158h3v2h-3zM185 158h2v3h-2zM260 158h3v1h-3zM596 158h5v2h-5zM629 158h4v1h-4zM770 158h3v2h-3zM230 159h3v2h-3zM485 159h4v1h-4zM539 159h2v2h-2zM644 159h3v2h-3zM806 159h4v2h-4zM54 160h4v2h-4zM206 160h2v2h-2zM341 160h2v2h-2zM523 160h4v1h-4zM564 160h2v3h-2zM577 160h4v1h-4zM712 160h4v2h-4zM802 160h2v3h-2zM176 161h4v2h-4zM261 161h3v2h-3zM744 161h3v2h-3zM815 161h4v1h-4zM29 162h5v2h-5zM240 162h2v2h-2zM353 162h3v2h-3zM564 162h3v2h-3zM708 162h3v2h-3zM78 163h4v2h-4zM461 163h4v2h-4zM519 163h4v2h-4zM684 163h3v2h-3zM740 163h3v2h-3zM429 164h4v1h-4zM711 164h3v2h-3zM566 165h3v1h-3zM648 165h4v2h-4zM702 165h3v2h-3zM730 165h3v2h-3zM170 166h3v2h-3zM210 166h4v2h-4zM236 166h4v1h-4zM331 166h2v3h-2zM490 166h2v3h-2zM553 166h2v3h-2zM592 166h4v2h-4zM646 166h3v1h-3zM671 166h5v2h-5zM698 166h5v2h-5zM556 167h4v2h-4zM631 167h4v2h-4zM729 167h5v2h-5zM449 168h5v2h-5zM596 168h3v1h-3zM415 169h5v2h-5zM668 169h3v2h-3zM724 169h4v2h-4zM791 169h2v2h-2zM284 170h3v1h-3zM351 170h3v1h-3zM542 170h5v2h-5zM682 170h2v3h-2zM376 171h4v1h-4zM380 171h5v2h-5zM418 171h3v2h-3zM142 172h3v1h-3zM660 172h3v2h-3zM147 173h3v2h-3zM42 174h2v2h-2zM537 174h3v1h-3zM627 174h3v2h-3zM780 174h5v2h-5zM66 175h4v2h-4zM503 175h3v2h-3zM220 176h3v2h-3zM664 176h4v1h-4zM148 177h4v2h-4zM164 177h4v1h-4zM348 177h3v2h-3zM430 177h2v3h-2zM466 177h4v1h-4zM646 177h2v2h-2zM49 178h2v2h-2zM639 178h3v2h-3zM663 178h3v2h-3zM264 179h4v2h-4zM410 179h3v1h-3zM487 179h5v2h-5zM556 179h3v2h-3zM666 179h4v1h-4zM51 180h4v1h-4zM473 180h3v2h-3zM553 180h4v2h-4zM637 180h3v2h-3zM20 181h3v2h-3zM155 181h5v2h-5zM265 181h4v2h-4zM181 182h2v3h-2zM272 182h5v2h-5zM290 182h4v2h-4zM346 182h2v3h-2zM413 182h4v1h-4zM623 182h4v1h-4zM690 182h4v1h-4zM371 183h3v1h-3zM251 184h3v2h-3zM378 184h5v2h-5zM93 185h2v2h-2zM113 185h3v2h-3zM141 185h2v3h-2zM298 185h2v2h-2zM507 185h5v2h-5zM521 185h2v3h-2zM588 185h3v2h-3zM776 185h2v2h-2zM791 185h4v1h-4zM202 186h5v2h-5zM273 186h2v3h-2zM294 186h2v2h-2zM334 186h2v2h-2zM609 186h5v2h-5zM812 186h3v2h-3zM82 187h4v1h-4zM390 187h4v1h-4zM385 188h3v1h-3zM494 188h2v3h-2zM587 188h3v2h-3zM342 189h2v3h-2zM531 189h4v1h-4zM562 189h3v2h-3zM368 190h4v2h-4zM444 190h2v3h-2zM481 190h2v2h-2zM707 190h3v2h-3zM746 190h2v3h-2zM778 190h3v1h-3zM467 191h4v1h-4zM93 192h3v2h-3zM138 192h4v1h-4zM516 192h5v2h-5zM520 192h5v2h-5zM716 192h2v2h-2zM436 193h4v1h-4zM56 194h3v2h-3zM72 194h5v2h-5zM401 194h4v1h-4zM411 194h4v2h-4zM468 194h3v1h-3zM625 194h2v2h-2zM8 195h3v1h-3zM59 195h4v2h-4zM469 195h5v2h-5zM532 195h2v3h-2zM627 195h4v2h-4zM627 196h2v3h-2zM744 197h3v2h-3zM140 198h4v1h-4zM196 198h3v1h-3zM267 198h2v3h-2zM303 198h4v1h-4zM780 198h3v2h-3zM806 198h2v2h-2zM270 199h3v2h-3zM434 199h4v2h-4zM489 199h2v3h-2zM573 199h3v2h-3zM277 200h5v2h-5zM280 200h2v2h-2zM499 200h2v2h-2zM644 200h2v3h-2zM721 200h3v2h-3zM800 200h2v3h-2zM56 201h4v1h-4zM56 201h2v2h-2zM59 201h4v2h-4zM307 201h2v3h-2zM520 201h4v2h-4zM745 201h4v2h-4zM72 202h3v2h-3zM575 202h2v3h-2zM695 202h5v2h-5zM213 203h2v2h-2zM720 203h3v2h-3zM57 204h4v2h-4zM192 204h3v2h-3zM251 204h4v1h-4zM329 204h2v3h-2zM417 204h4v2h-4zM450 204h3v1h-3zM484 204h3v2h-3zM667 204h3v1h-3zM699 204h3v1h-3zM704 204h4v2h-4zM225 205h3v1h-3zM388 205h2v3h-2zM543 205h4v1h-4zM706 205h2v2h-2zM97 206h3v1h-3zM230 206h2v3h-2zM231 206h4v1h-4zM309 206h2v3h-2zM385 206h2v2h-2zM630 206h3v2h-3zM693 206h3v2h-3zM93 207h5v2h-5zM358 207h3v1h-3zM751 207h4v2h-4zM779 207h4v1h-4zM296 208h3v2h-3zM416 208h4v1h-4zM416 208h2v3h-2zM473 208h4v2h-4zM604 208h5v2h-5zM760 208h5v2h-5zM147 209h3v2h-3zM328 209h4v2h-4zM368 209h4v1h-4zM517 209h3v2h-3zM699 209h3v2h-3zM33 210h5v2h-5zM226 210h3v2h-3zM235 210h3v1h-3zM277 210h3v2h-3zM749 210h3v1h-3zM75 211h4v2h-4zM403 211h3v2h-3zM626 211h3v2h-3zM760 211h3v2h-3zM246 212h2v2h-2zM284 212h3v2h-3zM448 212h2v3h-2zM746 212h3v2h-3zM381 213h4v2h-4zM601 213h2v2h-2zM31 214h3v2h-3zM103 214h3v2h-3zM145 214h4v2h-4zM649 214h2v2h-2zM747 214h3v1h-3zM14 215h3v1h-3zM66 215h3v1h-3zM524 215h3v2h-3zM358 216h3v1h-3zM652 216h2v3h-2zM62 217h4v2h-4zM67 217h2v2h-2zM104 217h2v2h-2zM172 217h3v1h-3zM233 217h5v2h-5zM316 217h2v2h-2zM459 218h4v1h-4zM780 218h4v1h-4zM245 219h2v2h-2zM462 219h3v2h-3zM490 219h5v2h-5zM649 219h3v1h-3zM672 219h4v1h-4zM726 219h5v2h-5zM338 220h2v3h-2zM588 220h4v2h-4zM17 221h4v2h-4zM613 221h5v2h-5zM697 221h5v2h-5zM95 222h4v1h-4zM472 222h4v1h-4zM540 223h4v1h-4zM636 223h4v1h-4zM714 223h3v1h-3zM738 223h5v2h-5zM806 223h2v3h-2zM15 224h3v2h-3zM226 224h3v2h-3zM592 224h3v2h-3zM629 224h4v2h-4zM668 224h2v3h-2zM691 224h4v1h-4zM754 224h4v1h-4zM156 225h3v2h-3zM771 225h3v2h-3zM375 226h2v3h-2zM471 226h3v2h-3zM531 226h2v3h-2zM554 226h3v2h-3zM631 226h4v1h-4zM111 227h3v2h-3zM202 227h4v1h-4zM298 227h5v2h-5zM423 227h2v2h-2zM543 227h2v3h-2zM388 228h3v1h-3zM760 228h3v1h-3zM72 229h3v1h-3zM326 229h4v1h-4zM340 229h4v2h-4zM659 229h5v2h-5zM683 229h3v2h-3zM170 230h2v3h-2zM231 230h3v2h-3zM289 230h5v2h-5zM305 230h2v3h-2zM426 230h4v1h-4zM509 230h2v2h-2zM347 231h4v2h-4zM707 231h3v1h-3zM13 232h5v2h-5zM168 232h2v2h-2zM544 232h4v1h-4zM749 232h4v2h-4zM104 233h4v2h-4zM164 233h2v2h-2zM397 233h4v1h-4zM635 233h2v3h-2zM164 234h3v2h-3zM461 234h5v2h-5zM688 234h2v2h-2zM34 235h3v1h-3zM248 235h3v1h-3zM383 235h3v2h-3zM394 235h2v2h-2zM573 235h3v2h-3zM270 236h3v1h-3zM356 236h4v1h-4zM668 236h2v2h-2zM725 236h2v2h-2zM757 236h3v2h-3zM42 237h3v1h-3zM586 237h2v3h-2zM771 237h3v2h-3zM51 238h5v2h-5zM78 238h4v1h-4zM495 238h3v2h-3zM495 238h2v2h-2zM506 238h2v2h-2zM548 238h3v2h-3zM640 238h3v2h-3zM284 239h2v2h-2zM373 239h3v2h-3zM586 239h3v1h-3zM738 239h5v2h-5zM253 240h2v2h-2zM304 240h2v2h-2zM44 242h2v2h-2zM563 242h2v3h-2zM510 243h4v1h-4zM512 243h3v2h-3zM623 243h3v2h-3zM114 244h3v1h-3zM130 244h4v1h-4zM154 244h2v2h-2zM168 244h4v2h-4zM193 244h5v2h-5zM655 244h2v2h-2zM710 244h4v1h-4zM720 244h3v2h-3zM726 244h4v1h-4zM96 245h3v2h-3zM182 245h2v3h-2zM364 245h2v3h-2zM651 245h2v2h-2zM183 246h3v1h-3zM298 246h2v3h-2zM429 246h4v2h-4zM453 246h5v2h-5zM531 246h4v2h-4zM598 246h3v2h-3zM42 247h5v2h-5zM764 247h3v1h-3zM293 248h3v2h-3zM732 248h3v1h-3zM34 249h3v2h-3zM356 249h3v1h-3zM379 249h2v3h-2zM706 249h4v1h-4zM12 250h3v2h-3zM61 250h3v2h-3zM715 250h5v2h-5zM789 250h3v1h-3zM138 251h3v2h-3zM601 251h2v2h-2zM351 252h3v1h-3zM587 252h3v2h-3zM623 252h2v2h-2zM94 253h2v2h-2zM177 253h3v2h-3zM219 253h3v2h-3zM348 253h2v3h-2zM450 253h5v2h-5zM479 253h5v2h-5zM494 253h2v3h-2zM594 253h4v2h-4zM0 254h3v2h-3zM79 254h3v2h-3zM511 254h2v2h-2zM686 254h3v2h-3zM716 254h4v2h-4zM738 254h3v1h-3zM773 254h3v1h-3zM32 255h5v2h-5zM379 255h4v2h-4zM171 256h4v2h-4zM411 256h3v2h-3zM507 256h3v2h-3zM723 256h2v3h-2zM260 257h3v2h-3zM476 257h5v2h-5zM292 258h4v2h-4zM332 258h4v2h-4zM581 258h3v2h-3zM625 258h3v2h-3zM699 258h4v2h-4zM220 259h4v1h-4zM327 259h4v1h-4zM766 259h2v2h-2zM771 259h4v1h-4zM268 260h2v2h-2zM271 260h3v2h-3zM814 260h3v2h-3zM145 261h3v2h-3zM190 261h4v1h-4zM535 261h4v2h-4zM690 261h3v1h-3zM706 261h2v2h-2zM521 262h4v2h-4zM16 263h3v2h-3zM75 263h2v3h-2zM310 263h4v2h-4zM317 263h3v2h-3zM434 263h3v2h-3zM475 263h4v2h-4zM477 263h2v2h-2zM542 263h3v2h-3zM778 263h4v1h-4zM197 264h2v3h-2zM242 264h5v2h-5zM502 264h3v2h-3zM23 265h2v2h-2zM69 265h2v2h-2zM478 265h3v2h-3zM180 266h3v2h-3zM180 266h3v2h-3zM279 266h4v2h-4zM456 266h2v3h-2zM506 266h5v2h-5zM789 266h2v3h-2zM22 267h2v3h-2zM273 267h4v2h-4zM331 267h3v2h-3zM569 267h2v2h-2zM75 268h4v2h-4zM177 268h3v2h-3zM210 268h3v2h-3zM460 268h2v3h-2zM494 268h3v2h-3zM567 268h2v2h-2zM547 269h2v2h-2zM34 270h2v3h-2zM106 270h4v2h-4zM519 270h4v1h-4zM21 271h3v2h-3zM221 271h3v2h-3zM568 271h3v2h-3zM644 271h3v1h-3zM18 272h3v1h-3zM52 272h3v2h-3zM63 272h3v2h-3zM270 272h3v1h-3zM76 273h3v2h-3zM213 273h2v3h-2zM319 273h3v1h-3zM370 273h4v2h-4zM393 273h2v2h-2zM602 273h4v1h-4zM685 273h2v2h-2zM703 273h3v2h-3zM22 274h3v2h-3zM121 274h3v2h-3zM282 274h3v1h-3zM343 274h3v1h-3zM579 274h2v2h-2zM641 274h3v2h-3zM157 275h4v2h-4zM293 275h3v2h-3zM138 276h4v2h-4zM330 276h5v2h-5zM359 276h5v2h-5zM507 276h5v2h-5zM606 276h3v1h-3zM633 276h3v2h-3zM381 277h2v2h-2zM392 277h2v2h-2zM596 277h2v2h-2zM806 277h3v2h-3zM28 278h3v1h-3zM131 278h3v1h-3zM304 278h4v1h-4zM452 278h4v1h-4zM581 278h3v1h-3zM708 278h3v2h-3zM218 279h5v2h-5zM768 279h3v1h-3zM15 280h2v2h-2zM23 280h3v2h-3zM130 280h3v2h-3zM348 280h3v2h-3zM514 280h5v2h-5zM639 280h4v2h-4zM98 281h3v1h-3zM135 281h4v1h-4zM246 281h2v3h-2zM369 282h2v2h-2zM443 282h4v2h-4zM545 282h2v2h-2zM657 282h2v2h-2zM730 282h3v2h-3zM786 282h3v2h-3zM334 283h3v2h-3zM731 283h4v2h-4zM366 284h4v1h-4zM699 284h2v2h-2zM712 284h3v1h-3zM804 284h3v1h-3zM435 285h5v2h-5zM738 285h2v3h-2zM72 286h4v1h-4zM570 286h4v2h-4zM762 286h4v1h-4zM780 286h3v2h-3zM59 287h5v2h-5zM305 287h2v3h-2zM310 287h3v2h-3zM311 287h3v2h-3zM429 287h2v2h-2zM447 287h5v2h-5zM472 287h2v2h-2zM742 287h4v2h-4zM493 288h5v2h-5zM447 289h4v2h-4zM490 289h2v2h-2zM653 289h3v1h-3zM678 290h2v2h-2zM269 291h3v2h-3zM350 291h3v2h-3zM440 291h4v2h-4zM712 291h2v2h-2zM161 292h4v1h-4zM499 292h2v2h-2zM630 292h3v2h-3zM5 293h3v2h-3zM113 293h3v2h-3zM555 293h3v2h-3zM607 293h3v1h-3zM26 294h4v1h-4zM287 294h2v2h-2zM521 294h3v1h-3zM805 295h3v2h-3zM151 296h5v2h-5zM801 296h3v2h-3zM215 297h3v2h-3zM380 297h4v1h-4zM525 297h2v2h-2zM582 297h2v2h-2zM597 297h2v3h-2zM766 297h2v3h-2zM188 298h5v2h-5zM303 298h3v2h-3zM536 298h4v1h-4zM563 298h4v2h-4zM627 298h4v1h-4zM634 298h3v2h-3zM666 298h5v2h-5zM130 299h2v2h-2zM683 299h3v2h-3zM714 299h3v1h-3zM223 300h3v1h-3zM512 300h3v2h-3zM619 300h4v2h-4zM698 300h3v2h-3zM709 300h5v2h-5zM312 301h2v3h-2zM510 301h2v3h-2zM516 301h4v2h-4zM611 301h2v3h-2zM630 301h4v2h-4zM634 301h3v1h-3zM789 301h3v2h-3zM795 301h3v1h-3zM14 302h4v1h-4zM413 302h2v2h-2zM28 303h2v2h-2zM165 303h4v2h-4zM375 303h2v2h-2zM672 303h2v2h-2zM210 304h2v3h-2zM252 304h4v2h-4zM617 304h3v2h-3zM779 305h5v2h-5zM224 306h3v2h-3zM737 306h5v2h-5zM746 306h2v3h-2zM153 307h3v1h-3zM213 307h2v2h-2zM462 307h2v3h-2zM508 307h3v1h-3zM126 308h2v3h-2zM413 308h3v2h-3zM654 308h3v2h-3zM22 309h3v1h-3zM80 309h4v1h-4zM217 309h4v1h-4zM366 309h2v3h-2zM215 310h4v1h-4zM678 310h3v1h-3zM413 312h3v2h-3zM718 312h3v2h-3zM243 313h5v2h-5zM399 313h3v1h-3zM580 314h3v1h-3zM719 314h2v3h-2zM802 314h5v2h-5zM289 315h4v2h-4zM327 315h5v2h-5zM606 315h3v2h-3zM730 315h5v2h-5zM807 315h4v1h-4zM416 316h2v3h-2zM702 317h4v1h-4zM744 317h5v2h-5zM114 318h2v3h-2zM197 318h5v2h-5zM233 318h3v1h-3zM478 318h4v1h-4zM502 318h2v2h-2zM533 318h3v1h-3zM41 319h2v3h-2zM218 319h5v2h-5zM230 319h2v2h-2zM394 319h2v2h-2zM426 319h3v2h-3zM48 320h2v2h-2zM799 320h4v1h-4zM399 321h5v2h-5zM541 321h4v2h-4zM548 321h5v2h-5zM651 321h4v1h-4zM199 322h3v1h-3zM339 322h3v2h-3zM357 322h2v3h-2zM710 322h2v2h-2zM227 323h4v1h-4zM693 323h2v2h-2zM695 323h2v3h-2zM784 323h5v2h-5zM134 324h2v2h-2zM390 324h3v2h-3zM804 324h4v2h-4zM39 325h2v2h-2zM111 325h2v2h-2zM207 325h4v1h-4zM316 325h2v2h-2zM378 325h3v1h-3zM414 325h3v2h-3zM791 325h3v1h-3zM32 326h5v2h-5zM460 326h3v2h-3zM5 327h3v1h-3zM8 327h4v1h-4zM100 327h5v2h-5zM137 327h3v2h-3zM304 327h2v3h-2zM394 327h3v2h-3zM537 327h3v1h-3zM559 327h4v2h-4zM30 328h4v2h-4zM343 328h3v1h-3zM498 328h4v2h-4zM655 328h3v1h-3zM665 328h4v1h-4zM784 328h3v1h-3zM408 329h5v2h-5zM440 329h4v2h-4zM598 329h3v1h-3zM116 330h2v2h-2zM140 330h4v2h-4zM175 330h3v1h-3zM176 330h2v3h-2zM709 330h2v2h-2zM38 331h4v1h-4zM339 331h3v2h-3zM357 331h3v1h-3zM404 331h4v2h-4zM430 331h2v2h-2zM665 331h3v2h-3zM683 331h3v2h-3zM743 331h2v3h-2zM751 331h3v2h-3zM133 332h3v2h-3zM166 332h3v1h-3zM518 332h2v2h-2zM615 333h2v2h-2zM64 334h2v3h-2zM299 334h2v3h-2zM313 334h3v2h-3zM362 334h2v2h-2zM689 335h3v2h-3zM32 336h3v2h-3zM206 336h2v2h-2zM229 336h5v2h-5zM368 336h4v1h-4zM529 336h3v2h-3zM11 337h2v3h-2zM92 337h2v2h-2zM212 337h2v2h-2zM34 338h3v1h-3zM36 338h2v3h-2zM197 338h4v2h-4zM261 338h5v2h-5zM344 338h3v2h-3zM397 338h4v2h-4zM506 338h5v2h-5zM725 338h3v1h-3zM753 338h4v2h-4zM766 338h4v2h-4zM32 339h2v3h-2zM119 339h4v1h-4zM141 339h3v2h-3zM159 340h2v3h-2zM205 340h2v2h-2zM297 340h5v2h-5zM406 340h4v1h-4zM553 340h5v2h-5zM598 340h5v2h-5zM751 340h3v2h-3zM766 340h4v2h-4zM274 341h3v1h-3zM631 341h4v2h-4zM460 342h3v2h-3zM567 342h3v1h-3zM598 342h3v1h-3zM687 342h3v1h-3zM440 343h3v1h-3zM575 343h3v2h-3zM623 343h4v2h-4zM704 343h4v1h-4zM106 344h5v2h-5zM145 344h2v2h-2zM757 344h2v2h-2zM164 345h5v2h-5zM311 345h4v2h-4zM534 345h2v2h-2zM658 345h2v3h-2zM813 345h5v2h-5zM120 346h4v2h-4zM403 346h3v1h-3zM732 347h2v2h-2zM234 348h2v3h-2zM377 348h3v2h-3zM507 348h5v2h-5zM582 348h2v3h-2zM50 349h3v1h-3zM264 349h2v2h-2zM325 349h5v2h-5zM737 349h2v2h-2zM4 350h3v1h-3zM70 350h2v2h-2zM453 350h2v2h-2zM782 350h5v2h-5zM170 351h3v2h-3zM208 351h3v2h-3zM810 351h2v2h-2zM19 352h2v2h-2zM22 352h3v1h-3zM64 352h3v2h-3zM95 352h4v2h-4zM625 352h4v2h-4zM140 353h4v2h-4zM400 353h4v1h-4zM541 353h3v1h-3zM630 353h3v2h-3zM684 353h4v1h-4zM1 354h3v1h-3zM128 354h5v2h-5zM369 354h4v1h-4zM541 354h5v2h-5zM619 354h2v2h-2zM54 355h4v2h-4zM358 355h4v2h-4zM586 355h2v2h-2zM599 355h2v3h-2zM780 355h5v2h-5zM46 356h3v2h-3zM382 356h4v2h-4zM393 356h4v1h-4zM647 356h3v2h-3zM739 356h5v2h-5zM75 357h2v3h-2zM53 358h3v1h-3zM297 358h2v2h-2zM440 358h4v2h-4zM546 358h2v3h-2zM558 358h4v1h-4zM741 359h3v1h-3zM783 359h3v1h-3zM149 360h4v2h-4zM297 360h3v2h-3zM594 360h5v2h-5zM73 361h3v1h-3zM352 361h3v2h-3zM556 361h2v2h-2zM743 361h2v3h-2zM407 362h3v2h-3zM426 362h3v1h-3zM149 363h3v2h-3zM331 363h5v2h-5zM413 363h2v2h-2zM670 363h4v2h-4zM673 364h4v1h-4zM184 365h4v1h-4zM245 365h4v1h-4zM443 365h3v1h-3zM453 365h5v2h-5zM195 366h4v2h-4zM365 366h3v1h-3zM372 366h3v1h-3zM558 366h3v2h-3zM697 366h2v3h-2zM781 366h2v2h-2zM3 367h4v1h-4zM7 367h2v3h-2zM177 367h4v2h-4zM267 367h2v2h-2zM522 367h3v2h-3zM522 367h4v1h-4zM735 367h2v3h-2zM355 368h5v2h-5zM63 369h2v3h-2zM207 369h2v2h-2zM386 369h4v2h-4zM535 369h2v2h-2zM653 369h4v2h-4zM215 370h4v2h-4zM326 370h4v1h-4zM61 371h3v1h-3zM105 371h4v2h-4zM211 371h5v2h-5zM286 371h3v2h-3zM434 371h2v3h-2zM108 372h4v2h-4zM405 372h2v2h-2zM492 372h2v3h-2zM646 372h3v2h-3zM27 373h3v2h-3zM507 373h3v2h-3zM655 373h4v1h-4zM714 373h4v1h-4zM718 373h3v1h-3zM738 373h5v2h-5zM117 375h3v2h-3zM415 375h4v1h-4zM480 375h2v3h-2zM39 376h5v2h-5zM67 376h4v1h-4zM550 376h3v2h-3zM614 376h2v2h-2zM677 376h3v1h-3zM78 377h2v2h-2zM756 377h4v2h-4zM49 378h4v2h-4zM149 378h3v2h-3zM335 378h3v2h-3zM514 378h5v2h-5zM783 378h2v3h-2zM102 379h2v3h-2zM289 379h3v2h-3zM450 379h4v2h-4zM46 380h4v2h-4zM343 380h2v2h-2zM571 380h2v3h-2zM664 380h2v2h-2zM670 380h5v2h-5zM707 380h3v2h-3zM757 380h2v3h-2zM67 381h3v1h-3zM102 381h4v2h-4zM254 381h4v2h-4zM289 381h5v2h-5zM756 381h5v2h-5zM3 382h4v1h-4zM123 382h2v3h-2zM539 382h3v1h-3zM2 383h4v1h-4zM131 384h4v2h-4zM178 384h4v1h-4zM537 384h5v2h-5zM32 385h3v1h-3zM96 385h4v2h-4zM190 385h3v2h-3zM747 385h2v2h-2zM54 386h4v2h-4zM173 386h2v3h-2zM222 386h3v2h-3zM612 386h2v2h-2zM661 386h5v2h-5zM305 387h5v2h-5zM366 387h3v1h-3zM489 387h5v2h-5zM712 387h4v1h-4zM662 388h5v2h-5zM766 388h5v2h-5zM35 389h3v1h-3zM150 389h3v2h-3zM237 389h4v2h-4zM305 389h3v1h-3zM321 389h5v2h-5zM505 389h3v2h-3zM633 389h3v2h-3zM681 389h5v2h-5zM742 389h4v1h-4zM539 390h3v2h-3zM689 390h3v2h-3zM73 391h5v2h-5zM117 391h2v3h-2zM392 391h3v2h-3zM448 391h3v2h-3zM756 391h3v2h-3zM172 392h2v3h-2zM209 392h5v2h-5zM351 392h2v2h-2zM650 392h4v1h-4zM712 392h4v1h-4zM53 393h2v2h-2zM257 393h2v2h-2zM533 393h4v1h-4zM674 393h5v2h-5zM59 394h5v2h-5zM588 394h5v2h-5zM688 394h3v2h-3zM786 394h2v3h-2zM277 395h4v2h-4zM654 395h3v2h-3zM804 395h4v1h-4zM10 396h5v2h-5zM637 396h3v2h-3zM131 397h5v2h-5zM164 397h3v1h-3zM512 397h3v1h-3zM558 397h3v1h-3zM663 397h2v2h-2zM76 398h3v1h-3zM139 398h5v2h-5zM200 398h5v2h-5zM634 398h4v1h-4zM190 399h2v3h-2zM441 399h4v1h-4zM510 399h2v2h-2zM773 399h3v1h-3zM78 400h3v1h-3zM159 400h4v1h-4zM456 400h5v2h-5zM505 400h3v1h-3zM560 400h4v2h-4zM791 400h4v2h-4zM240 401h2v2h-2zM573 401h2v2h-2zM21 402h3v2h-3zM98 402h4v2h-4zM443 402h2v3h-2zM464 402h3v2h-3zM653 402h2v2h-2zM6 403h3v1h-3zM666 403h3v1h-3zM729 403h3v2h-3zM371 404h4v2h-4zM732 404h3v2h-3zM98 405h2v2h-2zM298 405h5v2h-5zM400 405h5v2h-5zM730 405h3v2h-3zM159 406h4v1h-4zM161 406h4v2h-4zM583 406h3v2h-3zM55 407h5v2h-5zM163 407h4v1h-4zM277 407h3v2h-3zM322 407h3v2h-3zM340 407h2v3h-2zM378 407h3v1h-3zM386 407h3v2h-3zM496 407h3v2h-3zM713 407h2v2h-2zM236 408h5v2h-5zM336 408h5v2h-5zM402 408h5v2h-5zM499 408h3v1h-3zM554 408h4v1h-4zM12 409h3v2h-3zM36 409h3v2h-3zM85 409h3v2h-3zM111 409h2v2h-2zM317 409h3v1h-3zM783 409h3v2h-3zM785 409h3v2h-3zM811 409h2v2h-2zM76 410h4v1h-4zM112 410h4v1h-4zM214 410h2v2h-2zM234 410h4v1h-4zM267 410h5v2h-5zM597 410h5v2h-5zM667 410h5v2h-5zM691 410h3v2h-3zM49 411h4v1h-4zM61 411h2v2h-2zM102 411h2v2h-2zM315 411h2v2h-2zM532 411h3v2h-3zM197 412h3v2h-3zM342 412h4v2h-4zM606 412h4v2h-4zM659 412h3v2h-3zM749 412h3v2h-3zM779 412h4v1h-4zM237 413h3v2h-3zM371 413h5v2h-5zM385 413h2v2h-2zM603 413h5v2h-5zM638 413h4v2h-4zM688 413h4v1h-4zM774 413h2v2h-2zM468 415h4v1h-4zM628 415h3v1h-3zM54 416h4v2h-4zM322 416h3v1h-3zM343 416h2v3h-2zM166 417h3v2h-3zM333 417h5v2h-5zM337 417h5v2h-5zM494 417h2v3h-2zM76 418h2v3h-2zM133 418h3v1h-3zM240 418h2v2h-2zM409 418h2v3h-2zM451 418h3v1h-3zM574 418h3v2h-3zM702 418h2v2h-2zM784 418h4v1h-4zM609 419h3v2h-3zM66 420h2v3h-2zM93 420h4v1h-4zM227 420h3v1h-3zM569 420h2v2h-2zM783 420h4v2h-4zM569 421h3v2h-3zM676 422h3v1h-3zM734 422h4v1h-4zM762 422h3v1h-3zM803 422h4v1h-4zM468 423h2v2h-2zM759 423h3v2h-3zM794 423h3v2h-3zM663 424h4v2h-4zM684 424h4v1h-4zM265 425h3v2h-3zM369 425h2v2h-2zM378 425h3v1h-3zM537 425h3v1h-3zM646 425h3v2h-3zM133 426h2v3h-2zM237 426h2v2h-2zM264 426h2v2h-2zM285 426h5v2h-5zM537 426h5v2h-5zM245 427h2v2h-2zM313 427h5v2h-5zM615 427h4v2h-4zM660 428h2v3h-2zM698 428h5v2h-5zM599 429h3v2h-3zM290 430h3v1h-3zM24 431h3v2h-3zM147 431h5v2h-5zM266 431h3v2h-3zM336 431h2v3h-2zM481 431h3v1h-3zM539 431h2v3h-2zM557 431h2v2h-2zM576 431h3v1h-3zM740 431h5v2h-5zM92 432h2v3h-2zM15 433h3v2h-3zM17 433h2v3h-2zM308 433h5v2h-5zM348 433h3v2h-3zM409 433h3v1h-3zM1 434h3v2h-3zM123 434h3v1h-3zM192 434h3v2h-3zM220 435h2v3h-2zM335 435h3v1h-3zM513 435h2v3h-2zM555 435h3v1h-3zM580 435h2v2h-2zM43 436h4v1h-4zM79 436h3v2h-3zM366 436h2v3h-2zM636 436h3v1h-3zM216 437h4v1h-4zM287 437h3v1h-3zM428 437h5v2h-5zM479 437h4v2h-4zM493 437h3v1h-3zM742 437h3v2h-3zM749 437h3v2h-3zM29 438h4v1h-4zM96 438h3v1h-3zM182 438h2v2h-2zM285 438h3v2h-3zM665 438h2v2h-2zM761 438h4v2h-4zM328 439h3v2h-3zM486 439h4v2h-4zM124 440h3v1h-3zM130 440h4v2h-4zM309 440h3v2h-3zM342 440h3v2h-3zM754 440h4v2h-4zM781 440h3v2h-3zM370 441h2v2h-2zM531 441h3v1h-3zM536 441h2v3h-2zM57 442h2v3h-2zM194 442h4v1h-4zM426 442h2v2h-2zM601 442h3v2h-3zM39 443h2v2h-2zM366 443h3v1h-3zM382 443h4v1h-4zM781 443h4v2h-4zM140 444h4v2h-4zM236 444h4v1h-4zM644 444h5v2h-5zM777 444h2v2h-2zM781 444h3v2h-3zM272 445h3v1h-3zM352 445h4v2h-4zM149 446h2v3h-2zM445 446h4v2h-4zM36 447h4v2h-4zM67 447h2v2h-2zM268 447h3v1h-3zM288 447h4v1h-4zM630 447h5v2h-5zM710 447h3v2h-3zM108 448h4v1h-4zM192 448h5v2h-5zM410 448h3v1h-3zM757 448h4v2h-4zM792 448h3v2h-3zM189 449h4v1h-4zM255 449h3v2h-3zM269 449h2v3h-2zM801 449h4v2h-4zM172 450h3v2h-3zM256 450h3v2h-3zM578 450h3v1h-3zM624 450h5v2h-5zM492 451h3v2h-3zM552 451h3v2h-3zM102 452h3v1h-3zM141 452h5v2h-5zM498 452h2v3h-2zM739 452h3v2h-3zM777 452h4v1h-4zM204 453h4v2h-4zM576 453h4v1h-4zM55 454h3v2h-3zM55 454h3v1h-3zM63 454h2v3h-2zM334 454h2v2h-2zM390 454h3v2h-3zM556 454h3v2h-3zM432 455h3v2h-3zM245 456h4v2h-4zM783 456h3v1h-3zM649 457h3v2h-3zM20 458h3v2h-3zM417 458h4v1h-4zM426 458h4v1h-4zM21 459h5v2h-5zM256 459h2v3h-2zM289 459h3v2h-3zM591 459h4v1h-4zM803 459h4v1h-4zM351 460h3v1h-3zM379 460h3v1h-3zM582 460h4v2h-4zM642 460h4v1h-4zM348 461h3v2h-3zM652 461h5v2h-5zM307 462h4v1h-4zM468 462h4v2h-4zM494 462h2v3h-2zM501 462h5v2h-5zM675 462h5v2h-5zM142 463h4v1h-4zM332 463h2v2h-2zM635 463h5v2h-5zM717 463h5v2h-5zM428 464h3v2h-3zM499 464h3v2h-3zM558 464h5v2h-5zM693 464h5v2h-5zM797 464h2v3h-2zM3 465h2v2h-2zM165 465h3v2h-3zM804 465h3v2h-3zM225 466h3v2h-3zM253 466h3v2h-3zM299 466h3v2h-3zM577 466h3v2h-3zM694 466h5v2h-5zM757 466h3v1h-3zM759 466h4v2h-4zM40 467h2v2h-2zM184 467h3v2h-3zM204 467h5v2h-5zM217 467h3v2h-3zM278 467h4v1h-4zM610 467h2v3h-2zM801 467h3v2h-3zM175 468h4v2h-4zM278 468h5v2h-5zM624 468h4v2h-4zM243 469h2v2h-2zM295 469h3v2h-3zM464 469h3v1h-3zM688 469h3v2h-3zM106 470h2v3h-2zM543 470h2v3h-2zM568 470h2v2h-2zM606 470h3v1h-3zM687 470h2v3h-2zM709 470h3v2h-3zM723 470h3v1h-3zM797 470h4v1h-4zM72 471h2v2h-2zM419 471h3v2h-3zM595 471h5v2h-5zM9 472h3v2h-3zM192 472h4v2h-4zM280 472h4v1h-4zM440 472h3v2h-3zM520 472h2v3h-2zM669 472h4v2h-4zM732 472h4v2h-4zM253 473h3v2h-3zM296 473h3v1h-3zM297 473h5v2h-5zM495 473h2v2h-2zM592 473h2v3h-2zM786 473h3v2h-3zM38 474h2v2h-2zM307 474h3v2h-3zM33 475h2v2h-2zM123 475h5v2h-5zM536 475h3v2h-3zM670 475h5v2h-5zM691 475h3v2h-3zM749 475h2v3h-2zM505 476h3v1h-3zM692 476h3v1h-3zM747 476h4v2h-4zM358 477h2v3h-2zM722 477h3v1h-3zM777 477h2v2h-2zM797 477h3v2h-3zM252 478h3v2h-3zM705 478h3v2h-3zM107 479h2v2h-2zM260 479h2v2h-2zM50 480h3v1h-3zM76 480h4v2h-4zM349 480h2v2h-2zM388 480h4v1h-4zM519 480h4v2h-4zM595 480h3v2h-3zM752 480h4v2h-4zM779 480h2v3h-2zM252 481h3v2h-3zM515 481h4v2h-4zM668 481h2v3h-2zM795 481h3v2h-3zM177 482h3v2h-3zM373 482h4v1h-4zM482 482h4v1h-4zM648 482h5v2h-5zM752 482h2v2h-2zM380 483h4v2h-4zM22 484h3v1h-3zM201 484h3v1h-3zM249 484h5v2h-5zM288 484h4v1h-4zM358 484h2v3h-2zM769 484h4v2h-4zM412 485h3v1h-3zM610 485h4v2h-4zM567 486h3v2h-3zM6 487h2v3h-2zM214 487h5v2h-5zM715 488h2v2h-2zM814 488h4v2h-4zM241 489h3v2h-3zM517 489h3v2h-3zM547 489h2v3h-2zM699 489h2v3h-2zM184 490h5v2h-5zM203 490h4v1h-4zM235 490h2v3h-2zM414 490h3v2h-3zM616 490h2v3h-2zM631 490h3v2h-3zM767 490h2v2h-2zM173 491h4v1h-4zM344 491h4v1h-4zM471 491h2v3h-2zM630 491h3v2h-3zM220 492h4v2h-4zM634 492h4v2h-4zM768 492h3v1h-3zM132 493h3v2h-3zM204 493h4v2h-4zM357 493h4v2h-4zM770 493h4v2h-4zM64 494h3v2h-3zM86 494h3v1h-3zM285 494h2v2h-2zM643 494h2v2h-2zM32 495h3v2h-3zM43 495h2v2h-2zM84 495h4v1h-4zM298 495h4v2h-4zM428 495h2v2h-2zM460 495h5v2h-5zM494 495h3v2h-3zM702 495h4v1h-4zM810 495h4v2h-4zM235 496h3v2h-3zM483 496h3v1h-3zM662 496h3v1h-3zM711 496h3v2h-3zM807 496h4v1h-4zM486 497h2v2h-2zM140 498h4v1h-4zM224 498h5v2h-5zM450 498h2v3h-2zM503 498h4v1h-4zM659 498h3v2h-3zM131 499h3v2h-3zM205 499h3v2h-3zM210 499h4v1h-4zM238 499h2v3h-2zM500 499h5v2h-5zM507 499h4v2h-4zM787 499h2v3h-2zM104 500h5v2h-5zM174 500h4v1h-4zM293 500h2v2h-2zM809 500h2v2h-2zM142 501h3v2h-3zM183 501h4v2h-4zM276 502h4v2h-4zM287 502h4v2h-4zM314 502h4v1h-4zM344 502h3v2h-3zM562 502h2v3h-2zM134 503h4v2h-4zM389 503h4v2h-4zM804 503h2v3h-2zM47 504h4v1h-4zM169 504h3v1h-3zM304 504h2v2h-2zM436 504h3v2h-3zM503 504h3v1h-3zM548 504h4v2h-4zM526 505h4v2h-4zM80 506h3v1h-3zM425 506h3v2h-3zM567 506h4v1h-4zM574 506h3v2h-3zM579 506h4v1h-4zM649 506h3v1h-3zM723 506h3v2h-3zM1 507h4v2h-4zM298 507h5v2h-5zM476 507h4v1h-4zM43 508h3v2h-3zM328 508h4v2h-4zM477 508h4v2h-4zM549 508h4v2h-4zM715 509h3v2h-3zM809 509h4v2h-4zM46 510h4v2h-4zM119 510h3v2h-3zM179 510h3v1h-3zM508 510h5v2h-5zM733 510h4v2h-4zM789 510h3v1h-3zM801 510h2v2h-2zM51 511h3v1h-3zM196 511h3v2h-3zM577 511h4v1h-4zM133 512h3v2h-3zM187 512h2v3h-2zM306 512h2v3h-2zM738 512h5v2h-5zM731 513h4v2h-4zM236 514h2v2h-2zM285 514h2v2h-2zM664 514h2v3h-2zM32 515h5v2h-5zM130 515h3v2h-3zM134 515h3v2h-3zM182 515h4v2h-4zM226 515h5v2h-5zM439 515h3v1h-3zM637 515h2v2h-2zM110 516h3v2h-3zM536 516h2v2h-2zM596 516h3v1h-3zM665 516h3v1h-3zM155 517h4v2h-4zM295 517h3v2h-3zM299 517h5v2h-5zM375 517h2v2h-2zM672 517h3v1h-3zM184 518h4v1h-4zM433 518h2v3h-2zM762 519h2v3h-2zM97 520h3v1h-3zM175 520h2v2h-2zM338 520h3v2h-3zM366 520h3v2h-3zM462 520h3v2h-3zM467 520h3v2h-3zM645 520h3v2h-3zM145 521h5v2h-5zM170 521h3v2h-3zM600 521h3v1h-3zM179 522h2v2h-2zM363 522h4v1h-4zM614 522h4v1h-4zM801 522h4v2h-4zM170 523h2v2h-2zM202 523h4v2h-4zM367 523h2v2h-2zM515 523h3v1h-3zM659 523h3v1h-3zM672 523h3v2h-3zM647 524h2v3h-2zM814 524h4v2h-4zM239 525h2v3h-2zM293 525h2v3h-2zM304 525h3v1h-3zM506 525h2v2h-2zM560 525h2v3h-2zM573 525h3v2h-3zM660 525h2v3h-2zM691 525h2v2h-2zM38 526h2v3h-2zM583 526h4v1h-4zM143 527h2v3h-2zM366 527h3v2h-3zM432 527h3v1h-3zM467 527h4v2h-4zM503 527h3v2h-3zM632 527h2v2h-2zM267 528h4v1h-4zM278 528h2v2h-2zM454 528h3v2h-3zM792 528h3v2h-3zM40 529h3v2h-3zM111 530h3v1h-3zM135 530h4v2h-4zM229 530h3v1h-3zM457 530h3v2h-3zM498 530h3v2h-3zM77 531h3v2h-3zM126 531h3v2h-3zM237 531h3v1h-3zM247 531h3v2h-3zM266 531h5v2h-5zM391 531h4v1h-4zM472 531h3v2h-3zM596 531h5v2h-5zM137 532h4v2h-4zM314 532h4v1h-4zM608 532h3v2h-3zM661 532h4v2h-4zM6 533h4v2h-4zM138 533h3v2h-3zM181 533h4v1h-4zM397 533h3v1h-3zM450 533h3v2h-3zM452 533h3v2h-3zM536 533h3v2h-3zM638 533h3v2h-3zM679 533h3v1h-3zM86 534h2v3h-2zM457 534h4v2h-4zM587 534h3v2h-3zM708 534h3v2h-3zM86 535h3v1h-3zM350 535h4v1h-4zM409 535h4v1h-4zM567 535h4v2h-4zM413 536h2v2h-2zM618 536h3v1h-3zM774 536h5v2h-5zM789 536h4v2h-4zM384 537h3v2h-3zM523 537h3v2h-3zM560 537h5v2h-5zM745 537h2v3h-2zM78 538h4v2h-4zM293 538h4v2h-4zM441 538h2v2h-2zM96 539h3v1h-3zM102 539h4v2h-4zM663 539h4v1h-4zM691 539h2v2h-2zM734 539h3v2h-3zM38 540h3v2h-3zM85 540h3v1h-3zM401 540h3v2h-3zM440 540h3v2h-3zM478 540h3v2h-3zM533 540h2v3h-2zM538 540h3v2h-3zM627 540h2v2h-2zM681 540h5v2h-5zM120 541h2v3h-2zM699 541h5v2h-5zM40 542h3v2h-3zM131 542h2v2h-2zM152 542h3v1h-3zM156 542h3v1h-3zM264 542h5v2h-5zM609 542h3v2h-3zM723 542h3v1h-3zM373 543h2v3h-2zM526 543h3v2h-3zM754 543h4v2h-4zM52 544h3v2h-3zM102 544h2v3h-2zM210 544h4v2h-4zM96 545h2v2h-2zM299 545h2v3h-2zM703 545h3v2h-3zM331 546h4v1h-4zM437 546h4v1h-4zM529 546h3v2h-3zM576 546h2v3h-2zM704 546h3v2h-3zM151 547h5v2h-5zM201 547h5v2h-5zM204 547h3v2h-3zM498 547h2v2h-2zM616 547h2v2h-2zM112 548h2v2h-2zM287 548h4v2h-4zM417 548h4v2h-4zM25 549h2v3h-2zM352 549h4v2h-4zM471 549h5v2h-5zM506 549h2v3h-2zM806 549h3v2h-3zM84 550h2v3h-2zM324 550h2v2h-2zM544 550h4v1h-4zM568 550h4v2h-4zM663 550h4v1h-4zM711 550h4v1h-4zM49 551h3v2h-3zM313 551h2v3h-2zM377 551h2v3h-2zM430 551h3v2h-3zM248 552h2v3h-2zM416 552h2v2h-2zM677 552h2v3h-2zM694 552h2v3h-2zM742 552h4v2h-4zM440 553h5v2h-5zM533 553h2v3h-2zM671 553h4v1h-4zM93 554h4v2h-4zM603 554h2v2h-2zM606 554h2v3h-2zM644 554h3v1h-3zM233 555h5v2h-5zM669 555h3v1h-3zM248 556h2v2h-2zM453 556h5v2h-5zM15 557h3v2h-3zM124 557h2v3h-2zM423 557h3v1h-3zM569 557h2v3h-2zM571 557h3v2h-3zM727 557h3v1h-3zM214 558h3v2h-3zM410 558h5v2h-5zM590 558h4v1h-4zM64 559h4v1h-4zM329 559h4v1h-4zM380 559h2v3h-2zM708 559h4v2h-4zM338 560h2v2h-2zM483 560h3v2h-3zM113 561h3v2h-3zM167 561h3v2h-3zM657 561h2v2h-2zM680 561h3v2h-3zM696 561h2v3h-2zM140 562h2v3h-2zM448 562h3v1h-3zM598 562h2v3h-2zM560 563h2v2h-2zM804 563h2v2h-2zM291 564h3v1h-3zM523 564h2v2h-2zM59 565h2v2h-2zM258 565h3v2h-3zM300 565h3v1h-3zM351 565h3v2h-3zM735 565h4v2h-4zM89 566h2v3h-2zM566 566h3v1h-3zM720 566h4v1h-4zM452 567h4v2h-4zM162 568h3v2h-3zM283 568h2v3h-2zM328 569h3v2h-3zM434 569h2v3h-2zM792 569h3v2h-3zM113 570h4v1h-4zM632 570h2v2h-2zM766 570h5v2h-5zM231 571h4v2h-4zM633 571h3v2h-3zM804 571h3v2h-3zM159 572h2v3h-2zM342 572h2v3h-2zM439 572h2v3h-2zM539 572h3v2h-3zM127 573h2v3h-2zM733 573h2v2h-2zM62 574h3v1h-3zM207 574h3v2h-3zM265 574h3v1h-3zM460 574h2v2h-2zM575 574h3v2h-3zM188 575h3v1h-3zM203 575h4v2h-4zM603 575h2v3h-2zM648 575h4v2h-4zM814 575h3v1h-3zM389 576h5v2h-5zM597 576h4v2h-4zM11 577h2v3h-2zM138 577h3v2h-3zM280 577h5v2h-5zM406 577h4v2h-4zM521 577h4v1h-4zM80 578h3v2h-3zM180 578h5v2h-5zM64 579h2v3h-2zM358 579h2v3h-2zM466 579h4v1h-4zM559 579h4v2h-4zM22 580h5v2h-5zM56 580h3v2h-3zM212 580h4v2h-4zM358 580h2v3h-2zM461 580h4v1h-4zM142 581h2v2h-2zM147 581h4v2h-4zM245 581h3v2h-3zM686 581h2v2h-2zM720 581h3v1h-3zM242 582h5v2h-5zM336 582h3v2h-3zM377 582h3v2h-3zM493 582h3v1h-3zM651 582h5v2h-5zM773 582h3v1h-3zM782 582h4v1h-4zM2 583h4v1h-4zM333 583h2v2h-2zM379 583h2v3h-2zM544 583h3v2h-3zM787 583h3v1h-3zM496 584h3v2h-3zM772 584h2v3h-2zM778 584h2v3h-2zM39 585h2v2h-2zM146 585h5v2h-5zM385 585h5v2h-5zM538 585h2v3h-2zM167 586h3v2h-3zM369 587h5v2h-5zM486 587h4v2h-4zM671 587h5v2h-5zM685 588h3v2h-3zM782 588h2v3h-2zM522 589h3v2h-3zM529 589h5v2h-5zM113 590h4v1h-4zM186 590h2v2h-2zM190 590h2v3h-2zM355 590h2v2h-2zM607 590h4v1h-4zM49 591h5v2h-5zM230 591h2v2h-2zM298 591h2v3h-2zM326 591h3v1h-3zM712 591h4v2h-4zM723 591h4v1h-4zM486 592h3v2h-3zM514 592h4v2h-4zM714 592h3v2h-3zM221 593h4v2h-4zM453 593h2v2h-2zM605 593h2v3h-2zM370 594h2v3h-2zM107 595h3v1h-3zM149 595h2v3h-2zM240 595h3v2h-3zM635 595h2v2h-2zM645 595h2v3h-2zM250 596h5v2h-5zM336 596h3v1h-3zM554 596h2v3h-2zM586 596h4v1h-4zM659 596h4v1h-4zM714 596h4v2h-4zM743 596h2v2h-2zM284 598h4v1h-4zM287 598h5v2h-5zM509 598h4v2h-4zM539 598h5v2h-5zM365 599h3v1h-3zM414 599h2v2h-2zM422 599h3v1h-3zM545 599h3v1h-3zM629 600h4v1h-4zM689 600h3v2h-3zM228 601h3v2h-3zM571 601h4v2h-4zM578 601h2v3h-2zM651 601h3v2h-3zM723 601h4v1h-4zM787 602h4v1h-4zM796 602h4v2h-4zM91 603h2v3h-2zM208 603h4v2h-4zM267 603h2v2h-2zM362 603h2v2h-2zM60 604h4v1h-4zM717 604h3v2h-3zM275 605h3v2h-3zM476 605h3v2h-3zM625 605h4v2h-4zM125 606h5v2h-5zM392 606h4v1h-4zM714 606h2v2h-2zM8 607h2v2h-2zM106 607h5v2h-5zM199 607h3v2h-3zM173 608h3v2h-3zM394 608h2v3h-2zM785 608h4v1h-4zM406 610h3v2h-3zM485 610h2v3h-2zM734 610h3v2h-3zM38 611h2v3h-2zM148 611h3v1h-3zM600 611h3v2h-3zM126 612h5v2h-5zM384 612h2v2h-2zM539 612h2v3h-2zM693 612h4v2h-4zM198 613h2v2h-2zM290 613h3v1h-3zM547 613h4v1h-4zM550 613h2v2h-2zM698 613h3v2h-3zM758 613h4v2h-4zM71 614h2v3h-2zM168 614h3v2h-3zM612 614h4v2h-4zM809 614h2v3h-2zM812 614h2v2h-2zM33 615h2v2h-2zM669 615h4v1h-4zM43 616h3v2h-3zM206 616h4v2h-4zM292 616h2v3h-2zM330 616h2v2h-2zM590 616h5v2h-5zM638 616h3v2h-3zM717 616h4v2h-4zM745 616h3v2h-3zM774 616h3v2h-3zM105 617h2v2h-2zM301 617h3v2h-3zM344 617h3v1h-3zM486 617h5v2h-5zM57 618h4v1h-4zM444 618h2v2h-2zM737 618h4v2h-4zM67 619h3v2h-3zM321 619h3v2h-3zM427 619h3v2h-3zM635 619h3v1h-3zM134 620h2v2h-2zM426 620h4v1h-4zM189 621h5v2h-5zM456 621h3v2h-3zM602 621h3v2h-3zM740 621h2v3h-2zM289 622h4v2h-4zM336 622h3v1h-3zM409 622h5v2h-5zM472 622h3v2h-3zM241 623h3v1h-3zM450 623h4v1h-4zM657 623h2v2h-2zM110 624h5v2h-5zM270 624h3v2h-3zM765 624h4v2h-4zM5 625h2v3h-2zM35 625h3v1h-3zM82 625h5v2h-5zM345 625h4v1h-4zM755 625h3v2h-3zM94 626h4v1h-4zM269 626h3v2h-3zM286 626h3v2h-3zM449 626h4v1h-4zM590 626h4v2h-4zM778 626h3v2h-3zM520 627h3v2h-3zM595 627h3v1h-3zM604 627h4v1h-4zM787 627h2v2h-2zM258 628h3v2h-3zM777 628h4v1h-4zM16 629h4v2h-4zM585 629h4v2h-4zM629 629h5v2h-5zM697 629h2v3h-2zM249 630h2v2h-2zM307 630h2v3h-2zM426 630h2v2h-2zM150 631h4v2h-4zM634 631h2v2h-2zM66 632h3v2h-3zM390 632h3v2h-3zM289 633h3v2h-3zM560 633h4v1h-4zM673 633h2v2h-2zM787 633h4v1h-4zM808 633h4v2h-4zM70 634h2v2h-2zM543 634h5v2h-5zM621 634h4v2h-4zM771 634h3v2h-3zM69 635h3v1h-3zM647 635h4v2h-4zM76 636h4v1h-4zM473 636h3v2h-3zM127 637h5v2h-5zM285 637h2v3h-2zM478 637h3v2h-3zM303 638h3v2h-3zM682 638h5v2h-5zM746 638h3v2h-3zM796 638h3v2h-3zM107 639h3v1h-3zM244 639h4v1h-4zM812 639h5v2h-5zM0 640h3v2h-3zM410 640h3v2h-3zM716 640h2v2h-2zM396 641h4v1h-4zM465 641h2v2h-2zM557 641h3v1h-3zM12 642h4v2h-4zM180 642h3v1h-3zM392 642h4v2h-4zM496 642h5v2h-5zM710 642h2v2h-2zM775 642h4v2h-4zM259 643h3v1h-3zM12 644h2v2h-2zM140 644h2v2h-2zM322 644h3v1h-3zM478 644h3v2h-3zM528 644h3v2h-3zM58 645h3v1h-3zM434 645h4v1h-4zM206 646h3v2h-3zM465 646h3v2h-3zM568 646h2v2h-2zM579 646h3v2h-3zM586 646h2v2h-2zM616 646h4v1h-4zM776 646h3v2h-3zM205 647h5v2h-5zM227 647h3v2h-3zM488 647h5v2h-5zM735 647h3v2h-3zM401 648h3v1h-3zM365 650h4v1h-4zM681 651h3v2h-3zM809 651h3v2h-3zM238 652h3v2h-3zM144 653h3v1h-3zM650 654h3v1h-3zM41 655h3v1h-3zM466 655h3v1h-3zM701 655h2v3h-2zM815 656h3v2h-3zM231 657h4v2h-4zM237 657h2v3h-2zM252 657h4v2h-4zM268 657h2v3h-2zM89 658h5v2h-5zM245 658h3v2h-3zM414 658h2v3h-2zM203 659h3v2h-3zM645 659h3v2h-3zM755 659h3v2h-3zM811 659h3v2h-3zM69 660h4v1h-4zM371 660h4v1h-4zM525 660h4v2h-4zM663 660h3v2h-3zM788 660h2v3h-2zM159 661h4v1h-4zM237 661h3v2h-3zM745 661h2v3h-2zM275 662h3v1h-3zM395 662h3v1h-3zM413 662h5v2h-5zM651 662h2v3h-2zM31 663h3v2h-3zM151 663h2v2h-2zM212 663h2v2h-2zM583 663h3v2h-3zM616 663h4v2h-4zM703 663h2v3h-2zM777 663h4v2h-4zM779 663h2v3h-2zM247 664h3v2h-3zM380 664h4v2h-4zM388 664h3v1h-3zM801 664h4v1h-4zM175 665h2v2h-2zM250 666h2v3h-2zM407 666h2v2h-2zM565 666h3v1h-3zM645 666h5v2h-5zM661 666h2v2h-2zM707 666h5v2h-5zM21 667h3v1h-3zM100 667h3v2h-3zM504 668h5v2h-5zM108 669h2v3h-2zM652 669h4v1h-4zM161 670h3v2h-3zM186 670h3v2h-3zM572 670h2v3h-2zM796 670h2v3h-2zM29 672h2v3h-2zM226 672h2v3h-2zM265 672h3v2h-3zM710 672h3v1h-3zM35 673h4v1h-4zM318 673h3v2h-3zM595 673h2v2h-2zM766 673h2v2h-2zM73 674h3v1h-3zM379 674h3v2h-3zM487 674h3v2h-3zM542 674h3v1h-3zM697 674h2v2h-2zM797 674h3v2h-3zM166 676h5v2h-5zM359 676h2v3h-2zM712 676h4v2h-4zM753 676h3v2h-3zM264 677h3v1h-3zM328 677h3v2h-3zM231 678h2v2h-2zM409 678h4v1h-4zM491 678h3v2h-3zM701 678h2v3h-2zM134 679h3v2h-3zM556 679h2v3h-2zM661 679h3v2h-3zM696 679h2v2h-2zM272 680h4v1h-4zM295 680h2v3h-2zM503 680h3v2h-3zM73 681h2v2h-2zM329 681h3v1h-3zM623 681h5v2h-5zM767 681h4v2h-4zM366 682h4v1h-4zM647 682h3v2h-3zM658 682h4v2h-4zM734 682h5v2h-5zM15 683h4v2h-4zM94 683h2v3h-2zM213 683h3v1h-3zM429 683h4v2h-4zM551 683h4v2h-4zM617 683h4v1h-4zM167 684h3v2h-3zM587 684h4v2h-4zM736 684h3v1h-3zM237 685h2v2h-2zM407 685h4v1h-4zM507 685h2v3h-2zM166 686h5v2h-5zM748 686h3v1h-3zM217 687h4v2h-4zM228 687h4v2h-4zM267 687h3v2h-3zM96 688h5v2h-5zM195 688h3v1h-3zM239 688h2v2h-2zM409 688h2v3h-2zM510 688h5v2h-5zM520 688h2v3h-2zM170 689h3v1h-3zM183 689h3v2h-3zM384 689h2v2h-2zM492 689h4v1h-4zM495 689h2v2h-2zM556 689h3v2h-3zM622 689h4v2h-4zM644 689h4v1h-4zM780 689h3v2h-3zM29 690h3v1h-3zM29 690h2v3h-2zM159 690h2v2h-2zM397 690h3v2h-3zM810 690h2v3h-2zM143 691h4v2h-4zM412 691h3v2h-3zM618 691h3v2h-3zM110 692h4v2h-4zM130 692h3v1h-3zM574 692h3v1h-3zM627 692h2v3h-2zM784 692h5v2h-5zM801 692h4v1h-4zM115 693h4v2h-4zM151 693h2v2h-2zM323 693h4v2h-4zM328 694h4v1h-4zM461 694h2v3h-2zM773 694h3v1h-3zM25 695h3v2h-3zM658 695h5v2h-5zM670 695h2v2h-2zM52 696h2v2h-2zM307 696h4v2h-4zM389 696h2v3h-2zM184 697h3v1h-3zM238 697h4v2h-4zM251 697h3v2h-3zM553 697h2v3h-2zM651 697h4v1h-4zM651 697h4v1h-4zM299 698h3v1h-3zM143 699h4v1h-4zM253 699h4v2h-4zM578 699h3v1h-3zM595 699h2v2h-2zM93 700h3v1h-3zM94 700h3v2h-3zM234 700h2v2h-2zM342 700h4v1h-4zM531 700h3v1h-3zM563 700h2v3h-2zM150 701h3v2h-3zM258 701h5v2h-5zM521 701h4v2h-4zM644 701h2v3h-2zM800 701h3v2h-3zM287 702h2v3h-2zM488 702h2v2h-2zM262 703h5v2h-5zM395 703h2v3h-2zM445 703h2v3h-2zM648 703h4v2h-4zM657 703h4v1h-4zM7 704h5v2h-5zM168 705h4v2h-4zM718 705h3v2h-3zM2 706h3v2h-3zM189 706h2v2h-2zM438 706h3v1h-3zM447 706h3v2h-3zM633 706h3v2h-3zM492 707h5v2h-5zM593 707h2v2h-2zM761 707h4v1h-4zM181 708h4v2h-4zM344 708h3v2h-3zM12 709h2v2h-2zM194 709h2v3h-2zM203 710h5v2h-5zM354 711h3v2h-3zM567 711h4v2h-4zM753 711h2v2h-2zM783 711h2v3h-2zM805 711h5v2h-5zM214 712h4v2h-4zM103 713h5v2h-5zM502 713h3v2h-3zM559 713h2v3h-2zM384 714h3v2h-3zM503 714h4v1h-4zM788 714h3v2h-3zM211 715h3v2h-3zM294 715h5v2h-5zM467 715h3v1h-3zM680 715h4v2h-4zM758 715h4v1h-4zM221 716h3v2h-3zM238 716h2v3h-2zM246 716h3v1h-3zM254 717h3v1h-3zM270 718h4v2h-4zM400 718h2v3h-2zM576 718h5v2h-5zM293 719h3v2h-3zM512 719h3v1h-3zM691 719h5v2h-5zM110 720h3v2h-3zM128 720h2v2h-2zM656 720h2v3h-2zM776 720h4v2h-4zM184 721h2v3h-2zM624 721h4v2h-4zM649 721h4v2h-4zM772 721h2v3h-2zM89 722h2v2h-2zM508 722h2v3h-2zM756 722h3v1h-3zM501 723h2v3h-2zM147 724h3v2h-3zM349 724h3v2h-3zM376 724h4v2h-4zM525 724h3v1h-3zM586 724h3v2h-3zM27 725h3v2h-3zM740 725h3v2h-3zM798 725h4v2h-4zM10 727h3v2h-3zM197 727h5v2h-5zM333 727h5v2h-5zM354 727h3v2h-3zM558 727h2v2h-2zM728 727h2v3h-2zM748 727h2v2h-2zM754 727h2v3h-2zM232 728h5v2h-5zM248 728h4v2h-4zM427 728h2v2h-2zM498 728h5v2h-5zM69 729h3v2h-3zM75 729h4v1h-4zM369 729h4v1h-4zM583 729h4v2h-4zM682 729h4v1h-4zM327 730h3v2h-3zM406 730h3v1h-3zM464 730h5v2h-5zM564 730h3v2h-3zM748 730h3v2h-3zM362 731h2v2h-2zM699 731h4v2h-4zM778 731h5v2h-5zM262 732h2v3h-2zM468 732h3v2h-3zM569 732h4v2h-4zM643 732h4v1h-4zM391 733h3v2h-3zM430 733h3v1h-3zM95 734h2v3h-2zM115 734h4v1h-4zM201 734h3v1h-3zM386 734h2v2h-2zM624 734h5v2h-5zM92 735h4v1h-4zM271 735h2v2h-2zM368 735h4v1h-4zM500 735h2v2h-2zM512 735h3v2h-3zM549 735h3v1h-3zM599 735h5v2h-5zM700 735h4v2h-4zM89 737h5v2h-5zM190 737h2v2h-2zM400 737h3v2h-3zM449 737h3v1h-3zM677 737h3v2h-3zM809 737h4v1h-4zM360 738h3v2h-3zM398 738h4v2h-4zM763 738h2v3h-2zM808 738h3v1h-3zM210 739h2v2h-2zM249 739h4v1h-4zM464 739h2v2h-2zM588 739h2v2h-2zM18 740h2v2h-2zM262 740h3v2h-3zM281 740h2v2h-2zM702 740h5v2h-5zM745 740h5v2h-5zM643 741h4v1h-4zM140 742h5v2h-5zM148 742h2v2h-2zM297 742h5v2h-5zM595 742h5v2h-5zM764 743h3v2h-3zM35 744h3v2h-3zM147 744h3v1h-3zM272 744h4v1h-4zM281 744h4v1h-4zM314 744h3v2h-3zM526 744h2v3h-2zM603 744h4v1h-4zM639 744h5v2h-5zM771 744h4v2h-4zM305 745h2v2h-2zM652 745h3v2h-3zM88 746h3v1h-3zM203 746h4v2h-4zM271 746h5v2h-5zM445 746h3v2h-3zM798 746h2v2h-2zM313 747h3v2h-3zM608 747h4v1h-4zM722 747h3v2h-3zM747 747h3v1h-3zM792 747h3v1h-3zM480 748h3v2h-3zM742 748h4v2h-4zM780 748h4v1h-4zM784 748h2v3h-2zM326 749h4v2h-4zM529 749h5v2h-5zM124 750h4v1h-4zM131 750h3v1h-3zM702 750h4v1h-4zM720 750h4v1h-4zM92 751h3v2h-3zM146 751h2v3h-2zM515 751h3v2h-3zM313 752h2v3h-2zM453 752h5v2h-5zM583 752h2v2h-2zM282 753h5v2h-5zM355 753h2v3h-2zM788 753h2v2h-2zM327 754h3v2h-3zM745 754h4v2h-4zM796 754h3v2h-3zM33 755h4v1h-4zM641 755h5v2h-5zM708 755h4v1h-4zM656 756h4v1h-4zM782 756h2v3h-2zM311 757h4v1h-4zM344 757h4v2h-4zM473 757h4v2h-4zM71 758h4v2h-4zM452 758h2v3h-2zM675 758h3v1h-3zM716 758h4v2h-4zM726 758h3v2h-3zM124 759h3v2h-3zM155 760h5v2h-5zM446 760h5v2h-5zM518 760h2v3h-2zM799 760h5v2h-5zM258 761h2v3h-2zM608 761h2v3h-2zM630 761h5v2h-5zM645 761h3v1h-3zM42 762h3v2h-3zM415 762h2v2h-2zM588 762h3v1h-3zM134 763h3v1h-3zM351 763h4v2h-4zM548 763h2v3h-2zM535 764h3v1h-3zM591 764h2v2h-2zM62 765h5v2h-5zM257 765h3v1h-3zM131 766h3v2h-3zM527 766h3v2h-3zM535 767h3v1h-3zM807 767h3v1h-3z"/><path fill="#0c0c68" d="M336 18h2v3h-2zM390 18h2v2h-2zM444 19h2v2h-2zM86 20h3v1h-3zM452 21h5v2h-5zM234 22h2v2h-2zM339 22h5v2h-5zM509 22h3v2h-3zM792 22h3v1h-3zM322 23h4v1h-4zM336 23h3v2h-3zM512 23h2v3h-2zM554 23h4v1h-4zM107 24h5v2h-5zM532 24h2v3h-2zM216 25h4v2h-4zM600 26h5v2h-5zM734 27h4v2h-4zM765 27h2v2h-2zM381 28h4v2h-4zM90 29h4v1h-4zM518 29h4v1h-4zM103 30h5v2h-5zM396 30h4v2h-4zM21 31h4v2h-4zM445 31h3v2h-3zM127 32h3v2h-3zM339 32h3v2h-3zM132 33h3v1h-3zM140 33h3v2h-3zM195 33h4v1h-4zM395 34h5v2h-5zM168 35h3v2h-3zM267 35h5v2h-5zM426 35h2v3h-2zM721 35h3v2h-3zM613 37h3v2h-3zM672 38h2v2h-2zM116 39h3v2h-3zM216 40h3v2h-3zM659 40h3v2h-3zM670 40h3v2h-3zM765 40h3v2h-3zM441 41h4v1h-4zM97 42h3v2h-3zM306 42h2v3h-2zM381 42h2v3h-2zM570 42h4v1h-4zM701 42h3v1h-3zM792 42h4v2h-4zM13 43h2v3h-2zM333 44h4v2h-4zM89 47h4v2h-4zM686 47h3v2h-3zM376 48h3v1h-3zM633 48h3v2h-3zM650 48h3v2h-3zM208 49h4v1h-4zM254 49h2v2h-2zM351 49h3v2h-3zM781 49h4v1h-4zM490 50h4v2h-4zM571 50h5v2h-5zM715 51h4v2h-4zM360 52h5v2h-5zM471 53h2v3h-2zM642 53h3v1h-3zM109 55h4v1h-4zM136 55h3v1h-3zM156 55h2v3h-2zM178 55h4v2h-4zM573 55h3v1h-3zM55 57h3v1h-3zM554 58h4v1h-4zM703 58h4v1h-4zM316 59h3v2h-3zM419 59h3v2h-3zM714 59h4v2h-4zM743 59h2v2h-2zM758 59h2v3h-2zM240 60h3v2h-3zM540 60h2v3h-2zM680 60h3v2h-3zM293 61h4v1h-4zM465 64h4v1h-4zM727 64h2v2h-2zM813 64h3v2h-3zM27 65h2v3h-2zM308 65h4v2h-4zM767 65h4v2h-4zM803 65h2v3h-2zM75 67h3v2h-3zM497 67h3v1h-3zM664 67h5v2h-5zM750 67h3v2h-3zM4 68h2v3h-2zM326 68h3v2h-3zM522 68h4v2h-4zM640 68h3v2h-3zM104 69h4v1h-4zM405 70h2v3h-2zM448 70h3v2h-3zM567 70h4v1h-4zM140 71h2v3h-2zM1 72h4v1h-4zM453 72h3v1h-3zM635 72h2v2h-2zM176 74h2v3h-2zM759 74h3v2h-3zM781 74h3v2h-3zM77 75h3v2h-3zM178 75h3v2h-3zM302 75h3v1h-3zM163 76h4v2h-4zM307 76h4v2h-4zM466 77h4v2h-4zM129 78h4v1h-4zM284 78h3v1h-3zM689 79h2v2h-2zM181 81h4v2h-4zM215 81h2v2h-2zM761 81h2v3h-2zM792 81h2v3h-2zM409 82h3v2h-3zM498 82h3v2h-3zM178 83h4v2h-4zM324 83h4v2h-4zM655 83h2v3h-2zM677 83h3v2h-3zM248 84h3v2h-3zM373 84h3v1h-3zM670 84h4v2h-4zM676 84h5v2h-5zM511 85h2v2h-2zM544 85h2v2h-2zM18 86h4v2h-4zM341 86h2v3h-2zM738 86h2v3h-2zM88 88h3v2h-3zM249 88h4v2h-4zM21 89h4v1h-4zM241 89h3v1h-3zM428 89h3v1h-3zM2 90h4v2h-4zM318 90h4v2h-4zM530 90h3v1h-3zM637 90h4v2h-4zM194 91h3v1h-3zM81 92h2v3h-2zM204 92h2v3h-2zM212 92h3v2h-3zM255 92h3v2h-3zM258 93h2v2h-2zM347 93h4v1h-4zM485 93h3v2h-3zM770 93h3v2h-3zM435 95h5v2h-5zM568 95h4v1h-4zM654 95h2v2h-2zM225 96h2v3h-2zM230 97h3v2h-3zM481 97h2v3h-2zM511 97h5v2h-5zM540 97h3v2h-3zM187 98h4v1h-4zM582 99h5v2h-5zM51 100h4v2h-4zM410 100h3v2h-3zM653 100h2v2h-2zM497 101h2v3h-2zM67 104h3v2h-3zM159 104h3v1h-3zM319 104h3v2h-3zM369 104h3v2h-3zM501 104h2v2h-2zM100 105h4v2h-4zM443 105h3v1h-3zM50 106h4v1h-4zM307 106h5v2h-5zM412 107h2v3h-2zM138 108h2v2h-2zM626 108h3v2h-3zM143 109h3v2h-3zM602 109h4v2h-4zM736 109h3v2h-3zM374 110h3v2h-3zM605 110h3v2h-3zM617 110h4v1h-4zM796 110h3v2h-3zM808 110h4v2h-4zM69 112h3v1h-3zM346 113h2v3h-2zM764 113h4v2h-4zM687 114h2v2h-2zM19 115h2v2h-2zM448 115h3v2h-3zM541 115h3v2h-3zM492 116h3v2h-3zM762 117h3v2h-3zM127 118h3v2h-3zM158 118h3v2h-3zM393 118h3v2h-3zM347 119h3v2h-3zM397 119h3v2h-3zM724 119h3v1h-3zM417 120h3v1h-3zM423 121h3v2h-3zM168 122h4v1h-4zM229 123h2v3h-2zM490 123h4v2h-4zM403 124h3v2h-3zM463 124h3v1h-3zM803 125h3v2h-3zM80 126h3v2h-3zM773 126h4v2h-4zM379 127h3v2h-3zM787 127h4v1h-4zM216 128h5v2h-5zM487 128h4v2h-4zM489 129h2v3h-2zM534 129h2v3h-2zM641 129h2v3h-2zM202 130h5v2h-5zM728 130h3v1h-3zM0 131h4v1h-4zM711 131h3v2h-3zM181 134h2v3h-2zM205 134h3v2h-3zM576 134h2v3h-2zM286 137h3v1h-3zM676 139h2v2h-2zM128 140h5v2h-5zM307 140h3v1h-3zM323 140h3v2h-3zM397 140h2v3h-2zM614 140h4v1h-4zM594 141h5v2h-5zM203 142h2v3h-2zM797 143h4v2h-4zM201 144h5v2h-5zM512 144h3v2h-3zM541 145h2v2h-2zM308 146h3v2h-3zM580 146h2v3h-2zM716 147h4v2h-4zM138 148h2v3h-2zM234 148h3v2h-3zM267 148h3v2h-3zM487 148h4v1h-4zM674 149h3v2h-3zM138 150h5v2h-5zM186 150h4v1h-4zM636 150h2v3h-2zM426 151h2v2h-2zM640 151h4v2h-4zM505 152h3v1h-3zM717 152h2v3h-2zM720 152h2v3h-2zM9 153h3v1h-3zM25 153h4v2h-4zM101 153h2v3h-2zM280 153h2v2h-2zM169 154h3v1h-3zM761 154h3v2h-3zM141 155h3v1h-3zM518 155h4v1h-4zM731 155h2v3h-2zM745 155h3v1h-3zM782 155h3v2h-3zM131 156h2v2h-2zM259 156h2v3h-2zM763 156h5v2h-5zM50 157h4v2h-4zM723 157h5v2h-5zM180 158h2v3h-2zM327 159h3v2h-3zM377 159h4v1h-4zM45 160h4v1h-4zM288 160h3v1h-3zM449 160h4v1h-4zM767 160h4v2h-4zM799 160h4v2h-4zM179 161h2v2h-2zM295 161h3v1h-3zM357 161h2v3h-2zM496 161h3v2h-3zM508 161h5v2h-5zM8 162h4v1h-4zM111 162h4v1h-4zM191 163h3v1h-3zM419 163h3v2h-3zM47 165h4v1h-4zM179 165h3v2h-3zM431 165h4v1h-4zM653 165h4v1h-4zM700 165h5v2h-5zM562 166h3v1h-3zM623 166h2v3h-2zM669 166h4v2h-4zM679 166h3v1h-3zM689 166h3v1h-3zM119 168h4v1h-4zM154 168h4v1h-4zM49 169h2v3h-2zM204 169h2v3h-2zM739 169h3v1h-3zM171 171h3v1h-3zM446 171h2v3h-2zM687 171h4v1h-4zM772 171h4v1h-4zM19 172h3v1h-3zM425 172h3v1h-3zM646 172h4v2h-4zM221 174h2v2h-2zM354 174h3v1h-3zM769 174h3v2h-3zM234 175h3v2h-3zM542 175h3v2h-3zM795 175h2v3h-2zM90 176h2v2h-2zM225 176h3v1h-3zM296 176h3v2h-3zM44 177h2v2h-2zM441 177h3v2h-3zM607 177h3v2h-3zM656 177h4v2h-4zM594 178h4v2h-4zM641 178h5v2h-5zM647 178h5v2h-5zM11 179h2v3h-2zM36 179h2v3h-2zM452 179h3v1h-3zM40 180h4v1h-4zM258 180h5v2h-5zM35 181h5v2h-5zM226 181h4v1h-4zM248 182h3v1h-3zM486 183h5v2h-5zM596 183h5v2h-5zM125 184h3v2h-3zM373 184h2v3h-2zM651 185h3v1h-3zM292 186h4v2h-4zM466 187h3v2h-3zM583 187h4v2h-4zM306 188h3v1h-3zM463 188h5v2h-5zM78 189h3v2h-3zM322 189h4v2h-4zM441 189h4v1h-4zM116 190h3v2h-3zM462 190h4v2h-4zM540 190h2v2h-2zM74 191h3v1h-3zM502 192h4v2h-4zM6 193h4v1h-4zM251 193h4v2h-4zM720 194h3v1h-3zM155 196h3v2h-3zM267 196h4v2h-4zM84 197h2v2h-2zM145 197h3v2h-3zM545 197h3v2h-3zM711 198h2v2h-2zM281 199h3v2h-3zM432 200h4v1h-4zM781 200h4v2h-4zM169 201h2v3h-2zM363 201h2v3h-2zM62 202h5v2h-5zM21 203h2v3h-2zM48 203h2v3h-2zM99 203h2v3h-2zM106 204h2v3h-2zM341 204h3v1h-3zM540 205h5v2h-5zM435 206h4v2h-4zM537 206h4v1h-4zM259 207h5v2h-5zM632 207h4v2h-4zM660 207h4v1h-4zM24 208h5v2h-5zM291 208h3v2h-3zM292 208h3v2h-3zM401 208h3v1h-3zM624 208h5v2h-5zM751 208h2v3h-2zM461 209h3v2h-3zM567 209h3v2h-3zM104 210h5v2h-5zM364 210h4v2h-4zM104 212h2v3h-2zM440 212h5v2h-5zM804 212h2v2h-2zM629 213h2v2h-2zM590 214h4v1h-4zM651 214h2v2h-2zM165 215h3v2h-3zM532 215h2v3h-2zM452 216h3v1h-3zM734 216h3v1h-3zM365 217h2v2h-2zM99 218h4v1h-4zM148 219h3v1h-3zM208 219h2v3h-2zM350 220h3v1h-3zM739 220h4v1h-4zM746 220h2v3h-2zM16 221h3v2h-3zM263 221h2v3h-2zM335 221h2v3h-2zM644 221h2v2h-2zM99 222h3v1h-3zM247 222h5v2h-5zM458 222h4v1h-4zM464 222h3v1h-3zM343 224h4v2h-4zM572 224h3v1h-3zM686 224h2v3h-2zM249 226h3v2h-3zM539 227h3v2h-3zM169 228h4v2h-4zM287 228h5v2h-5zM250 229h2v2h-2zM363 229h4v2h-4zM418 230h2v2h-2zM568 230h4v2h-4zM21 231h4v2h-4zM635 232h4v2h-4zM12 233h3v1h-3zM136 233h2v2h-2zM445 233h2v2h-2zM800 233h4v2h-4zM299 234h3v2h-3zM322 234h3v2h-3zM216 235h2v2h-2zM329 235h4v2h-4zM622 235h4v1h-4zM647 235h4v2h-4zM43 236h5v2h-5zM530 236h4v1h-4zM36 237h2v2h-2zM357 237h2v2h-2zM409 237h4v2h-4zM765 237h5v2h-5zM638 238h3v2h-3zM460 239h4v1h-4zM744 239h4v2h-4zM280 241h4v1h-4zM511 241h4v2h-4zM619 241h2v3h-2zM708 242h2v2h-2zM106 243h3v2h-3zM480 243h3v2h-3zM103 244h3v2h-3zM116 245h4v2h-4zM253 245h3v2h-3zM485 245h5v2h-5zM312 246h5v2h-5zM463 246h5v2h-5zM245 247h3v2h-3zM783 247h5v2h-5zM178 248h3v1h-3zM751 248h4v2h-4zM491 249h3v2h-3zM554 249h3v2h-3zM334 250h4v1h-4zM402 251h4v2h-4zM373 252h5v2h-5zM180 253h2v3h-2zM413 253h2v2h-2zM536 253h3v2h-3zM551 253h3v1h-3zM751 253h2v2h-2zM268 254h4v2h-4zM423 254h3v2h-3zM444 254h3v2h-3zM16 255h3v1h-3zM312 255h3v2h-3zM593 255h3v1h-3zM61 256h2v3h-2zM352 256h4v2h-4zM483 256h5v2h-5zM59 257h2v2h-2zM71 257h3v2h-3zM223 259h4v1h-4zM360 259h3v1h-3zM267 261h4v2h-4zM620 261h2v2h-2zM647 261h3v2h-3zM106 262h3v2h-3zM809 262h3v2h-3zM94 263h4v2h-4zM109 263h5v2h-5zM410 263h3v2h-3zM513 263h2v3h-2zM522 263h4v2h-4zM628 263h3v2h-3zM678 263h2v3h-2zM365 264h5v2h-5zM5 265h3v2h-3zM79 265h3v1h-3zM148 265h2v2h-2zM223 265h4v2h-4zM429 265h3v1h-3zM656 265h3v1h-3zM137 267h4v2h-4zM729 268h3v2h-3zM393 269h4v2h-4zM68 270h2v2h-2zM140 270h3v2h-3zM241 270h3v2h-3zM306 271h2v2h-2zM366 272h4v2h-4zM812 272h3v1h-3zM310 274h3v2h-3zM509 274h4v2h-4zM69 275h2v2h-2zM146 276h5v2h-5zM369 277h4v1h-4zM459 277h5v2h-5zM812 277h3v1h-3zM455 278h4v1h-4zM178 279h3v2h-3zM221 279h4v2h-4zM589 279h3v2h-3zM81 280h3v1h-3zM688 280h2v3h-2zM230 281h2v3h-2zM361 281h3v2h-3zM119 282h3v2h-3zM173 283h2v2h-2zM340 283h4v1h-4zM605 283h2v2h-2zM79 284h3v1h-3zM713 286h4v2h-4zM165 287h4v1h-4zM86 288h4v2h-4zM521 288h3v1h-3zM634 288h4v1h-4zM67 289h4v2h-4zM327 291h3v2h-3zM368 291h5v2h-5zM314 292h4v1h-4zM390 293h3v2h-3zM94 294h3v2h-3zM139 294h2v3h-2zM454 294h4v1h-4zM540 294h3v2h-3zM350 295h3v2h-3zM204 296h4v1h-4zM754 296h3v2h-3zM81 297h3v1h-3zM348 298h2v2h-2zM773 298h4v1h-4zM179 299h3v2h-3zM496 299h4v1h-4zM258 300h4v1h-4zM335 300h3v2h-3zM385 300h3v2h-3zM6 301h3v2h-3zM126 301h4v1h-4zM264 301h3v2h-3zM362 301h3v2h-3zM412 301h3v1h-3zM496 302h3v2h-3zM427 303h4v2h-4zM747 303h3v1h-3zM192 304h3v2h-3zM157 305h2v2h-2zM343 305h5v2h-5zM371 305h2v2h-2zM454 305h3v2h-3zM489 305h4v2h-4zM681 305h3v1h-3zM367 306h4v2h-4zM424 306h5v2h-5zM671 306h4v1h-4zM45 307h4v1h-4zM514 307h4v2h-4zM707 308h2v2h-2zM755 308h4v1h-4zM540 309h5v2h-5zM726 309h2v3h-2zM32 311h3v1h-3zM167 311h5v2h-5zM340 311h3v1h-3zM356 311h4v1h-4zM479 311h5v2h-5zM571 312h3v2h-3zM670 312h3v2h-3zM61 314h4v1h-4zM380 314h2v2h-2zM223 315h3v1h-3zM404 315h2v2h-2zM717 315h2v2h-2zM295 316h3v2h-3zM457 317h2v3h-2zM67 318h2v3h-2zM393 318h3v2h-3zM479 318h3v1h-3zM726 318h5v2h-5zM589 319h4v1h-4zM413 320h3v2h-3zM462 320h3v2h-3zM681 320h2v3h-2zM339 321h3v1h-3zM521 321h2v3h-2zM20 322h5v2h-5zM782 323h2v2h-2zM619 324h4v1h-4zM754 324h2v3h-2zM806 324h3v2h-3zM273 325h3v1h-3zM407 325h2v3h-2zM493 325h2v3h-2zM535 325h4v1h-4zM246 326h2v3h-2zM8 327h3v1h-3zM568 327h5v2h-5zM679 327h5v2h-5zM792 327h4v1h-4zM547 329h3v1h-3zM206 330h4v1h-4zM343 330h5v2h-5zM317 331h3v1h-3zM404 331h4v1h-4zM713 331h3v2h-3zM79 332h3v2h-3zM129 333h3v1h-3zM278 333h5v2h-5zM458 333h3v1h-3zM15 334h4v2h-4zM550 334h2v3h-2zM230 335h2v2h-2zM458 335h3v1h-3zM439 336h2v3h-2zM499 336h4v1h-4zM622 336h2v3h-2zM697 336h4v1h-4zM765 336h3v2h-3zM287 337h3v2h-3zM678 337h2v3h-2zM318 338h3v1h-3zM122 339h5v2h-5zM763 339h2v3h-2zM786 339h5v2h-5zM113 340h4v1h-4zM330 340h3v2h-3zM352 340h3v2h-3zM795 340h3v2h-3zM371 342h5v2h-5zM604 342h5v2h-5zM724 342h2v3h-2zM763 343h2v3h-2zM41 344h4v1h-4zM373 344h4v1h-4zM388 344h4v2h-4zM89 345h3v1h-3zM197 345h3v1h-3zM208 345h3v1h-3zM561 345h2v2h-2zM577 345h3v2h-3zM164 346h4v1h-4zM336 346h3v2h-3zM499 346h2v3h-2zM743 346h4v1h-4zM347 347h5v2h-5zM350 347h3v2h-3zM162 348h4v1h-4zM417 348h4v2h-4zM763 348h4v1h-4zM119 349h3v2h-3zM168 349h5v2h-5zM442 349h4v2h-4zM476 349h2v2h-2zM563 349h2v2h-2zM548 351h3v1h-3zM422 352h5v2h-5zM670 352h3v2h-3zM695 352h3v1h-3zM100 353h3v2h-3zM231 353h3v2h-3zM118 354h3v2h-3zM68 355h3v2h-3zM520 355h3v1h-3zM567 355h5v2h-5zM84 356h2v3h-2zM765 356h3v1h-3zM771 356h5v2h-5zM29 357h2v3h-2zM173 357h2v2h-2zM709 357h4v1h-4zM782 357h5v2h-5zM77 358h3v2h-3zM62 361h2v2h-2zM74 361h3v2h-3zM366 361h3v2h-3zM489 361h3v1h-3zM807 361h4v1h-4zM245 362h2v3h-2zM796 362h3v1h-3zM332 363h4v2h-4zM427 363h4v2h-4zM200 364h2v3h-2zM317 364h3v2h-3zM814 364h4v2h-4zM324 365h5v2h-5zM575 365h2v3h-2zM224 366h2v3h-2zM2 367h2v2h-2zM469 368h4v2h-4zM630 368h3v2h-3zM706 368h3v2h-3zM740 368h3v2h-3zM335 369h3v2h-3zM466 369h3v2h-3zM624 369h3v2h-3zM180 370h2v2h-2zM319 370h2v3h-2zM390 371h5v2h-5zM475 371h2v2h-2zM75 372h5v2h-5zM225 372h3v2h-3zM277 372h4v1h-4zM562 372h3v2h-3zM731 372h2v3h-2zM24 373h4v2h-4zM93 373h3v1h-3zM258 373h4v1h-4zM435 373h2v2h-2zM651 373h2v2h-2zM676 374h4v2h-4zM127 376h3v1h-3zM390 376h3v2h-3zM414 376h3v2h-3zM285 377h3v1h-3zM376 377h4v2h-4zM759 377h5v2h-5zM272 378h3v1h-3zM455 378h5v2h-5zM750 378h3v2h-3zM62 379h3v2h-3zM542 379h4v2h-4zM794 379h3v1h-3zM813 379h5v2h-5zM305 380h5v2h-5zM614 380h5v2h-5zM410 381h3v2h-3zM468 381h5v2h-5zM618 381h3v2h-3zM389 382h4v1h-4zM530 382h4v1h-4zM379 383h3v1h-3zM584 383h4v1h-4zM8 384h4v1h-4zM89 385h2v3h-2zM522 385h3v1h-3zM471 387h4v2h-4zM480 387h3v2h-3zM505 387h4v2h-4zM128 389h2v2h-2zM385 389h2v3h-2zM494 389h3v2h-3zM526 389h5v2h-5zM577 389h4v2h-4zM466 390h3v2h-3zM539 390h2v3h-2zM792 390h3v2h-3zM523 391h2v3h-2zM538 391h4v2h-4zM757 391h5v2h-5zM224 392h3v2h-3zM499 393h3v2h-3zM584 393h4v2h-4zM51 394h2v3h-2zM479 394h5v2h-5zM534 394h2v2h-2zM551 394h3v1h-3zM133 395h3v1h-3zM141 395h4v1h-4zM325 395h5v2h-5zM413 395h4v2h-4zM447 395h5v2h-5zM570 395h5v2h-5zM17 396h4v2h-4zM165 396h5v2h-5zM269 397h4v1h-4zM632 397h5v2h-5zM689 397h2v3h-2zM705 397h3v1h-3zM731 398h3v2h-3zM168 400h3v2h-3zM361 400h2v3h-2zM376 400h3v1h-3zM702 400h3v1h-3zM27 401h3v2h-3zM455 401h4v2h-4zM107 402h3v2h-3zM164 403h3v2h-3zM324 403h3v2h-3zM328 403h4v1h-4zM77 406h3v1h-3zM241 407h2v2h-2zM492 408h2v3h-2zM510 408h3v1h-3zM705 408h2v3h-2zM319 409h2v2h-2zM224 410h2v2h-2zM445 412h4v1h-4zM746 412h3v2h-3zM794 412h3v2h-3zM148 413h2v3h-2zM616 414h3v1h-3zM577 416h3v2h-3zM499 417h4v1h-4zM780 417h5v2h-5zM89 418h3v2h-3zM423 418h2v2h-2zM228 419h5v2h-5zM362 420h3v2h-3zM476 420h2v3h-2zM25 421h4v1h-4zM427 422h4v1h-4zM311 424h3v2h-3zM320 426h4v1h-4zM527 426h2v3h-2zM601 426h2v3h-2zM144 427h4v1h-4zM161 427h5v2h-5zM207 427h4v2h-4zM779 427h3v1h-3zM357 428h3v1h-3zM474 428h3v2h-3zM543 428h3v1h-3zM213 429h3v1h-3zM745 429h3v1h-3zM575 432h2v3h-2zM593 434h4v1h-4zM606 434h2v3h-2zM326 435h3v1h-3zM585 436h3v2h-3zM674 436h4v2h-4zM599 437h3v2h-3zM72 438h4v1h-4zM420 438h5v2h-5zM414 439h3v1h-3zM414 440h4v2h-4zM157 441h3v2h-3zM331 441h3v2h-3zM388 441h5v2h-5zM699 442h3v2h-3zM796 442h3v2h-3zM8 444h2v3h-2zM115 444h4v1h-4zM200 444h3v2h-3zM234 444h5v2h-5zM417 444h3v2h-3zM566 444h4v1h-4zM304 446h3v1h-3zM546 446h2v2h-2zM323 447h3v2h-3zM351 447h4v1h-4zM33 448h5v2h-5zM37 448h3v2h-3zM324 448h5v2h-5zM724 448h3v2h-3zM126 449h2v3h-2zM555 449h2v2h-2zM254 450h4v2h-4zM749 450h2v2h-2zM279 451h3v2h-3zM814 451h4v2h-4zM291 452h3v1h-3zM474 452h2v3h-2zM26 453h3v1h-3zM322 453h4v1h-4zM662 454h3v2h-3zM152 455h3v2h-3zM803 455h3v2h-3zM89 456h3v2h-3zM140 457h4v1h-4zM323 457h2v2h-2zM335 457h2v3h-2zM477 457h3v2h-3zM164 458h3v2h-3zM426 460h2v2h-2zM311 461h2v3h-2zM388 461h3v2h-3zM613 461h4v1h-4zM186 462h4v1h-4zM218 462h4v1h-4zM366 462h4v1h-4zM730 462h2v3h-2zM389 463h4v1h-4zM323 464h4v1h-4zM462 466h2v3h-2zM487 466h3v2h-3zM721 466h4v2h-4zM266 467h4v2h-4zM274 467h5v2h-5zM492 467h2v2h-2zM55 468h3v2h-3zM608 468h4v1h-4zM783 468h2v3h-2zM366 470h4v1h-4zM651 470h2v2h-2zM35 471h3v1h-3zM453 471h2v2h-2zM529 471h3v1h-3zM13 472h5v2h-5zM473 472h2v3h-2zM515 472h4v2h-4zM489 473h2v2h-2zM560 474h3v1h-3zM597 474h3v2h-3zM377 475h4v1h-4zM77 476h4v2h-4zM183 476h3v2h-3zM674 476h5v2h-5zM402 477h2v3h-2zM808 477h4v2h-4zM325 478h2v2h-2zM746 479h4v1h-4zM30 480h3v2h-3zM599 480h4v1h-4zM775 480h2v3h-2zM193 482h3v1h-3zM527 482h2v3h-2zM688 482h3v2h-3zM730 482h2v3h-2zM15 483h2v2h-2zM804 483h2v2h-2zM98 484h4v1h-4zM325 484h4v2h-4zM391 484h4v2h-4zM426 484h2v3h-2zM99 485h3v2h-3zM99 485h5v2h-5zM384 485h2v3h-2zM647 485h3v1h-3zM62 487h2v2h-2zM461 487h4v2h-4zM547 487h4v1h-4zM627 487h2v2h-2zM649 487h2v2h-2zM356 488h5v2h-5zM400 488h2v3h-2zM479 488h3v1h-3zM560 488h4v1h-4zM705 488h2v2h-2zM185 489h4v1h-4zM283 489h3v2h-3zM318 489h3v2h-3zM481 489h2v2h-2zM613 489h3v2h-3zM727 489h3v2h-3zM263 490h3v2h-3zM300 490h3v2h-3zM523 490h2v2h-2zM655 491h3v1h-3zM555 493h3v2h-3zM764 493h5v2h-5zM54 494h3v1h-3zM477 494h2v2h-2zM634 494h5v2h-5zM207 495h2v2h-2zM371 495h5v2h-5zM495 495h5v2h-5zM690 495h3v2h-3zM215 497h4v2h-4zM281 497h3v2h-3zM763 498h4v2h-4zM334 500h4v1h-4zM558 500h3v1h-3zM731 500h3v1h-3zM293 501h3v1h-3zM349 502h2v2h-2zM695 502h2v3h-2zM4 503h2v2h-2zM576 503h3v1h-3zM98 504h3v2h-3zM325 505h3v2h-3zM573 505h4v2h-4zM172 506h3v1h-3zM565 506h4v1h-4zM200 507h3v1h-3zM368 508h5v2h-5zM729 508h3v2h-3zM87 509h2v3h-2zM373 509h2v3h-2zM680 509h3v2h-3zM37 510h4v2h-4zM513 511h4v2h-4zM170 512h3v1h-3zM190 512h2v3h-2zM571 512h2v2h-2zM208 513h4v1h-4zM695 514h5v2h-5zM30 515h4v2h-4zM183 517h3v1h-3zM739 517h2v2h-2zM177 518h4v1h-4zM649 518h3v2h-3zM658 518h3v2h-3zM217 519h4v2h-4zM220 519h2v2h-2zM611 519h3v2h-3zM20 520h2v2h-2zM160 520h2v3h-2zM221 520h3v1h-3zM582 520h3v1h-3zM365 521h5v2h-5zM374 521h2v2h-2zM611 521h4v1h-4zM36 522h4v1h-4zM267 522h4v2h-4zM678 522h2v2h-2zM16 523h3v1h-3zM175 523h2v2h-2zM256 524h2v2h-2zM267 524h2v3h-2zM563 524h3v2h-3zM735 524h5v2h-5zM40 525h3v2h-3zM275 525h2v2h-2zM384 525h2v3h-2zM396 525h4v2h-4zM673 525h4v1h-4zM461 526h4v1h-4zM515 526h2v3h-2zM539 528h3v2h-3zM795 528h4v2h-4zM146 529h5v2h-5zM655 529h3v2h-3zM807 529h3v2h-3zM449 530h2v2h-2zM704 530h2v3h-2zM400 531h3v1h-3zM456 531h3v2h-3zM675 531h5v2h-5zM134 532h3v2h-3zM483 532h2v3h-2zM766 532h4v2h-4zM773 532h3v2h-3zM46 533h3v2h-3zM254 533h4v2h-4zM377 533h4v2h-4zM391 533h2v2h-2zM770 533h3v1h-3zM60 534h3v2h-3zM424 534h4v1h-4zM372 536h2v2h-2zM142 537h3v1h-3zM674 538h4v1h-4zM382 540h5v2h-5zM75 541h5v2h-5zM138 541h3v2h-3zM352 541h3v2h-3zM628 541h3v1h-3zM630 541h5v2h-5zM648 541h5v2h-5zM267 542h3v2h-3zM714 542h4v2h-4zM753 542h4v2h-4zM102 543h3v1h-3zM237 543h2v3h-2zM401 543h4v2h-4zM478 543h3v2h-3zM632 543h3v2h-3zM21 545h3v1h-3zM205 545h3v2h-3zM352 545h3v2h-3zM590 545h2v2h-2zM412 546h2v2h-2zM538 546h3v2h-3zM779 546h2v3h-2zM28 548h3v2h-3zM402 548h4v1h-4zM446 548h2v3h-2zM221 550h4v1h-4zM432 550h3v1h-3zM114 551h4v1h-4zM184 551h3v1h-3zM147 552h4v2h-4zM675 553h4v1h-4zM684 553h3v2h-3zM690 555h3v2h-3zM754 555h4v2h-4zM63 556h4v1h-4zM678 556h3v1h-3zM156 557h4v1h-4zM160 557h3v2h-3zM197 557h4v1h-4zM296 557h3v2h-3zM813 557h3v1h-3zM398 558h2v2h-2zM569 558h3v2h-3zM86 559h4v1h-4zM146 559h4v2h-4zM148 560h2v2h-2zM351 560h3v2h-3zM42 561h4v1h-4zM544 561h3v2h-3zM730 561h3v2h-3zM789 562h3v1h-3zM216 564h3v1h-3zM438 564h3v1h-3zM586 564h3v1h-3zM608 564h2v3h-2zM440 565h2v2h-2zM663 565h4v2h-4zM307 566h3v2h-3zM40 567h4v2h-4zM65 567h3v2h-3zM536 567h4v2h-4zM676 568h4v2h-4zM765 568h4v2h-4zM166 569h3v1h-3zM505 569h3v1h-3zM611 569h5v2h-5zM380 570h2v2h-2zM40 571h3v1h-3zM81 572h3v2h-3zM91 572h3v1h-3zM301 572h2v2h-2zM643 572h3v2h-3zM496 573h3v2h-3zM142 574h3v2h-3zM276 574h3v1h-3zM205 575h3v2h-3zM308 575h2v2h-2zM416 575h2v2h-2zM304 576h2v3h-2zM532 576h2v3h-2zM716 576h2v2h-2zM275 578h2v2h-2zM336 578h3v2h-3zM638 578h2v3h-2zM684 578h4v1h-4zM532 580h4v1h-4zM87 581h3v2h-3zM264 581h4v2h-4zM628 581h3v1h-3zM156 582h2v3h-2zM357 582h3v2h-3zM555 582h3v1h-3zM755 582h5v2h-5zM60 583h3v2h-3zM100 583h3v1h-3zM271 584h2v3h-2zM182 585h3v2h-3zM256 585h3v2h-3zM383 585h5v2h-5zM199 586h5v2h-5zM591 586h3v2h-3zM47 587h4v1h-4zM551 589h4v1h-4zM677 589h3v2h-3zM206 590h4v1h-4zM604 590h4v2h-4zM463 591h4v2h-4zM664 591h3v1h-3zM42 592h3v2h-3zM69 592h4v1h-4zM192 592h4v2h-4zM405 592h4v1h-4zM551 592h2v3h-2zM660 592h5v2h-5zM771 593h2v2h-2zM379 595h4v2h-4zM418 595h3v2h-3zM719 596h4v2h-4zM319 597h3v2h-3zM562 597h3v2h-3zM159 598h5v2h-5zM738 598h3v1h-3zM95 599h2v3h-2zM228 599h3v2h-3zM405 599h3v1h-3zM298 600h4v2h-4zM61 603h3v2h-3zM411 604h3v1h-3zM461 605h2v2h-2zM472 605h4v2h-4zM504 605h3v2h-3zM200 606h3v1h-3zM477 606h5v2h-5zM306 607h3v1h-3zM24 608h4v1h-4zM183 608h4v2h-4zM347 608h4v2h-4zM739 608h3v1h-3zM199 610h5v2h-5zM726 610h3v2h-3zM106 611h3v2h-3zM477 612h4v2h-4zM405 613h3v2h-3zM588 613h4v1h-4zM763 613h2v3h-2zM548 614h4v1h-4zM238 615h5v2h-5zM510 615h3v2h-3zM520 615h4v1h-4zM694 615h5v2h-5zM702 615h2v2h-2zM770 615h5v2h-5zM273 616h2v3h-2zM325 616h4v2h-4zM476 616h2v3h-2zM715 616h3v1h-3zM815 616h3v2h-3zM512 617h2v2h-2zM700 617h5v2h-5zM60 618h4v1h-4zM227 618h3v2h-3zM373 618h3v2h-3zM754 618h4v2h-4zM89 620h4v2h-4zM748 620h2v2h-2zM434 621h3v1h-3zM65 622h3v2h-3zM237 622h4v1h-4zM339 622h2v3h-2zM514 622h3v2h-3zM585 622h2v2h-2zM74 624h3v2h-3zM97 625h4v2h-4zM118 625h4v1h-4zM298 625h4v1h-4zM588 626h2v3h-2zM679 626h3v2h-3zM773 626h5v2h-5zM68 627h3v2h-3zM592 627h4v2h-4zM273 628h4v2h-4zM340 628h3v2h-3zM34 629h5v2h-5zM349 629h3v2h-3zM344 630h3v2h-3zM427 630h3v2h-3zM730 631h3v2h-3zM31 632h4v2h-4zM116 632h2v2h-2zM224 632h5v2h-5zM579 632h2v3h-2zM627 632h3v1h-3zM704 632h3v2h-3zM362 633h4v1h-4zM549 633h5v2h-5zM420 634h3v2h-3zM713 635h3v1h-3zM192 636h3v2h-3zM569 636h3v2h-3zM594 636h2v3h-2zM122 637h3v2h-3zM156 637h3v2h-3zM461 637h5v2h-5zM368 638h2v3h-2zM85 639h4v2h-4zM158 639h5v2h-5zM254 639h2v2h-2zM486 640h3v2h-3zM558 640h4v1h-4zM628 640h5v2h-5zM519 641h5v2h-5zM27 642h4v1h-4zM66 642h3v2h-3zM120 642h3v2h-3zM167 643h2v3h-2zM178 644h3v2h-3zM479 644h2v2h-2zM744 644h3v1h-3zM642 645h4v1h-4zM815 645h4v2h-4zM138 646h3v1h-3zM122 647h2v3h-2zM177 647h2v3h-2zM78 648h3v2h-3zM201 648h3v2h-3zM39 649h4v2h-4zM559 649h2v2h-2zM16 650h5v2h-5zM48 651h3v1h-3zM236 651h3v2h-3zM437 652h4v1h-4zM533 652h2v3h-2zM388 654h4v2h-4zM478 655h2v2h-2zM780 655h2v3h-2zM27 656h2v3h-2zM785 656h2v3h-2zM251 658h2v3h-2zM563 659h3v2h-3zM73 660h2v2h-2zM492 660h2v3h-2zM580 660h3v2h-3zM793 660h3v1h-3zM179 661h5v2h-5zM240 661h3v2h-3zM341 661h3v2h-3zM310 662h4v2h-4zM316 662h4v2h-4zM55 663h4v1h-4zM152 663h4v1h-4zM261 663h5v2h-5zM576 663h2v2h-2zM747 663h5v2h-5zM31 664h4v2h-4zM185 664h3v2h-3zM39 665h2v3h-2zM254 666h3v2h-3zM542 666h3v2h-3zM206 667h4v1h-4zM496 667h3v1h-3zM555 667h2v3h-2zM190 668h3v2h-3zM218 668h3v2h-3zM377 668h4v2h-4zM417 668h5v2h-5zM525 668h5v2h-5zM645 668h3v2h-3zM240 669h4v1h-4zM360 669h2v2h-2zM377 669h3v2h-3zM192 670h4v1h-4zM232 670h4v2h-4zM268 670h4v1h-4zM544 670h5v2h-5zM644 670h4v2h-4zM729 670h3v2h-3zM802 670h4v1h-4zM336 671h5v2h-5zM496 671h3v2h-3zM456 672h4v2h-4zM405 673h4v2h-4zM276 674h4v1h-4zM347 674h3v2h-3zM549 674h2v3h-2zM753 674h2v3h-2zM467 675h3v2h-3zM508 675h3v2h-3zM139 677h4v2h-4zM704 679h2v2h-2zM429 680h5v2h-5zM109 681h2v3h-2zM387 681h4v2h-4zM143 682h5v2h-5zM458 682h2v2h-2zM421 684h3v2h-3zM697 684h3v2h-3zM60 685h4v2h-4zM343 685h3v2h-3zM471 685h2v3h-2zM491 685h5v2h-5zM642 685h3v2h-3zM728 685h3v1h-3zM246 686h2v2h-2zM547 686h5v2h-5zM197 687h3v2h-3zM495 687h4v2h-4zM102 688h2v3h-2zM153 688h4v2h-4zM543 688h4v2h-4zM610 688h2v3h-2zM693 688h2v3h-2zM31 689h2v2h-2zM173 689h4v2h-4zM351 689h3v2h-3zM524 689h3v2h-3zM188 690h3v2h-3zM227 690h2v2h-2zM418 690h3v2h-3zM749 690h3v1h-3zM104 691h2v2h-2zM108 691h3v2h-3zM386 691h2v2h-2zM307 693h3v1h-3zM590 694h5v2h-5zM688 694h2v2h-2zM814 694h3v1h-3zM318 695h3v1h-3zM53 696h3v2h-3zM401 696h2v3h-2zM126 697h4v2h-4zM811 697h3v2h-3zM231 699h3v2h-3zM702 699h3v2h-3zM88 700h2v2h-2zM166 700h3v1h-3zM714 701h2v3h-2zM471 702h4v1h-4zM484 702h3v1h-3zM87 703h3v2h-3zM481 703h5v2h-5zM530 703h3v2h-3zM277 704h3v2h-3zM530 704h3v2h-3zM668 705h2v3h-2zM241 706h3v1h-3zM255 706h4v2h-4zM721 706h4v1h-4zM766 706h2v3h-2zM128 709h3v2h-3zM432 709h4v1h-4zM146 710h5v2h-5zM247 710h4v1h-4zM727 711h5v2h-5zM651 712h3v2h-3zM804 712h3v1h-3zM121 713h4v2h-4zM467 713h3v2h-3zM99 714h2v2h-2zM548 714h2v3h-2zM35 715h5v2h-5zM577 715h4v2h-4zM483 716h3v1h-3zM484 717h3v2h-3zM504 717h4v1h-4zM326 718h2v2h-2zM619 718h5v2h-5zM699 718h4v2h-4zM167 719h4v1h-4zM20 720h2v2h-2zM128 720h4v2h-4zM380 720h2v2h-2zM92 721h5v2h-5zM546 721h2v3h-2zM520 723h5v2h-5zM128 724h3v2h-3zM51 725h4v2h-4zM348 725h2v2h-2zM481 725h3v1h-3zM106 726h2v2h-2zM542 726h4v2h-4zM330 727h2v2h-2zM484 728h3v2h-3zM720 728h3v2h-3zM537 729h2v2h-2zM674 729h3v2h-3zM696 729h5v2h-5zM256 731h3v2h-3zM311 732h3v2h-3zM635 732h4v2h-4zM433 733h4v1h-4zM229 734h2v3h-2zM751 734h3v1h-3zM765 734h3v2h-3zM173 735h3v2h-3zM191 735h3v2h-3zM448 735h4v1h-4zM23 736h3v2h-3zM404 736h3v1h-3zM353 738h2v3h-2zM741 738h2v2h-2zM404 739h2v2h-2zM197 740h4v2h-4zM435 740h3v2h-3zM408 741h4v2h-4zM445 742h3v2h-3zM25 743h3v2h-3zM562 743h4v1h-4zM576 743h5v2h-5zM797 745h3v2h-3zM245 747h3v1h-3zM769 747h5v2h-5zM272 748h3v1h-3zM489 748h3v2h-3zM44 749h3v2h-3zM49 749h2v3h-2zM339 749h5v2h-5zM558 749h4v2h-4zM581 749h3v2h-3zM619 749h2v3h-2zM164 750h2v2h-2zM165 750h2v2h-2zM310 750h4v2h-4zM380 750h3v1h-3zM673 750h3v2h-3zM772 750h4v1h-4zM314 751h2v3h-2zM334 752h2v2h-2zM395 752h5v2h-5zM741 752h4v1h-4zM104 753h2v3h-2zM111 753h3v1h-3zM53 754h2v2h-2zM758 754h5v2h-5zM758 754h5v2h-5zM23 755h2v2h-2zM568 755h3v2h-3zM601 755h5v2h-5zM751 755h3v2h-3zM765 755h3v2h-3zM178 756h3v2h-3zM562 756h4v1h-4zM664 756h3v1h-3zM22 757h4v2h-4zM70 758h5v2h-5zM428 758h2v2h-2zM315 759h3v2h-3zM406 759h5v2h-5zM798 759h3v2h-3zM193 760h2v2h-2zM203 760h2v2h-2zM344 760h3v1h-3zM452 760h4v2h-4zM571 760h3v1h-3zM164 761h4v2h-4zM245 761h2v2h-2zM455 762h5v2h-5zM552 762h2v2h-2zM559 762h2v3h-2zM581 762h3v1h-3zM686 762h4v1h-4zM729 762h4v1h-4zM529 763h4v2h-4zM512 765h3v1h-3z"/><path fill="#121290" d="M322 18h3v2h-3zM44 19h2v3h-2zM206 21h3v2h-3zM665 22h3v1h-3zM142 28h5v2h-5zM404 29h2v2h-2zM105 31h3v1h-3zM618 33h5v2h-5zM506 39h3v2h-3zM219 40h3v1h-3zM396 40h4v1h-4zM799 40h2v2h-2zM108 43h3v2h-3zM284 43h3v1h-3zM621 47h4v1h-4zM302 48h5v2h-5zM132 50h5v2h-5zM339 50h4v2h-4zM227 51h4v2h-4zM112 52h3v2h-3zM250 52h4v1h-4zM695 52h4v1h-4zM176 56h2v3h-2zM9 59h3v2h-3zM711 60h2v2h-2zM63 63h4v2h-4zM290 66h3v1h-3zM272 67h4v2h-4zM612 67h2v2h-2zM659 70h3v1h-3zM256 72h5v2h-5zM751 75h3v2h-3zM299 77h2v2h-2zM392 77h3v1h-3zM112 78h3v2h-3zM741 78h3v1h-3zM356 80h3v1h-3zM409 80h3v2h-3zM764 81h4v2h-4zM513 82h2v3h-2zM26 84h4v2h-4zM629 85h5v2h-5zM725 85h5v2h-5zM624 86h3v2h-3zM190 87h4v2h-4zM666 89h4v1h-4zM679 90h5v2h-5zM621 92h4v2h-4zM3 98h4v1h-4zM271 101h2v2h-2zM84 107h3v1h-3zM440 108h2v2h-2zM315 110h5v2h-5zM772 111h5v2h-5zM436 116h3v1h-3zM59 117h2v3h-2zM380 119h3v2h-3zM446 120h5v2h-5zM549 120h3v2h-3zM692 120h3v2h-3zM259 122h3v2h-3zM278 122h3v2h-3zM179 123h5v2h-5zM243 124h3v1h-3zM436 124h4v1h-4zM747 126h3v2h-3zM298 127h5v2h-5zM716 131h4v1h-4zM612 132h2v3h-2zM750 132h3v1h-3zM45 134h3v2h-3zM760 138h4v2h-4zM393 139h3v1h-3zM369 140h3v2h-3zM409 140h4v2h-4zM630 141h2v3h-2zM139 142h5v2h-5zM376 145h3v2h-3zM611 146h3v2h-3zM198 151h5v2h-5zM152 152h2v3h-2zM21 154h2v3h-2zM574 156h4v1h-4zM552 157h4v2h-4zM643 158h2v3h-2zM297 159h3v2h-3zM485 160h3v2h-3zM597 160h3v2h-3zM713 161h2v3h-2zM35 165h4v2h-4zM695 165h4v1h-4zM292 166h3v2h-3zM297 166h4v1h-4zM253 167h2v2h-2zM361 168h4v2h-4zM222 171h2v2h-2zM25 172h2v2h-2zM3 173h2v2h-2zM292 173h3v1h-3zM611 173h2v3h-2zM321 174h3v1h-3zM740 176h2v3h-2zM748 178h4v2h-4zM570 179h2v2h-2zM716 188h4v2h-4zM77 190h3v2h-3zM481 190h4v2h-4zM763 195h3v2h-3zM176 197h4v2h-4zM660 197h4v2h-4zM763 199h3v1h-3zM809 199h3v2h-3zM27 202h3v1h-3zM246 202h3v2h-3zM103 205h5v2h-5zM709 205h3v2h-3zM713 205h3v2h-3zM323 206h5v2h-5zM376 207h3v1h-3zM748 207h3v2h-3zM59 208h2v3h-2zM572 210h2v2h-2zM653 210h5v2h-5zM44 212h3v2h-3zM132 213h4v1h-4zM556 213h4v2h-4zM633 213h2v3h-2zM694 213h2v2h-2zM527 218h3v1h-3zM499 219h2v2h-2zM746 219h3v2h-3zM746 219h4v2h-4zM764 220h2v3h-2zM694 221h2v2h-2zM40 223h5v2h-5zM263 223h3v2h-3zM45 225h3v2h-3zM34 226h5v2h-5zM333 226h3v2h-3zM369 228h2v2h-2zM680 230h4v1h-4zM42 232h2v2h-2zM228 234h5v2h-5zM790 235h3v1h-3zM510 238h3v1h-3zM624 238h2v3h-2zM693 238h3v2h-3zM374 239h3v2h-3zM562 239h2v3h-2zM611 239h3v1h-3zM618 240h4v2h-4zM527 241h3v1h-3zM539 241h3v2h-3zM584 243h4v2h-4zM158 247h5v2h-5zM533 247h3v1h-3zM542 247h3v2h-3zM611 247h3v2h-3zM179 248h4v1h-4zM277 248h2v3h-2zM549 254h4v2h-4zM460 258h4v1h-4zM444 259h4v1h-4zM683 259h4v2h-4zM654 260h4v2h-4zM345 264h5v2h-5zM499 265h3v1h-3zM21 266h2v2h-2zM34 266h3v1h-3zM413 270h2v2h-2zM359 272h4v2h-4zM682 274h3v2h-3zM98 275h2v3h-2zM331 275h3v2h-3zM649 275h2v3h-2zM712 277h4v1h-4zM30 278h4v2h-4zM349 280h4v2h-4zM523 282h3v2h-3zM243 284h3v2h-3zM638 284h4v1h-4zM411 287h3v2h-3zM459 287h5v2h-5zM488 290h3v1h-3zM283 291h4v1h-4zM762 292h3v2h-3zM500 298h3v2h-3zM423 300h2v3h-2zM727 301h3v2h-3zM471 302h2v2h-2zM302 303h3v2h-3zM399 305h4v1h-4zM761 307h3v1h-3zM772 308h3v2h-3zM356 311h4v2h-4zM144 313h3v2h-3zM224 317h3v2h-3zM330 317h4v2h-4zM375 319h3v2h-3zM547 319h3v1h-3zM75 320h3v2h-3zM286 320h3v2h-3zM595 320h3v2h-3zM689 320h4v1h-4zM316 326h3v1h-3zM737 326h5v2h-5zM98 328h5v2h-5zM434 328h5v2h-5zM393 332h4v2h-4zM589 332h3v1h-3zM424 335h5v2h-5zM451 335h2v3h-2zM623 335h4v2h-4zM452 336h3v2h-3zM470 338h4v1h-4zM603 338h4v1h-4zM52 342h4v2h-4zM159 342h3v2h-3zM532 343h4v2h-4zM548 344h4v1h-4zM178 349h3v2h-3zM431 351h4v2h-4zM514 352h4v2h-4zM372 353h2v3h-2zM451 353h4v1h-4zM791 353h2v3h-2zM233 354h2v3h-2zM484 354h3v1h-3zM614 354h5v2h-5zM557 355h4v2h-4zM80 357h2v2h-2zM192 358h5v2h-5zM288 359h4v2h-4zM573 360h3v1h-3zM19 361h2v2h-2zM678 361h5v2h-5zM212 364h4v1h-4zM530 365h5v2h-5zM551 365h4v1h-4zM625 366h3v2h-3zM664 366h4v1h-4zM656 368h3v2h-3zM237 369h4v1h-4zM109 370h3v1h-3zM518 370h5v2h-5zM414 372h3v1h-3zM707 372h3v2h-3zM648 373h5v2h-5zM740 374h2v3h-2zM263 376h3v2h-3zM456 376h3v1h-3zM473 380h2v2h-2zM122 382h3v1h-3zM479 382h3v2h-3zM328 383h3v2h-3zM392 385h3v1h-3zM448 385h3v2h-3zM651 385h5v2h-5zM685 392h5v2h-5zM163 396h2v2h-2zM318 397h4v1h-4zM423 404h2v2h-2zM11 406h2v2h-2zM233 406h2v3h-2zM568 407h5v2h-5zM591 407h3v2h-3zM734 408h2v3h-2zM545 409h4v2h-4zM718 409h3v2h-3zM25 416h3v2h-3zM192 416h2v3h-2zM102 417h5v2h-5zM166 419h3v2h-3zM579 419h3v2h-3zM776 420h3v2h-3zM237 422h4v1h-4zM719 422h3v1h-3zM509 424h3v1h-3zM727 425h3v2h-3zM554 426h3v1h-3zM154 427h5v2h-5zM196 427h4v1h-4zM537 429h4v1h-4zM768 431h3v1h-3zM388 432h2v2h-2zM522 432h4v2h-4zM13 436h5v2h-5zM706 437h4v1h-4zM520 440h3v2h-3zM723 442h3v2h-3zM429 445h5v2h-5zM436 445h4v2h-4zM364 447h4v2h-4zM267 448h3v2h-3zM267 450h3v2h-3zM187 454h4v1h-4zM687 456h4v2h-4zM736 457h4v2h-4zM723 458h3v2h-3zM256 461h2v2h-2zM82 462h4v2h-4zM33 464h4v1h-4zM71 464h3v2h-3zM646 465h2v3h-2zM449 471h5v2h-5zM516 471h4v1h-4zM532 473h4v2h-4zM576 475h2v2h-2zM304 476h4v2h-4zM446 478h4v2h-4zM766 478h3v1h-3zM23 479h2v2h-2zM240 479h3v2h-3zM163 481h2v3h-2zM313 481h4v1h-4zM441 481h5v2h-5zM596 482h2v3h-2zM337 488h2v3h-2zM142 490h3v2h-3zM275 491h3v2h-3zM683 491h2v2h-2zM669 492h4v2h-4zM540 496h2v2h-2zM366 497h2v3h-2zM422 499h3v1h-3zM481 499h3v2h-3zM639 500h2v3h-2zM512 501h3v2h-3zM241 502h2v3h-2zM225 503h3v2h-3zM413 503h3v1h-3zM180 504h2v2h-2zM373 504h2v3h-2zM341 508h3v1h-3zM297 509h3v2h-3zM532 509h3v2h-3zM29 511h2v2h-2zM238 511h3v1h-3zM37 514h4v2h-4zM102 517h2v3h-2zM351 517h2v3h-2zM787 518h2v2h-2zM368 520h2v3h-2zM539 521h5v2h-5zM567 522h3v2h-3zM210 524h4v1h-4zM128 525h5v2h-5zM739 526h4v2h-4zM82 529h3v2h-3zM102 529h4v2h-4zM566 532h2v3h-2zM606 535h3v2h-3zM307 536h3v2h-3zM465 538h5v2h-5zM471 538h5v2h-5zM732 540h3v2h-3zM399 541h3v2h-3zM625 543h2v2h-2zM79 547h2v3h-2zM166 547h2v2h-2zM399 547h3v1h-3zM597 547h2v3h-2zM206 550h4v1h-4zM110 552h4v2h-4zM535 552h3v1h-3zM702 552h4v1h-4zM351 554h5v2h-5zM8 556h3v2h-3zM666 557h2v3h-2zM36 558h4v2h-4zM70 559h2v3h-2zM494 561h3v2h-3zM746 561h3v1h-3zM398 563h3v2h-3zM441 563h2v2h-2zM505 564h2v2h-2zM231 566h5v2h-5zM793 566h3v1h-3zM227 569h2v2h-2zM707 569h4v2h-4zM60 571h4v2h-4zM476 571h2v2h-2zM369 573h4v1h-4zM654 577h2v2h-2zM812 577h2v3h-2zM430 578h4v2h-4zM667 579h5v2h-5zM57 584h2v2h-2zM707 584h4v2h-4zM158 588h4v2h-4zM303 588h3v2h-3zM255 589h2v2h-2zM242 592h2v2h-2zM244 592h3v2h-3zM381 597h5v2h-5zM250 599h3v2h-3zM596 603h4v1h-4zM381 604h4v2h-4zM655 604h4v1h-4zM353 605h3v2h-3zM87 610h3v2h-3zM568 611h2v3h-2zM37 615h2v2h-2zM86 616h3v1h-3zM244 617h4v2h-4zM606 617h3v1h-3zM614 618h4v2h-4zM454 619h2v3h-2zM142 620h3v1h-3zM381 620h3v2h-3zM813 620h5v2h-5zM203 622h3v2h-3zM472 622h5v2h-5zM608 623h3v1h-3zM721 623h2v2h-2zM609 624h4v2h-4zM350 629h4v1h-4zM762 630h4v1h-4zM286 631h3v2h-3zM202 632h2v2h-2zM54 633h3v1h-3zM763 634h2v2h-2zM564 635h3v2h-3zM709 636h5v2h-5zM777 638h3v2h-3zM586 639h2v3h-2zM521 640h4v2h-4zM564 642h3v2h-3zM366 645h4v1h-4zM58 646h5v2h-5zM499 648h4v2h-4zM116 649h4v1h-4zM531 650h4v2h-4zM420 652h4v1h-4zM62 653h2v3h-2zM800 656h4v1h-4zM385 661h2v2h-2zM434 661h3v2h-3zM91 669h2v2h-2zM386 669h4v2h-4zM453 669h4v2h-4zM143 670h3v1h-3zM644 670h2v2h-2zM119 672h2v3h-2zM181 672h3v2h-3zM154 675h3v1h-3zM433 679h3v1h-3zM429 683h2v2h-2zM226 685h2v2h-2zM308 686h2v2h-2zM215 689h3v2h-3zM261 691h3v2h-3zM717 694h2v3h-2zM155 698h3v2h-3zM353 699h4v2h-4zM317 700h4v2h-4zM518 703h2v2h-2zM489 705h3v2h-3zM212 706h3v2h-3zM575 707h5v2h-5zM557 708h3v2h-3zM616 710h2v3h-2zM98 711h2v2h-2zM396 711h3v1h-3zM682 711h3v1h-3zM70 714h2v2h-2zM800 714h3v2h-3zM226 717h2v2h-2zM195 720h4v1h-4zM186 721h4v2h-4zM619 726h4v2h-4zM5 728h4v2h-4zM767 728h4v1h-4zM64 732h5v2h-5zM639 732h4v1h-4zM72 736h3v2h-3zM308 736h2v2h-2zM608 737h3v2h-3zM399 739h4v1h-4zM122 740h4v1h-4zM677 742h2v2h-2zM510 743h3v1h-3zM773 745h4v2h-4zM781 751h2v3h-2zM102 752h4v2h-4zM583 752h5v2h-5zM740 752h4v1h-4zM12 754h2v3h-2zM606 755h4v1h-4zM189 757h3v2h-3zM58 760h3v1h-3zM524 760h3v1h-3zM620 760h3v1h-3z"/></g><g filter="url(#bs)"><path fill="#0c0b42" d="M455.7 134h5.4v2h-5.4zM455.9 152h5.4v2h-5.4zM809.3 190h5.4v2h-5.4zM809.3 192h5.4v2h-5.4zM809.3 236h5.4v2h-5.4z"/><path fill="#0e0c4b" d="M228 231.8h3v2.2h-3zM250 231.8h2v2.2h-2zM614 231.8h2v2.2h-2zM616 231.8h3v2.2h-3zM630 231.8h2v2.2h-2zM455.8 142h5.4v2h-5.4zM455.9 156h5.4v2h-5.4zM455.9 164h5.4v2h-5.4zM455.7 170h6v2h-6zM456.5 278h6v2h-6zM456.8 282h5.4v2h-5.4zM456.8 284h5.4v2h-5.4zM456.8 286h5.4v2h-5.4zM809.3 194h5.4v2h-5.4zM809.3 196h5.4v2h-5.4zM809.3 238h5.4v2h-5.4zM809.3 246h5.4v2h-5.4zM810.5 338h3v2h-3zM260.4 225h5.5v2h-5.5zM277.2 200h3.5v2h-3.5zM276.2 214h5.5v2h-5.5zM490.6 235h5.5v2h-5.5zM651.9 203h3v2h-3zM74.5 275h3v2h-3zM74.5 277h3v2h-3z"/><path fill="#0f0d54" d="M231 231.8h2v2.2h-2zM237 231.8h4v2.2h-4zM264 231.8h2v2.2h-2zM400 231.8h4v2.2h-4zM407 231.8h1v2.2h-1zM486 231.8h3v2.2h-3zM489 231.8h2v2.2h-2zM491 231.8h1v2.2h-1zM589 231.8h1v2.2h-1zM596 231.8h3v2.2h-3zM599 231.8h2v2.2h-2zM455.9 154h5.4v2h-5.4zM455.9 158h5.4v2h-5.4zM456.0 168h5.4v2h-5.4zM455.7 174h6v2h-6zM456.8 288h5.4v2h-5.4zM456.8 290h5.4v2h-5.4zM456.9 296h5.4v2h-5.4zM458.6 402h3.4v2h-3.4zM458.7 406h3.4v2h-3.4zM458.7 408h3.4v2h-3.4zM809.3 200h5.4v2h-5.4zM809.3 234h5.4v2h-5.4zM809.3 240h5.4v2h-5.4zM184.1 215h5.5v2h-5.5zM185.1 243h3.5v2h-3.5zM185.1 245h3.5v2h-3.5zM260.4 217h5.5v2h-5.5zM277.2 202h3.5v2h-3.5zM277.2 236h3.5v2h-3.5zM318.7 206h3v2h-3zM490.6 245h5.5v2h-5.5zM74.5 279h3v2h-3zM74.5 287h3v2h-3zM74.5 289h3v2h-3z"/><path fill="#100e5c" d="M40 231.8h2v2.2h-2zM42 231.8h2v2.2h-2zM47 231.8h2v2.2h-2zM241 231.8h2v2.2h-2zM285 231.8h2v2.2h-2zM287 231.8h2v2.2h-2zM293 231.8h3v2.2h-3zM296 231.8h2v2.2h-2zM344 231.8h3v2.2h-3zM347 231.8h2v2.2h-2zM369 231.8h3v2.2h-3zM398 231.8h2v2.2h-2zM404 231.8h3v2.2h-3zM419 231.8h4v2.2h-4zM427 231.8h4v2.2h-4zM431 231.8h2v2.2h-2zM468 231.8h2v2.2h-2zM474 231.8h3v2.2h-3zM481 231.8h1v2.2h-1zM566 231.8h3v2.2h-3zM573 231.8h4v2.2h-4zM585 231.8h4v2.2h-4zM601 231.8h2v2.2h-2zM626 231.8h4v2.2h-4zM456.0 26h3.4v2h-3.4zM458.4 372h3.4v2h-3.4zM458.5 376h3.4v2h-3.4zM458.6 394h3.4v2h-3.4zM458.6 396h3.4v2h-3.4zM809.3 198h5.4v2h-5.4zM810.5 330h3v2h-3zM185.1 197h3.5v2h-3.5zM185.1 199h3.5v2h-3.5zM185.1 201h3.5v2h-3.5zM184.1 221h5.5v2h-5.5zM185.1 239h3.5v2h-3.5zM260.4 223h5.5v2h-5.5zM276.2 224h5.5v2h-5.5zM277.2 238h3.5v2h-3.5zM318.7 204h3v2h-3zM318.7 208h3v2h-3zM318.7 212h3v2h-3zM318.7 246h3v2h-3zM307.5 223h3v2h-3zM725.2 218h3v2h-3zM725.2 222h3v2h-3zM756.0 219h3v2h-3zM756.0 221h3v2h-3zM756.0 223h3v2h-3zM756.0 243h3v2h-3zM651.9 205h3v2h-3zM651.9 207h3v2h-3zM651.9 215h3v2h-3zM74.5 273h3v2h-3zM74.5 281h3v2h-3z"/><path fill="#141167" d="M7 231.8h3v2.2h-3zM38 231.8h2v2.2h-2zM76 231.8h3v2.2h-3zM82 231.8h4v2.2h-4zM97 231.8h3v2.2h-3zM272 231.8h2v2.2h-2zM298 231.8h3v2.2h-3zM342 231.8h2v2.2h-2zM349 231.8h2v2.2h-2zM380 231.8h4v2.2h-4zM384 231.8h4v2.2h-4zM433 231.8h4v2.2h-4zM445 231.8h4v2.2h-4zM465 231.8h3v2.2h-3zM512 231.8h3v2.2h-3zM517 231.8h3v2.2h-3zM520 231.8h2v2.2h-2zM551 231.8h4v2.2h-4zM569 231.8h4v2.2h-4zM577 231.8h4v2.2h-4zM603 231.8h3v2.2h-3zM619 231.8h4v2.2h-4zM455.9 20h3.4v2h-3.4zM456.1 40h3.4v2h-3.4zM456.1 42h3.4v2h-3.4zM456.1 44h3.4v2h-3.4zM456.2 56h3.4v2h-3.4zM456.3 70h3.4v2h-3.4zM456.3 76h3.4v2h-3.4zM456.3 78h3.4v2h-3.4zM456.4 86h3.4v2h-3.4zM456.8 280h5.4v2h-5.4zM458.4 368h3.4v2h-3.4zM458.5 380h3.4v2h-3.4zM458.7 404h3.4v2h-3.4zM458.7 410h3.4v2h-3.4zM810.3 140h3.4v2h-3.4zM810.3 142h3.4v2h-3.4zM810.3 152h3.4v2h-3.4zM810.3 318h3.4v2h-3.4zM810.5 328h3v2h-3zM184.1 219h5.5v2h-5.5zM260.4 219h5.5v2h-5.5zM277.2 206h3.5v2h-3.5zM276.2 220h5.5v2h-5.5zM276.2 222h5.5v2h-5.5zM277.2 234h3.5v2h-3.5zM318.7 214h3v2h-3zM318.7 216h3v2h-3zM318.7 218h3v2h-3zM318.7 222h3v2h-3zM318.7 242h3v2h-3zM307.5 221h3v2h-3zM512.5 220h3v2h-3zM512.5 232h3v2h-3zM725.2 230h3v2h-3zM725.2 232h3v2h-3zM725.2 234h3v2h-3zM756.0 225h3v2h-3zM756.0 227h3v2h-3zM651.9 201h3v2h-3zM651.9 217h3v2h-3zM74.5 283h3v2h-3zM74.5 285h3v2h-3z"/><path fill="#191371" d="M44 231.8h3v2.2h-3zM93 231.8h4v2.2h-4zM107 231.8h3v2.2h-3zM206 231.8h4v2.2h-4zM210 231.8h4v2.2h-4zM220 231.8h4v2.2h-4zM260 231.8h4v2.2h-4zM274 231.8h2v2.2h-2zM308 231.8h2v2.2h-2zM310 231.8h3v2.2h-3zM319 231.8h3v2.2h-3zM376 231.8h4v2.2h-4zM423 231.8h2v2.2h-2zM477 231.8h2v2.2h-2zM537 231.8h3v2.2h-3zM545 231.8h2v2.2h-2zM581 231.8h4v2.2h-4zM455.9 22h3.4v2h-3.4zM456.0 28h3.4v2h-3.4zM456.0 34h3.4v2h-3.4zM456.0 36h3.4v2h-3.4zM456.1 46h3.4v2h-3.4zM456.1 48h3.4v2h-3.4zM456.2 52h3.4v2h-3.4zM456.2 58h3.4v2h-3.4zM456.2 60h3.4v2h-3.4zM456.3 68h3.4v2h-3.4zM456.3 74h3.4v2h-3.4zM456.4 82h3.4v2h-3.4zM456.4 84h3.4v2h-3.4zM456.4 92h3.4v2h-3.4zM456.5 94h3.4v2h-3.4zM456.5 100h3.4v2h-3.4zM456.5 102h3.4v2h-3.4zM455.7 172h6v2h-6zM455.7 176h6v2h-6zM455.8 182h6v2h-6zM456.4 276h6v2h-6zM458.3 356h3.4v2h-3.4zM458.3 360h3.4v2h-3.4zM458.4 366h3.4v2h-3.4zM458.5 388h3.4v2h-3.4zM458.6 390h3.4v2h-3.4zM458.6 392h3.4v2h-3.4zM458.6 400h3.4v2h-3.4zM810.3 150h3.4v2h-3.4zM810.3 298h3.4v2h-3.4zM810.3 302h3.4v2h-3.4zM810.3 310h3.4v2h-3.4zM810.3 316h3.4v2h-3.4zM810.5 320h3v2h-3zM810.5 322h3v2h-3zM810.5 324h3v2h-3zM810.5 326h3v2h-3zM810.5 332h3v2h-3zM185.1 233h3.5v2h-3.5zM185.1 241h3.5v2h-3.5zM277.2 204h3.5v2h-3.5zM318.7 224h3v2h-3zM318.7 226h3v2h-3zM318.7 230h3v2h-3zM318.7 236h3v2h-3zM318.7 252h3v2h-3zM318.7 254h3v2h-3zM318.7 272h3v2h-3zM318.7 276h3v2h-3zM318.7 278h3v2h-3zM307.5 225h3v2h-3zM307.5 233h3v2h-3zM490.6 237h5.5v2h-5.5zM490.6 243h5.5v2h-5.5zM512.5 214h3v2h-3zM512.5 216h3v2h-3zM512.5 218h3v2h-3zM512.5 222h3v2h-3zM512.5 230h3v2h-3zM725.2 224h3v2h-3zM725.2 228h3v2h-3zM725.2 236h3v2h-3zM756.0 233h3v2h-3zM651.9 209h3v2h-3zM651.9 213h3v2h-3z"/><path fill="#1d167c" d="M4 231.8h3v2.2h-3zM14 231.8h2v2.2h-2zM49 231.8h2v2.2h-2zM53 231.8h1v2.2h-1zM100 231.8h2v2.2h-2zM102 231.8h1v2.2h-1zM117 231.8h4v2.2h-4zM190 231.8h4v2.2h-4zM200 231.8h2v2.2h-2zM202 231.8h2v2.2h-2zM279 231.8h4v2.2h-4zM283 231.8h2v2.2h-2zM289 231.8h4v2.2h-4zM351 231.8h2v2.2h-2zM388 231.8h2v2.2h-2zM442 231.8h3v2.2h-3zM470 231.8h4v2.2h-4zM479 231.8h2v2.2h-2zM500 231.8h4v2.2h-4zM534 231.8h3v2.2h-3zM555 231.8h3v2.2h-3zM558 231.8h2v2.2h-2zM455.9 16h3.4v2h-3.4zM455.9 18h3.4v2h-3.4zM456.0 24h3.4v2h-3.4zM456.0 30h3.4v2h-3.4zM456.1 38h3.4v2h-3.4zM456.2 54h3.4v2h-3.4zM456.2 64h3.4v2h-3.4zM456.3 72h3.4v2h-3.4zM456.5 96h3.4v2h-3.4zM456.5 104h3.4v2h-3.4zM456.5 106h3.4v2h-3.4zM456.6 118h3.4v2h-3.4zM455.7 178h6v2h-6zM455.8 184h6v2h-6zM455.8 188h6v2h-6zM458.2 344h3.4v2h-3.4zM458.3 358h3.4v2h-3.4zM458.4 374h3.4v2h-3.4zM458.5 378h3.4v2h-3.4zM458.5 382h3.4v2h-3.4zM458.6 398h3.4v2h-3.4zM810.3 144h3.4v2h-3.4zM810.3 148h3.4v2h-3.4zM810.3 154h3.4v2h-3.4zM810.3 170h3.4v2h-3.4zM810.3 176h3.4v2h-3.4zM809.3 202h5.4v2h-5.4zM809.3 232h5.4v2h-5.4zM810.3 288h3.4v2h-3.4zM810.3 290h3.4v2h-3.4zM810.3 292h3.4v2h-3.4zM810.3 300h3.4v2h-3.4zM810.3 314h3.4v2h-3.4zM185.1 203h3.5v2h-3.5zM184.1 217h5.5v2h-5.5zM185.1 231h3.5v2h-3.5zM185.1 237h3.5v2h-3.5zM276.2 218h5.5v2h-5.5zM277.2 232h3.5v2h-3.5zM318.7 210h3v2h-3zM318.7 238h3v2h-3zM318.7 240h3v2h-3zM318.7 244h3v2h-3zM318.7 250h3v2h-3zM307.5 229h3v2h-3zM307.5 231h3v2h-3zM491.6 229h3.5v2h-3.5zM512.5 226h3v2h-3zM512.5 228h3v2h-3zM725.2 220h3v2h-3zM725.2 226h3v2h-3zM756.0 235h3v2h-3zM756.0 237h3v2h-3zM756.0 239h3v2h-3zM651.9 211h3v2h-3z"/><path fill="#211986" d="M2 231.8h2v2.2h-2zM51 231.8h2v2.2h-2zM86 231.8h3v2.2h-3zM89 231.8h4v2.2h-4zM110 231.8h3v2.2h-3zM113 231.8h4v2.2h-4zM121 231.8h3v2.2h-3zM124 231.8h2v2.2h-2zM146 231.8h2v2.2h-2zM197 231.8h3v2.2h-3zM204 231.8h2v2.2h-2zM214 231.8h4v2.2h-4zM255 231.8h2v2.2h-2zM257 231.8h3v2.2h-3zM266 231.8h2v2.2h-2zM268 231.8h4v2.2h-4zM306 231.8h2v2.2h-2zM313 231.8h4v2.2h-4zM317 231.8h2v2.2h-2zM330 231.8h2v2.2h-2zM335 231.8h3v2.2h-3zM338 231.8h2v2.2h-2zM353 231.8h4v2.2h-4zM372 231.8h4v2.2h-4zM417 231.8h2v2.2h-2zM425 231.8h2v2.2h-2zM440 231.8h2v2.2h-2zM449 231.8h4v2.2h-4zM504 231.8h4v2.2h-4zM515 231.8h2v2.2h-2zM522 231.8h4v2.2h-4zM526 231.8h3v2.2h-3zM531 231.8h3v2.2h-3zM547 231.8h4v2.2h-4zM456.0 32h3.4v2h-3.4zM456.1 50h3.4v2h-3.4zM456.4 80h3.4v2h-3.4zM456.4 88h3.4v2h-3.4zM455.8 180h6v2h-6zM456.4 272h6v2h-6zM456.4 274h6v2h-6zM458.2 336h3.4v2h-3.4zM458.2 340h3.4v2h-3.4zM458.2 342h3.4v2h-3.4zM458.2 346h3.4v2h-3.4zM458.3 350h3.4v2h-3.4zM458.3 354h3.4v2h-3.4zM458.4 362h3.4v2h-3.4zM458.4 364h3.4v2h-3.4zM458.4 370h3.4v2h-3.4zM458.5 384h3.4v2h-3.4zM458.5 386h3.4v2h-3.4zM810.3 146h3.4v2h-3.4zM810.3 156h3.4v2h-3.4zM810.3 160h3.4v2h-3.4zM810.3 162h3.4v2h-3.4zM810.3 166h3.4v2h-3.4zM810.3 168h3.4v2h-3.4zM809.3 204h5.4v2h-5.4zM809.3 224h5.4v2h-5.4zM809.3 226h5.4v2h-5.4zM809.3 230h5.4v2h-5.4zM810.3 274h3.4v2h-3.4zM810.3 282h3.4v2h-3.4zM810.3 286h3.4v2h-3.4zM810.3 294h3.4v2h-3.4zM810.3 296h3.4v2h-3.4zM810.3 308h3.4v2h-3.4zM185.1 205h3.5v2h-3.5zM185.1 235h3.5v2h-3.5zM261.4 211h3.5v2h-3.5zM260.4 221h5.5v2h-5.5zM277.2 208h3.5v2h-3.5zM318.7 220h3v2h-3zM318.7 228h3v2h-3zM318.7 232h3v2h-3zM318.7 234h3v2h-3zM318.7 248h3v2h-3zM318.7 256h3v2h-3zM318.7 258h3v2h-3zM318.7 274h3v2h-3zM307.5 227h3v2h-3zM490.6 239h5.5v2h-5.5zM491.6 249h3.5v2h-3.5zM512.5 224h3v2h-3zM756.0 231h3v2h-3zM756.0 241h3v2h-3z"/><path fill="#261b90" d="M79 231.8h3v2.2h-3zM129 231.8h1v2.2h-1zM148 231.8h4v2.2h-4zM161 231.8h4v2.2h-4zM194 231.8h3v2.2h-3zM322 231.8h3v2.2h-3zM332 231.8h3v2.2h-3zM340 231.8h2v2.2h-2zM413 231.8h4v2.2h-4zM437 231.8h3v2.2h-3zM453 231.8h1v2.2h-1zM508 231.8h4v2.2h-4zM529 231.8h2v2.2h-2zM540 231.8h2v2.2h-2zM456.2 62h3.4v2h-3.4zM456.3 66h3.4v2h-3.4zM456.4 90h3.4v2h-3.4zM456.5 98h3.4v2h-3.4zM456.6 108h3.4v2h-3.4zM456.6 110h3.4v2h-3.4zM456.6 114h3.4v2h-3.4zM456.6 116h3.4v2h-3.4zM456.7 122h3.4v2h-3.4zM456.8 136h3.4v2h-3.4zM456.4 270h6v2h-6zM458.0 308h3.4v2h-3.4zM458.0 314h3.4v2h-3.4zM458.1 324h3.4v2h-3.4zM458.2 334h3.4v2h-3.4zM458.2 338h3.4v2h-3.4zM810.3 158h3.4v2h-3.4zM810.3 164h3.4v2h-3.4zM810.3 172h3.4v2h-3.4zM810.3 174h3.4v2h-3.4zM810.3 178h3.4v2h-3.4zM810.3 182h3.4v2h-3.4zM809.3 206h5.4v2h-5.4zM809.3 222h5.4v2h-5.4zM810.3 256h3.4v2h-3.4zM810.3 258h3.4v2h-3.4zM810.3 266h3.4v2h-3.4zM810.3 280h3.4v2h-3.4zM810.3 284h3.4v2h-3.4zM810.3 304h3.4v2h-3.4zM810.3 306h3.4v2h-3.4zM810.3 312h3.4v2h-3.4zM185.1 207h3.5v2h-3.5zM318.7 260h3v2h-3zM318.7 262h3v2h-3zM490.6 241h5.5v2h-5.5zM756.0 229h3v2h-3z"/><path fill="#2a1e9b" d="M10 231.8h4v2.2h-4zM18 231.8h3v2.2h-3zM21 231.8h2v2.2h-2zM126 231.8h3v2.2h-3zM135 231.8h2v2.2h-2zM142 231.8h4v2.2h-4zM542 231.8h3v2.2h-3zM456.6 112h3.4v2h-3.4zM456.7 132h3.4v2h-3.4zM455.3 186h7v2h-7zM455.8 190h6v2h-6zM455.8 192h6v2h-6zM458.0 310h3.4v2h-3.4zM458.0 312h3.4v2h-3.4zM458.0 316h3.4v2h-3.4zM458.0 318h3.4v2h-3.4zM458.1 328h3.4v2h-3.4zM458.1 332h3.4v2h-3.4zM458.3 348h3.4v2h-3.4zM458.3 352h3.4v2h-3.4zM810.3 184h3.4v2h-3.4zM810.3 186h3.4v2h-3.4zM808.8 210h6.4v2h-6.4zM809.3 228h5.4v2h-5.4zM810.3 250h3.4v2h-3.4zM810.3 254h3.4v2h-3.4zM810.3 260h3.4v2h-3.4zM810.3 262h3.4v2h-3.4zM810.3 270h3.4v2h-3.4zM810.3 272h3.4v2h-3.4zM810.3 276h3.4v2h-3.4zM810.3 278h3.4v2h-3.4zM185.1 209h3.5v2h-3.5zM261.4 213h3.5v2h-3.5zM261.4 227h3.5v2h-3.5zM277.2 212h3.5v2h-3.5zM277.2 228h3.5v2h-3.5zM277.2 230h3.5v2h-3.5zM318.7 264h3v2h-3z"/><path fill="#38209b" d="M152 231.8h4v2.2h-4zM165 231.8h3v2.2h-3zM456.6 120h3.4v2h-3.4zM456.7 124h3.4v2h-3.4zM456.7 126h3.4v2h-3.4zM456.8 144h3.4v2h-3.4zM455.4 202h7v2h-7zM457.9 298h3.4v2h-3.4zM457.9 300h3.4v2h-3.4zM457.9 304h3.4v2h-3.4zM458.1 322h3.4v2h-3.4zM458.1 326h3.4v2h-3.4zM458.1 330h3.4v2h-3.4zM810.3 180h3.4v2h-3.4zM808.8 208h6.4v2h-6.4zM810.3 264h3.4v2h-3.4zM810.3 268h3.4v2h-3.4zM185.1 229h3.5v2h-3.5zM277.2 210h3.5v2h-3.5zM318.7 268h3v2h-3zM318.7 270h3v2h-3zM491.6 231h3.5v2h-3.5zM491.6 233h3.5v2h-3.5z"/><path fill="#46219b" d="M137 231.8h2v2.2h-2zM158 231.8h3v2.2h-3zM456.7 128h3.4v2h-3.4zM456.8 138h3.4v2h-3.4zM456.8 140h3.4v2h-3.4zM456.8 146h3.4v2h-3.4zM456.9 160h3.4v2h-3.4zM456.9 162h3.4v2h-3.4zM455.4 194h7v2h-7zM455.4 198h7v2h-7zM455.9 266h7v2h-7zM457.9 292h3.4v2h-3.4zM457.9 294h3.4v2h-3.4zM458.1 320h3.4v2h-3.4zM810.3 188h3.4v2h-3.4zM808.8 212h6.4v2h-6.4zM808.8 214h6.4v2h-6.4zM808.8 216h6.4v2h-6.4zM808.8 220h6.4v2h-6.4zM810.3 242h3.4v2h-3.4zM810.3 244h3.4v2h-3.4zM185.1 211h3.5v2h-3.5zM185.1 227h3.5v2h-3.5zM261.4 215h3.5v2h-3.5zM491.6 247h3.5v2h-3.5z"/><path fill="#54229b" d="M16 231.8h2v2.2h-2zM139 231.8h3v2.2h-3zM156 231.8h2v2.2h-2zM168 231.8h2v2.2h-2zM456.7 130h3.4v2h-3.4zM456.7 134h3.4v2h-3.4zM456.8 148h3.4v2h-3.4zM456.8 150h3.4v2h-3.4zM456.9 152h3.4v2h-3.4zM457.0 166h3.4v2h-3.4zM455.4 196h7v2h-7zM455.4 204h7v2h-7zM455.4 206h7v2h-7zM455.9 268h7v2h-7zM457.9 302h3.4v2h-3.4zM458.0 306h3.4v2h-3.4zM810.3 190h3.4v2h-3.4zM810.3 192h3.4v2h-3.4zM808.8 218h6.4v2h-6.4zM810.3 236h3.4v2h-3.4zM810.3 248h3.4v2h-3.4zM810.3 252h3.4v2h-3.4zM185.1 213h3.5v2h-3.5zM185.1 223h3.5v2h-3.5zM185.1 225h3.5v2h-3.5zM277.2 216h3.5v2h-3.5zM277.2 226h3.5v2h-3.5zM318.7 266h3v2h-3z"/><path fill="#62249b" d="M456.8 142h3.4v2h-3.4zM456.9 156h3.4v2h-3.4zM456.9 164h3.4v2h-3.4zM456.7 170h4v2h-4zM455.4 200h7v2h-7zM455.5 216h7v2h-7zM457.5 278h4v2h-4zM457.8 282h3.4v2h-3.4zM457.8 284h3.4v2h-3.4zM457.8 286h3.4v2h-3.4zM810.3 194h3.4v2h-3.4zM810.3 196h3.4v2h-3.4zM810.3 238h3.4v2h-3.4zM810.3 246h3.4v2h-3.4zM261.4 225h3.5v2h-3.5zM277.2 214h3.5v2h-3.5zM491.6 235h3.5v2h-3.5z"/><path fill="#742892" d="M456.9 154h3.4v2h-3.4zM456.9 158h3.4v2h-3.4zM457.0 168h3.4v2h-3.4zM456.7 174h4v2h-4zM455.5 208h7v2h-7zM455.5 210h7v2h-7zM455.5 214h7v2h-7zM455.5 220h7v2h-7zM455.9 264h7v2h-7zM457.8 288h3.4v2h-3.4zM457.8 290h3.4v2h-3.4zM457.9 296h3.4v2h-3.4zM810.3 200h3.4v2h-3.4zM810.3 234h3.4v2h-3.4zM810.3 240h3.4v2h-3.4zM185.1 215h3.5v2h-3.5zM261.4 217h3.5v2h-3.5zM491.6 245h3.5v2h-3.5z"/><path fill="#862b89" d="M455.5 212h7v2h-7zM455.5 218h7v2h-7zM810.3 198h3.4v2h-3.4zM185.1 221h3.5v2h-3.5zM261.4 223h3.5v2h-3.5zM277.2 224h3.5v2h-3.5z"/><path fill="#982e81" d="M455.6 222h7v2h-7zM455.7 238h7v2h-7zM455.8 262h7v2h-7zM457.8 280h3.4v2h-3.4zM185.1 219h3.5v2h-3.5zM261.4 219h3.5v2h-3.5zM277.2 220h3.5v2h-3.5zM277.2 222h3.5v2h-3.5z"/><path fill="#aa3278" d="M456.7 172h4v2h-4zM456.7 176h4v2h-4zM456.8 182h4v2h-4zM455.6 224h7v2h-7zM455.6 228h7v2h-7zM455.7 242h7v2h-7zM455.7 244h7v2h-7zM455.7 246h7v2h-7zM455.7 248h7v2h-7zM455.8 252h7v2h-7zM455.8 260h7v2h-7zM457.4 276h4v2h-4zM491.6 237h3.5v2h-3.5zM491.6 243h3.5v2h-3.5z"/><path fill="#b83f69" d="M456.7 178h4v2h-4zM456.8 184h4v2h-4zM456.8 188h4v2h-4zM455.6 226h7v2h-7zM455.6 230h7v2h-7zM810.3 202h3.4v2h-3.4zM810.3 232h3.4v2h-3.4zM185.1 217h3.5v2h-3.5zM277.2 218h3.5v2h-3.5z"/><path fill="#c64b5a" d="M456.8 180h4v2h-4zM455.6 232h7v2h-7zM455.8 256h7v2h-7zM455.8 258h7v2h-7zM457.4 272h4v2h-4zM457.4 274h4v2h-4zM810.3 204h3.4v2h-3.4zM810.3 224h3.4v2h-3.4zM810.3 226h3.4v2h-3.4zM810.3 230h3.4v2h-3.4zM261.4 221h3.5v2h-3.5zM491.6 239h3.5v2h-3.5z"/><path fill="#d3584b" d="M455.6 234h7v2h-7zM455.7 240h7v2h-7zM455.8 254h7v2h-7zM457.4 270h4v2h-4zM810.3 206h3.4v2h-3.4zM810.3 222h3.4v2h-3.4zM491.6 241h3.5v2h-3.5z"/><path fill="#e1643c" d="M456.3 186h5v2h-5zM456.8 190h4v2h-4zM456.8 192h4v2h-4zM455.7 236h7v2h-7zM455.8 250h7v2h-7zM809.8 210h4.4v2h-4.4zM810.3 228h3.4v2h-3.4z"/><path fill="#e87332" d="M456.4 202h5v2h-5zM809.8 208h4.4v2h-4.4z"/><path fill="#f08228" d="M456.4 194h5v2h-5zM456.4 198h5v2h-5zM456.9 266h5v2h-5zM809.8 212h4.4v2h-4.4zM809.8 214h4.4v2h-4.4zM809.8 216h4.4v2h-4.4zM809.8 220h4.4v2h-4.4z"/><path fill="#f8911e" d="M456.4 196h5v2h-5zM456.4 204h5v2h-5zM456.4 206h5v2h-5zM456.9 268h5v2h-5zM809.8 218h4.4v2h-4.4z"/><path fill="#ffa014" d="M456.4 200h5v2h-5zM456.5 216h5v2h-5z"/><path fill="#ffae19" d="M456.5 208h5v2h-5zM456.5 210h5v2h-5zM456.5 214h5v2h-5zM456.5 220h5v2h-5zM456.9 264h5v2h-5z"/><path fill="#ffbb1e" d="M456.5 212h5v2h-5zM456.5 218h5v2h-5z"/><path fill="#ffc923" d="M456.6 222h5v2h-5zM456.7 238h5v2h-5zM456.8 262h5v2h-5z"/><path fill="#ffd728" d="M456.6 224h5v2h-5zM456.6 228h5v2h-5zM456.7 242h5v2h-5zM456.7 244h5v2h-5zM456.7 246h5v2h-5zM456.7 248h5v2h-5zM456.8 252h5v2h-5zM456.8 260h5v2h-5z"/><path fill="#ffe15a" d="M456.6 226h5v2h-5zM456.6 230h5v2h-5z"/><path fill="#ffeb8c" d="M456.6 232h5v2h-5zM456.8 256h5v2h-5zM456.8 258h5v2h-5z"/><path fill="#fff5be" d="M456.6 234h5v2h-5zM456.7 240h5v2h-5zM456.8 254h5v2h-5z"/><path fill="#fffff0" d="M456.7 236h5v2h-5zM456.8 250h5v2h-5z"/><path fill="#fffbe8" d="M459 227 C461 236 464.2 243 464.2 248 C464 252 461.5 257 460 263 C458.6 258 457 252 456.8 246 C456.8 240 457.8 233 459 227z"/></g><rect x="3" y="3" width="311" height="45" fill="#fff"/><g font-family="Liberation Mono" font-size="11.67" fill="#000"><text x="4.5" y="15">Screen Capture Time: 2026-01-18 04:32:01 UTC</text><text x="4.5" y="29">143048050 Hz</text><text x="4.5" y="43">Config = V8</text></g><rect x="5" y="53" width="99" height="39" fill="#fff"/><rect x="5" y="53" width="99" height="15" fill="url(#cbar)"/><rect x="5" y="69" width="99" height="1" fill="#000"/><path d="M8.5 69v4M13.5 69v4M17.5 69v4M22.5 69v4M26.5 69v7M30.5 69v4M35.5 69v4M39.5 69v4M44.5 69v4M48.5 69v10M53.5 69v4M57.5 69v4M61.5 69v4M66.5 69v4M70.5 69v7M75.5 69v4M79.5 69v4M84.5 69v4M88.5 69v4M93.5 69v10M97.5 69v4M101.5 69v4" stroke="#000" stroke-width="1" fill="none"/><g font-family="Liberation Sans" font-size="11" fill="#000"><text x="5" y="90">-80 dB -60</text><text x="84.5" y="90">-40</text></g><g font-family="Liberation Sans" font-size="10.85" fill="#f4f0e4"><rect x="74" y="760" width="1" height="20" fill="#f4f0e4"/><text transform="translate(71,778) rotate(-90)">2026-01-18 04:30:50</text><rect x="180" y="760" width="1" height="20" fill="#f4f0e4"/><text transform="translate(177,778) rotate(-90)">2026-01-18 04:31:00</text><rect x="295" y="760" width="1" height="20" fill="#f4f0e4"/><text transform="translate(292,778) rotate(-90)">2026-01-18 04:31:10</text><rect x="409" y="760" width="1" height="20" fill="#f4f0e4"/><text transform="translate(406,778) rotate(-90)">2026-01-18 04:31:20</text><rect x="524" y="760" width="1" height="20" fill="#f4f0e4"/><text transform="translate(521,778) rotate(-90)">2026-01-18 04:31:30</text><rect x="627" y="760" width="1" height="20" fill="#f4f0e4"/><text transform="translate(624,778) rotate(-90)">2026-01-18 04:31:40</text><rect x="731" y="760" width="1" height="20" fill="#f4f0e4"/><text transform="translate(728,778) rotate(-90)">2026-01-18 04:31:50</text></g><path d="M818 4.5h8M818 12.5h8M818 20.5h8M818 28.5h11M818 35.5h8M818 43.5h8M818 51.5h8M818 59.5h8M818 67.5h8M818 74.5h8M818 82.5h8M818 90.5h8M818 98.5h8M818 106.5h26M818 113.5h8M818 121.5h8M818 129.5h8M818 137.5h8M818 145.5h8M818 153.5h8M818 160.5h8M818 168.5h8M818 176.5h8M818 184.5h11M818 192.5h8M818 199.5h8M818 207.5h8M818 215.5h8M818 223.5h8M818 231.5h8M818 238.5h8M818 246.5h8M818 254.5h8M818 262.5h26M818 270.5h8M818 277.5h8M818 285.5h8M818 293.5h8M818 301.5h8M818 309.5h8M818 317.5h8M818 324.5h8M818 332.5h8M818 340.5h11M818 348.5h8M818 356.5h8M818 363.5h8M818 371.5h8M818 379.5h8M818 387.5h8M818 395.5h8M818 402.5h8M818 410.5h8M818 418.5h26M818 426.5h8M818 434.5h8M818 441.5h8M818 449.5h8M818 457.5h8M818 465.5h8M818 473.5h8M818 481.5h8M818 488.5h8M818 496.5h11M818 504.5h8M818 512.5h8M818 520.5h8M818 527.5h8M818 535.5h8M818 543.5h8M818 551.5h8M818 559.5h8M818 566.5h8M818 574.5h26M818 582.5h8M818 590.5h8M818 598.5h8M818 605.5h8M818 613.5h8M818 621.5h8M818 629.5h8M818 637.5h8M818 645.5h8M818 652.5h11M818 660.5h8M818 668.5h8M818 676.5h8M818 684.5h8M818 691.5h8M818 699.5h8M818 707.5h8M818 715.5h8M818 723.5h8M818 730.5h26M818 738.5h8M818 746.5h8M818 754.5h8M818 762.5h8M818 769.5h8M818 777.5h8" stroke="#000" stroke-width="1" fill="none"/><path d="M823 5L839.5 13.5M839.5 10.5V769.5L822.5 779" stroke="#12127e" stroke-width="1" fill="none"/><g font-family="Liberation Mono" font-size="11.67" fill="#606060"><text transform="translate(849,106.5) rotate(90)" text-anchor="middle">143050400</text><text transform="translate(849,262.5) rotate(90)" text-anchor="middle">143050200</text><text transform="translate(849,418.5) rotate(90)" text-anchor="middle">143050000</text><text transform="translate(849,574.5) rotate(90)" text-anchor="middle">143049800</text><text transform="translate(849,730.5) rotate(90)" text-anchor="middle">143049600 Hz</text></g><rect x="860" y="1" width="80" height="781" fill="#000"/><rect x="860" y="9" width="80" height="765" fill="#525252"/><path d="M860 28.5h80M860 106.5h80M860 184.5h80M860 262.5h80M860 340.5h80M860 418.5h80M860 496.5h80M860 574.5h80M860 652.5h80M860 730.5h80" stroke="#9c9c9c" stroke-width="1"/><path d="M860 9.5h7.5M860 10.5h10.8M860 11.5h7.8M860 12.5h7.3M860 13.5h7.1M860 14.5h6.2M860 15.5h5.7M860 17.5h2.3M860 19.5h7.9M860 20.5h7.2M860 21.5h7.9M860 23.5h5.8M860 24.5h3.9M860 25.5h11.2M860 26.5h7.0M860 29.5h8.9M860 30.5h7.7M860 31.5h7.4M860 32.5h5.4M860 34.5h8.9M860 36.5h13.4M860 37.5h11.3M860 38.5h12.6M860 39.5h9.5M860 41.5h9.7M860 42.5h7.9M860 44.5h8.6M860 45.5h13.8M860 46.5h7.3M860 47.5h10.7M860 48.5h5.3M860 49.5h6.1M860 50.5h7.1M860 52.5h7.7M860 55.5h9.6M860 58.5h10.4M860 59.5h10.9M860 61.5h10.2M860 62.5h7.8M860 63.5h6.7M860 65.5h12.2M860 67.5h13.0M860 69.5h13.6M860 72.5h5.6M860 73.5h5.3M860 74.5h7.1M860 75.5h4.6M860 76.5h5.4M860 77.5h2.5M860 79.5h6.0M860 81.5h8.9M860 82.5h8.7M860 83.5h6.3M860 84.5h13.0M860 87.5h13.5M860 89.5h6.7M860 92.5h10.7M860 93.5h10.0M860 95.5h11.4M860 98.5h6.5M860 99.5h5.8M860 101.5h7.0M860 103.5h8.7M860 109.5h6.7M860 111.5h1.4M860 115.5h4.1M860 117.5h6.6M860 118.5h7.3M860 119.5h3.9M860 121.5h12.4M860 124.5h9.3M860 125.5h10.6M860 127.5h13.1M860 128.5h9.0M860 130.5h13.3M860 131.5h3.1M860 133.5h8.8M860 134.5h7.0M860 135.5h8.7M860 136.5h7.2M860 138.5h8.3M860 139.5h6.5M860 141.5h11.0M860 142.5h7.7M860 144.5h9.1M860 147.5h7.6M860 148.5h4.3M860 149.5h4.3M860 150.5h5.8M860 151.5h7.1M860 155.5h5.6M860 166.5h9.7M860 167.5h7.5M860 168.5h8.2M860 169.5h7.1M860 172.5h1.8M860 174.5h4.2M860 176.5h17.5M860 179.5h6.9M860 183.5h8.7M860 187.5h9.6M860 190.5h7.8M860 192.5h9.0M860 193.5h6.4M860 194.5h13.5M860 195.5h11.4M860 196.5h14.4M860 199.5h7.2M860 200.5h5.0M860 201.5h5.4M860 202.5h4.2M860 204.5h1.4M860 205.5h6.6M860 206.5h11.1M860 207.5h12.5M860 209.5h9.8M860 215.5h10.0M860 216.5h7.5M860 217.5h13.1M860 219.5h4.6M860 220.5h4.4M860 221.5h6.8M860 222.5h6.1M860 223.5h6.6M860 225.5h3.7M860 226.5h1.7M860 227.5h9.3M860 228.5h7.1M860 230.5h13.3M860 232.5h10.9M860 234.5h10.2M860 235.5h12.2M860 236.5h3.9M860 237.5h4.8M860 239.5h7.5M860 240.5h7.5M860 241.5h9.3M860 243.5h2.0M860 246.5h7.1M860 247.5h7.2M860 250.5h5.9M860 253.5h6.2M860 255.5h4.2M860 256.5h4.6M860 257.5h11.4M860 258.5h10.3M860 260.5h9.2M860 261.5h8.0M860 262.5h6.3M860 264.5h4.7M860 265.5h6.1M860 266.5h7.3M860 267.5h7.3M860 270.5h12.1M860 272.5h10.0M860 273.5h10.0M860 274.5h6.6M860 279.5h8.6M860 281.5h7.1M860 282.5h10.3M860 283.5h11.5M860 284.5h5.2M860 285.5h5.7M860 286.5h5.6M860 287.5h7.3M860 288.5h8.4M860 289.5h7.6M860 290.5h10.1M860 291.5h11.0M860 292.5h15.5M860 293.5h13.2M860 294.5h7.3M860 296.5h6.2M860 297.5h10.9M860 298.5h11.6M860 299.5h11.7M860 300.5h4.3M860 301.5h8.4M860 302.5h9.9M860 303.5h16.6M860 307.5h7.7M860 308.5h13.3M860 309.5h10.3M860 311.5h7.2M860 315.5h8.4M860 316.5h5.0M860 317.5h7.7M860 318.5h6.0M860 319.5h8.1M860 320.5h2.6M860 321.5h2.0M860 322.5h2.4M860 323.5h8.0M860 324.5h8.1M860 327.5h7.7M860 330.5h10.1M860 333.5h8.0M860 335.5h7.3M860 338.5h10.7M860 340.5h8.0M860 343.5h7.9M860 344.5h11.3M860 346.5h8.0M860 347.5h13.9M860 348.5h3.5M860 349.5h2.6M860 350.5h3.9M860 351.5h4.2M860 352.5h3.2M860 353.5h5.0M860 354.5h4.3M860 355.5h1.3M860 357.5h2.3M860 358.5h6.2M860 359.5h2.1M860 361.5h9.0M860 362.5h6.8M860 363.5h7.4M860 364.5h12.9M860 365.5h9.5M860 366.5h7.6M860 370.5h8.3M860 374.5h7.4M860 375.5h7.8M860 377.5h7.4M860 379.5h9.3M860 381.5h10.2M860 382.5h10.4M860 384.5h8.2M860 385.5h13.9M860 387.5h7.8M860 391.5h8.4M860 399.5h7.7M860 401.5h7.9M860 403.5h8.6M860 404.5h13.8M860 405.5h7.5M860 410.5h12.0M860 411.5h5.9M860 412.5h6.6M860 414.5h6.9M860 415.5h4.8M860 416.5h7.9M860 417.5h11.5M860 418.5h15.0M860 419.5h7.4M860 421.5h6.3M860 422.5h5.0M860 427.5h8.7M860 434.5h12.5M860 435.5h13.8M860 436.5h6.4M860 438.5h9.8M860 442.5h7.0M860 445.5h6.7M860 446.5h6.2M860 447.5h9.9M860 448.5h9.5M860 452.5h7.7M860 459.5h8.5M860 461.5h5.1M860 462.5h9.8M860 463.5h12.3M860 465.5h10.9M860 466.5h8.1M860 469.5h6.4M860 470.5h5.4M860 471.5h7.7M860 472.5h6.2M860 474.5h7.3M860 478.5h12.4M860 480.5h7.7M860 481.5h12.4M860 483.5h10.7M860 487.5h6.4M860 489.5h7.9M860 490.5h5.1M860 492.5h10.9M860 493.5h8.4M860 494.5h11.5M860 495.5h6.4M860 496.5h7.0M860 497.5h7.1M860 498.5h10.0M860 500.5h7.4M860 505.5h13.8M860 508.5h9.0M860 509.5h6.7M860 510.5h3.4M860 514.5h8.8M860 526.5h6.7M860 527.5h8.9M860 528.5h7.7M860 529.5h9.0M860 530.5h6.5M860 531.5h10.8M860 532.5h10.0M860 533.5h7.5M860 534.5h11.9M860 535.5h8.1M860 538.5h4.6M860 539.5h6.4M860 540.5h6.9M860 541.5h4.8M860 542.5h5.7M860 544.5h4.6M860 545.5h4.0M860 547.5h8.4M860 548.5h8.0M860 550.5h11.6M860 551.5h9.2M860 552.5h8.4M860 554.5h7.0M860 555.5h3.2M860 556.5h3.1M860 558.5h10.8M860 559.5h14.4M860 561.5h9.0M860 562.5h7.4M860 563.5h10.5M860 564.5h11.7M860 565.5h10.2M860 566.5h13.2M860 568.5h4.1M860 569.5h1.4M860 570.5h9.9M860 579.5h8.4M860 580.5h11.3M860 582.5h13.2M860 583.5h9.3M860 585.5h5.6M860 586.5h7.0M860 592.5h10.4M860 594.5h11.0M860 598.5h11.9M860 600.5h3.0M860 603.5h6.6M860 605.5h5.6M860 608.5h9.1M860 610.5h6.7M860 613.5h12.2M860 614.5h9.5M860 621.5h7.4M860 623.5h6.7M860 624.5h4.7M860 625.5h8.8M860 626.5h7.3M860 627.5h12.0M860 628.5h16.6M860 629.5h10.6M860 630.5h6.7M860 631.5h7.2M860 632.5h10.3M860 635.5h7.8M860 638.5h8.9M860 639.5h6.7M860 640.5h3.3M860 641.5h16.9M860 642.5h7.8M860 643.5h6.6M860 644.5h10.5M860 645.5h6.6M860 647.5h5.2M860 648.5h6.1M860 650.5h7.2M860 651.5h7.0M860 652.5h4.5M860 653.5h6.2M860 654.5h9.0M860 657.5h7.6M860 658.5h6.4M860 660.5h8.8M860 661.5h7.2M860 664.5h2.3M860 667.5h11.8M860 668.5h7.8M860 669.5h10.4M860 671.5h5.1M860 672.5h8.0M860 674.5h10.9M860 675.5h5.7M860 677.5h5.6M860 679.5h10.4M860 680.5h12.4M860 683.5h14.4M860 687.5h6.8M860 689.5h9.9M860 690.5h9.8M860 691.5h4.6M860 693.5h12.5M860 694.5h9.4M860 695.5h8.4M860 696.5h9.2M860 697.5h8.6M860 698.5h12.4M860 699.5h9.1M860 700.5h5.2M860 701.5h6.7M860 702.5h7.2M860 704.5h6.9M860 706.5h6.5M860 709.5h5.9M860 711.5h10.4M860 712.5h9.6M860 714.5h10.4M860 718.5h8.2M860 719.5h6.7M860 721.5h7.9M860 722.5h6.6M860 723.5h10.7M860 724.5h17.8M860 725.5h7.9M860 727.5h10.0M860 728.5h5.7M860 729.5h6.1M860 730.5h7.2M860 731.5h9.4M860 732.5h8.5M860 733.5h7.3M860 735.5h7.3M860 736.5h7.3M860 738.5h12.1M860 739.5h7.9M860 743.5h6.0M860 744.5h13.1M860 746.5h8.2M860 747.5h7.1M860 749.5h7.4M860 750.5h2.6M860 751.5h6.5M860 752.5h10.0M860 753.5h6.1M860 754.5h12.5M860 755.5h10.6M860 756.5h7.2M860 758.5h9.9M860 760.5h11.8M860 761.5h9.5M860 763.5h7.0M860 765.5h8.9M860 768.5h11.7M860 769.5h8.6M860 770.5h9.2M860 772.5h7.8M860 773.5h13.6" stroke="#000" stroke-width="1"/><path d="M867.5 9.5h11.1M867.1 13.5h8.9M866.2 14.5h9.5M867.9 19.5h7.2M867.2 20.5h9.7M867.9 21.5h9.0M868.9 29.5h9.8M871.3 37.5h11.6M872.6 38.5h12.1M867.9 42.5h6.3M868.6 44.5h9.7M866.1 49.5h9.3M867.1 50.5h9.5M867.7 52.5h7.0M870.4 58.5h9.5M870.9 59.5h8.1M870.2 61.5h9.9M866.0 79.5h8.3M868.9 81.5h9.8M868.7 82.5h9.8M866.3 83.5h6.6M873.5 87.5h11.2M866.7 89.5h11.1M870.0 93.5h10.7M871.4 95.5h10.5M866.5 98.5h6.9M866.6 117.5h6.7M868.8 133.5h7.3M867.0 134.5h9.4M868.7 135.5h6.6M868.3 138.5h5.3M866.5 139.5h9.7M867.7 142.5h9.0M869.1 144.5h7.9M869.7 166.5h9.5M867.5 167.5h8.8M868.2 168.5h11.2M867.1 169.5h8.6M868.7 183.5h9.1M869.0 192.5h11.0M866.4 193.5h4.6M871.4 195.5h8.2M869.8 209.5h9.5M870.0 215.5h11.2M866.1 222.5h6.9M866.6 223.5h6.3M870.9 232.5h8.3M870.2 234.5h11.6M872.2 235.5h12.9M867.5 240.5h7.8M869.3 241.5h9.3M867.1 246.5h9.6M867.2 247.5h6.4M866.1 265.5h10.9M870.0 272.5h7.2M866.6 274.5h6.9M868.6 279.5h5.9M870.3 282.5h6.8M871.5 283.5h12.5M867.3 287.5h5.4M868.4 288.5h10.0M873.2 293.5h6.7M868.4 301.5h5.4M869.9 302.5h7.2M867.7 307.5h10.9M870.3 309.5h10.2M868.4 315.5h10.9M868.1 319.5h11.6M868.0 323.5h5.1M870.1 330.5h8.8M868.0 333.5h5.4M867.9 343.5h11.5M868.0 346.5h10.4M867.4 363.5h10.0M869.5 365.5h7.4M867.6 366.5h8.4M868.3 370.5h7.6M867.4 374.5h8.9M869.3 379.5h5.2M868.2 384.5h10.8M868.4 391.5h6.1M868.6 403.5h7.1M866.6 412.5h5.7M867.9 416.5h10.2M871.5 417.5h8.6M866.3 421.5h6.4M866.4 436.5h11.1M869.8 438.5h6.5M866.7 445.5h8.4M866.2 446.5h10.0M869.5 448.5h12.1M867.7 452.5h9.3M869.8 462.5h6.2M872.3 463.5h12.3M870.9 465.5h11.3M868.1 466.5h10.9M867.3 474.5h7.8M866.4 487.5h10.1M868.4 493.5h5.0M871.5 494.5h10.6M866.4 495.5h8.7M867.0 496.5h7.7M867.4 500.5h4.5M866.7 509.5h5.4M866.7 526.5h7.5M867.7 528.5h7.3M866.5 530.5h10.7M868.1 535.5h7.0M868.4 547.5h5.3M871.6 550.5h9.1M869.2 551.5h7.4M868.4 552.5h10.0M870.8 558.5h11.1M869.0 561.5h9.0M867.4 562.5h4.5M870.2 565.5h11.0M869.3 583.5h11.2M870.4 592.5h8.3M871.9 598.5h7.9M866.7 610.5h10.1M869.5 614.5h9.4M868.8 625.5h9.1M867.3 626.5h9.8M872.0 627.5h6.5M866.7 630.5h9.2M866.6 643.5h10.6M866.6 645.5h9.7M866.1 648.5h9.9M868.8 660.5h8.9M871.8 667.5h12.3M870.4 669.5h12.0M866.8 687.5h5.4M869.8 690.5h6.6M868.4 695.5h9.9M869.2 696.5h7.9M868.6 697.5h5.2M869.1 699.5h9.8M866.7 701.5h9.1M867.2 702.5h5.1M866.5 706.5h10.1M869.6 712.5h6.8M868.2 718.5h5.5M866.6 722.5h8.2M870.7 723.5h8.1M868.5 732.5h8.6M867.3 733.5h9.2M867.3 735.5h10.3M867.3 736.5h4.5M867.9 739.5h10.5M866.0 743.5h9.0M866.5 751.5h5.4M869.5 761.5h11.6M868.9 765.5h9.0M868.6 769.5h11.8M867.8 772.5h9.9M873.6 773.5h7.8" stroke="#0c0c40" stroke-width="1"/><polyline points="861.4,1.0 860.9,3.7 861.0,6.3 861.0,9.0 861.9,12.5 861.5,16.0 863.0,20.0 866.0,23.0 868.3,27.0 867.9,29.7 868.9,32.3 868.5,35.0 868.5,37.5 868.3,40.0 867.0,42.5 867.0,45.0 868.3,47.8 869.0,50.5 869.5,53.2 870.6,56.0 870.1,58.9 869.6,61.7 868.5,64.6 868.8,67.4 869.4,70.2 869.7,73.1 871.0,75.9 871.3,78.7 871.1,81.5 870.2,84.3 870.6,87.2 870.0,90.0 870.5,92.7 870.4,95.3 870.6,98.0 870.0,100.5 869.5,103.0 869.2,105.5 867.8,108.0 869.6,111.7 870.6,115.4 869.7,117.9 868.9,120.4 868.9,123.0 868.8,125.5 867.8,128.0 867.7,130.8 868.3,133.6 869.4,136.4 869.3,139.2 870.0,142.0 870.8,144.8 870.3,147.7 871.0,150.6 871.3,153.4 870.5,156.2 870.0,159.0 870.0,161.8 870.2,165.1 871.5,168.3 872.7,171.6 872.0,174.9 871.2,178.2 871.3,181.5 873.5,184.2 874.9,187.0 875.0,189.5 875.7,192.1 876.0,194.6 876.2,197.2 876.3,199.7 880.2,202.7 883.2,205.8 886.0,208.8 888.2,211.5 890.8,214.2 893.8,216.9 891.5,219.6 889.9,222.2 887.7,224.9 885.1,227.5 882.6,230.2 885.4,233.7 887.7,237.2 890.3,240.7 898.3,243.8 905.8,247.0 899.0,249.8 893.1,252.7 886.8,256.0 881.5,259.2 874.9,262.5 872.0,267.4 873.0,270.2 872.7,273.0 870.9,275.8 869.4,278.7 867.8,281.5 871.3,285.7 869.6,289.2 867.8,292.7 868.4,295.5 870.3,298.2 871.3,301.0 870.6,303.6 871.0,306.2 870.6,308.8 867.5,312.0 870.1,315.4 868.4,319.0 869.7,321.1 867.8,324.7 869.9,328.1 868.1,330.8 869.3,333.2 867.8,335.8 870.2,338.2 868.0,341.5 869.9,343.7 868.3,346.2 869.9,349.5 867.9,353.2 869.8,356.2 867.4,358.7 869.6,362.6 868.1,365.5 870.4,368.7 867.5,372.2 869.8,374.4 868.4,377.2 869.6,379.8 867.9,383.0 869.7,385.4 868.2,387.8 870.0,390.8 867.9,394.8 869.7,398.8 868.5,401.4 870.2,403.9 867.9,406.3 870.4,410.1 867.8,413.6 870.1,416.1 868.1,418.1 869.7,422.1 868.3,424.2 869.4,427.7 868.3,430.8 870.1,434.0 868.4,436.1 870.4,439.6 868.3,443.2 870.3,446.3 868.4,448.7 870.0,451.7 867.8,455.5 869.8,458.9 868.3,462.2 869.3,465.0 868.5,467.4 869.8,470.5 868.4,473.5 869.8,475.7 867.5,479.4 869.9,482.3 867.8,486.2 870.6,488.7 868.3,491.3 870.6,494.5 867.8,497.9 870.1,501.4 868.1,504.9 869.4,507.2 868.0,510.4 870.0,513.1 867.4,515.2 869.6,517.8 868.0,521.2 870.0,524.1 868.3,526.5 870.2,529.8 867.5,532.2 870.2,534.3 867.9,536.9 869.7,539.1 868.3,542.3 870.1,545.1 868.4,547.3 869.6,549.7 868.2,552.3 870.5,556.0 868.2,559.7 869.5,561.8 868.6,565.2 870.2,567.9 867.6,571.0 870.4,574.5 868.1,577.7 870.5,581.0 867.5,584.1 869.8,586.3 867.8,589.4 870.5,593.2 868.5,596.8 869.4,598.8 867.4,601.4 870.0,603.9 868.4,606.6 870.0,610.3 868.7,612.6 869.7,616.6 867.5,618.9 870.3,622.9 867.7,625.2 869.4,628.4 868.2,631.7 870.1,633.9 867.8,637.6 869.9,640.9 867.5,644.2 870.3,647.2 868.4,649.9 869.5,653.2 867.7,656.6 870.3,660.5 867.6,662.9 870.5,666.4 868.3,668.4 870.4,672.1 867.6,675.0 870.3,677.1 868.5,679.7 870.4,682.6 868.7,685.9 869.5,689.9 868.0,690.0 871.7,694.8 869.1,697.4 866.9,700.0 867.6,702.8 868.8,705.6 869.9,708.4 869.5,711.4 867.6,714.3 866.9,717.3 867.7,720.1 868.2,722.8 869.3,725.6 868.7,728.2 868.8,730.8 868.7,733.3 869.6,735.9 868.8,738.5 868.8,741.1 868.7,743.7 868.2,746.3 868.5,748.8 869.3,751.4 868.7,754.0 869.4,757.0 869.9,760.0 866.9,764.2 864.4,767.5 861.0,770.8 861.4,773.6 861.1,776.4 861.0,779.2 860.4,782.0" stroke="#b03636" stroke-width="2" fill="none" stroke-linejoin="miter" shape-rendering="crispEdges"/><circle cx="866.3" cy="17.4" r="2.7" fill="#000" stroke="#a02828" stroke-width="0.6"/><clipPath id="gp"><rect x="860" y="1" width="80" height="781"/></clipPath><g clip-path="url(#gp)" stroke="#3cdc3c" stroke-width="1.2" fill="none" stroke-linejoin="miter" shape-rendering="crispEdges"><polyline points="860.8,6.3 864.3,8.9 867.7,11.4 872.0,14.0 887.5,17.5 889.6,21.0 886.8,25.3 892.4,26.7 884.7,29.5 887.5,33.0 881.9,37.2 888.2,40.0 885.3,43.5 882.6,47.0 887.5,48.5 883.3,53.4 888.9,57.6 886.0,61.8 888.7,64.9 891.0,67.9 894.5,71.0 884.0,73.0 890.3,75.8 883.3,79.4 892.4,81.5 889.6,84.7 885.4,87.8 891.7,92.7 891.1,95.5 890.3,98.3 892.9,101.6 893.8,104.9 889.6,108.4 899.4,110.5 891.0,114.0 894.0,116.8 897.3,119.7 893.8,122.5 895.7,125.1 897.8,127.6 898.7,130.2 896.7,133.3 893.1,136.5 897.1,139.2 900.1,142.0 901.1,145.2 901.5,148.5 898.7,153.4 903.6,157.6 899.4,160.4 902.2,163.2 902.8,166.0 905.8,168.8 905.9,171.6 904.3,174.4 906.4,177.1 906.6,179.7 908.9,182.3 909.3,185.0 907.9,188.5 910.1,191.8 911.9,195.0 914.2,198.3 915.6,201.2 917.3,204.1 918.4,207.0 919.0,210.3 921.6,213.6 922.6,216.9 925.8,220.4 928.2,223.9 931.0,228.1 934.5,231.1 935.9,234.2 939.5,237.2 941.0,240.0"/><polyline points="941.0,255.0 939.5,256.9 930.1,260.4 919.8,263.9 917.7,267.4 906.9,270.5 895.2,273.7 898.0,276.5 893.3,279.0 887.5,281.5 897.3,284.3 888.2,288.5 898.0,290.6 895.6,293.4 893.8,296.2 896.6,298.3 888.2,303.2 893.0,306.9 896.6,310.5 888.9,313.3 893.1,317.6 887.5,319.7 890.9,322.9 895.2,326.0 886.1,329.5 891.0,330.2 885.4,333.0 892.4,337.2 884.0,342.1 886.7,345.0 890.3,347.8 888.2,349.2 886.2,352.0 886.6,354.8 884.7,357.6 887.5,361.8 884.0,364.6 886.8,367.4 881.2,372.3 883.9,375.4 886.7,378.4 889.6,381.5 881.2,384.3 891.7,388.5 881.9,391.3 884.0,394.1 886.8,396.9 881.9,399.0 888.2,403.9 881.2,405.3 888.2,408.8 880.0,412.0 889.0,416.0 882.2,420.0 884.2,422.1 881.5,424.0 883.4,426.5 882.6,428.3 883.7,430.4 882.7,433.4 883.7,435.9 882.6,438.0 884.3,439.8 882.6,441.4 884.6,444.4 881.7,446.1 883.3,448.8 881.2,450.8 883.7,453.4 881.7,455.9 884.3,457.5 882.4,460.5 884.7,462.4 881.3,464.1 883.3,466.5 881.8,469.4 883.8,471.1 881.5,473.2 884.0,475.8 881.3,477.9 883.3,480.2 882.2,482.1 883.4,484.1 882.5,485.8 884.3,488.4 882.4,490.9 884.6,493.1 881.4,494.6 884.5,497.6 882.4,500.4 884.2,502.3 881.9,504.3 883.7,506.4 882.5,508.9 883.8,511.7 881.7,514.2 884.8,515.9 882.5,517.8 884.7,520.3 882.2,523.1 883.9,525.0 882.1,526.9 883.7,529.0 881.6,531.8 883.3,533.6 882.4,535.4 884.4,537.6 881.5,540.0 884.1,542.5 881.5,545.0 883.7,547.7 881.7,549.6 884.5,551.8 881.9,553.9 884.0,555.7 881.2,557.9 883.5,560.3 881.7,562.2 884.1,564.0 881.6,566.4 884.3,568.4 882.4,570.0 883.5,572.4 881.9,574.0 884.6,576.7 881.6,578.6 883.9,580.4 882.6,582.9 883.7,585.8 882.5,588.2 884.2,590.0 882.6,592.3 884.4,594.2 881.4,596.5 884.0,598.9 882.1,601.1 884.0,603.7 882.0,605.8 884.4,608.6 881.8,610.9 883.5,613.6 882.2,616.5 883.7,618.2 881.8,620.8 883.6,623.7 882.6,625.5 883.5,628.1 882.3,631.1 884.7,633.0 881.4,635.4 884.0,636.9 881.2,639.3 884.1,640.8 881.3,643.4 884.7,644.9 881.3,646.5 883.4,648.6 882.0,650.9 884.1,653.6 882.3,655.6 884.0,657.4 881.5,660.2 883.3,662.0 882.0,664.2 883.9,666.7 881.8,668.5 884.1,671.2 881.8,674.1 883.5,675.7 881.8,678.4 884.0,681.1 882.4,683.0 884.0,686.0 882.0,688.4 885.3,690.0 884.6,693.0 883.0,696.0 883.4,699.1 883.2,702.3 882.3,705.4 880.0,709.0 884.1,711.4 880.6,715.0 883.1,717.6 884.7,720.3 880.6,724.4 881.6,727.4 883.0,730.4 884.2,733.7 885.9,737.0 882.3,740.0 885.9,742.3 884.1,745.1 883.2,747.8 880.6,750.6 885.9,753.5 883.0,756.5 885.9,760.0 881.8,763.6 884.7,766.0 877.6,770.8 872.7,774.0 868.7,777.3 861.6,780.3 860.4,782.0"/><polyline points="937.5,781 938.5,778.5 941,777.5"/></g></svg></body></html>
